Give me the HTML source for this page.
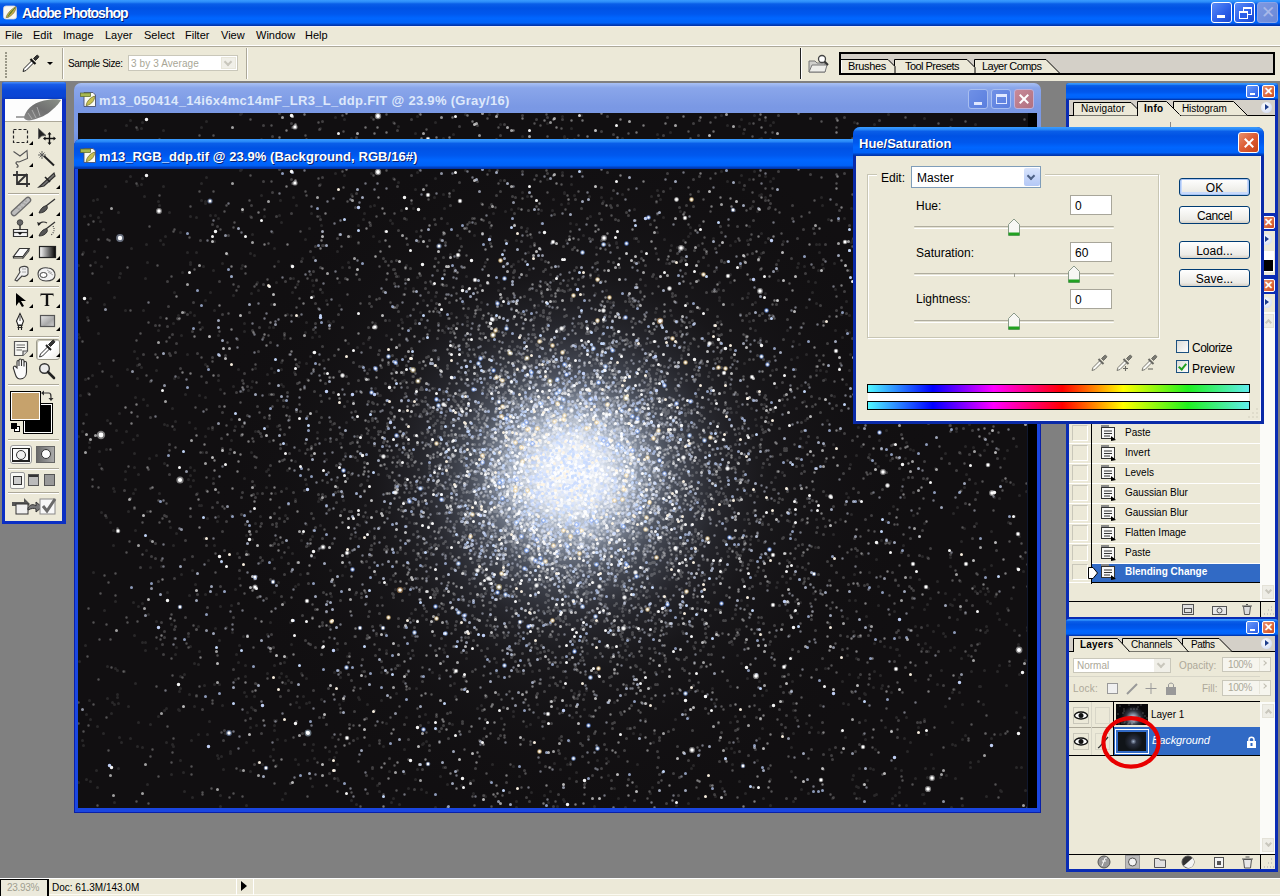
<!DOCTYPE html>
<html><head><meta charset="utf-8">
<style>
*{margin:0;padding:0;box-sizing:border-box}
html,body{width:1280px;height:896px;overflow:hidden;background:#808080;font-family:"Liberation Sans",sans-serif;font-size:11px;color:#000}
.a{position:absolute}
.t{position:absolute;white-space:nowrap;line-height:1}
.xpbar{background:linear-gradient(#3a9cff 0,#2a8af8 8%,#0a5ee8 15%,#0052e4 31%,#0058ee 54%,#0066ff 70%,#0062f8 88%,#0040c0 95%,#0030a0 100%)}
.face{background:#ece9d8}
</style></head><body>
<!-- app title bar -->
<div class="a xpbar" style="left:0;top:0;width:1280px;height:26px"></div><div class="a" style="left:0;top:26px;width:1280px;height:1px;background:#eef0f8"></div>
<svg class="a" style="left:3px;top:5px" width="15" height="15" viewBox="0 0 15 15"><rect x="0.5" y="1" width="13" height="13" rx="2.5" fill="#f8f8f2" stroke="#d0d4e0" stroke-width=".8"/><path d="M3 12.5 C4 9 7 5 13 1.5 C13 6 10 10 5 12.5Z" fill="#c0b048" stroke="#70602a" stroke-width=".6"/><path d="M5 11.5 C7 8 9 6 12 3" stroke="#5a8a30" stroke-width="1"/></svg><div class="t" style="left:22px;top:6px;font-size:14px;font-weight:bold;color:#fff;letter-spacing:-1px;text-shadow:1px 1px #0a1e70">Adobe Photoshop</div>
<div class="a" style="left:1211px;top:2px;width:21px;height:21px;border:1px solid #fff;border-radius:3px;background:linear-gradient(135deg,#5a8cf8,#2a5ee8 60%,#1848d0)"><div class="a" style="left:5px;top:12px;width:8px;height:3px;background:#fff"></div></div>
<div class="a" style="left:1234px;top:2px;width:21px;height:21px;border:1px solid #fff;border-radius:3px;background:linear-gradient(135deg,#5a8cf8,#2a5ee8 60%,#1848d0)"><div class="a" style="left:8px;top:4px;width:9px;height:8px;border:1px solid #fff;border-top-width:2px"></div><div class="a" style="left:4px;top:8px;width:9px;height:8px;border:1px solid #fff;border-top-width:2px;background:#2a5ee8"></div></div>
<div class="a" style="left:1257px;top:2px;width:21px;height:21px;border:1px solid #8aa4e8;border-radius:3px;background:linear-gradient(135deg,#7e98e0,#6a88d8)"><div class="t" style="left:3px;top:1px;font-size:17px;color:#a8b8e8">&#x2715;</div></div>

<!-- menu bar -->
<div class="a face" style="left:0;top:27px;width:1280px;height:19px"></div>
<div class="a" style="left:0;top:45px;width:1280px;height:1px;background:#fff"></div><div class="a" style="left:0;top:46px;width:1280px;height:1px;background:#aca899"></div>
<div class="t" style="left:5px;top:30px">File</div>
<div class="t" style="left:33px;top:30px">Edit</div>
<div class="t" style="left:63px;top:30px">Image</div>
<div class="t" style="left:105px;top:30px">Layer</div>
<div class="t" style="left:144px;top:30px">Select</div>
<div class="t" style="left:185px;top:30px">Filter</div>
<div class="t" style="left:221px;top:30px">View</div>
<div class="t" style="left:256px;top:30px">Window</div>
<div class="t" style="left:305px;top:30px">Help</div>

<!-- options bar -->
<div class="a face" style="left:0;top:47px;width:1280px;height:34px"></div>
<div class="a" style="left:5px;top:52px;width:2px;height:26px;background:repeating-linear-gradient(#9a9888 0 2px,transparent 2px 3px)"></div>
<svg class="a" style="left:21px;top:53px" width="34" height="20" viewBox="0 0 34 20"><path d="M2 18.5 L3 15.5 L11 7.5 L13 9.5 L5 17.5Z" fill="#fff" stroke="#222" stroke-width="1"/><path d="M9.5 6 L14.5 11" stroke="#111" stroke-width="2.2"/><path d="M12.5 5.5 L15.5 2.5 C16.5 1.5 18.5 3.5 17.5 4.5 L14.5 7.5Z" fill="#333" stroke="#111" stroke-width=".8"/><path d="M26 9 H32 L29 12Z" fill="#000"/></svg>
<div class="a" style="left:62px;top:48px;width:1px;height:31px;background:#aca899"></div>
<div class="a" style="left:63px;top:48px;width:1px;height:31px;background:#fff"></div>
<div class="t" style="left:68px;top:59px;font-size:10px;letter-spacing:-.35px">Sample Size:</div>
<div class="a" style="left:128px;top:55px;width:110px;height:16px;border:1px solid #c9c7ba;background:#fff"><div class="t" style="left:2px;top:3px;font-size:10px;letter-spacing:.1px;color:#a8a696">3 by 3 Average</div><div class="a" style="left:92px;top:1px;width:15px;height:12px;background:#f0efe8;border:1px solid #e8e6da"><div class="a" style="left:3px;top:1px;width:6px;height:6px;border-right:2px solid #c8c6bc;border-bottom:2px solid #c8c6bc;transform:rotate(45deg)"></div></div></div>
<div class="a" style="left:246px;top:48px;width:1px;height:31px;background:#aca899"></div>
<div class="a" style="left:247px;top:48px;width:1px;height:31px;background:#fff"></div>
<div class="a" style="left:800px;top:48px;width:1px;height:31px;background:#222"></div>
<div class="a" style="left:801px;top:48px;width:1px;height:31px;background:#fff"></div>
<svg class="a" style="left:807px;top:53px" width="24" height="22" viewBox="0 0 24 22"><path d="M2 8 H8 L10 10 H18 V19 H2 Z" fill="#d0d0cc" stroke="#777"/><path d="M2 19 L5 12 H20 L18 19Z" fill="#eeeeea" stroke="#777"/><circle cx="15" cy="6" r="3.5" fill="#fff" stroke="#444" stroke-width="1.3"/><path d="M17.5 8.5 L21 12" stroke="#333" stroke-width="2"/></svg>
<div class="a" style="left:839px;top:52px;width:436px;height:23px;background:#d4d0c8;border:2px solid #000;border-right-width:2px"></div>
<svg class="a" style="left:841px;top:54px" width="240" height="19" viewBox="0 0 240 19"><g stroke="#000" fill="#ece9d8"><path d="M133.5 20 V5.5 H205 L220 20.5Z"/><path d="M53.5 20 V5.5 H126 L134 13.5 V20Z"/><path d="M-1 20 V5.5 H47 L54 12.5 V20Z"/></g><path d="M0.5 6 V19" stroke="#fff"/></svg>
<div class="t" style="left:848px;top:61px;letter-spacing:-.35px">Brushes</div>
<div class="t" style="left:905px;top:61px;letter-spacing:-.55px">Tool Presets</div>
<div class="t" style="left:982px;top:61px;letter-spacing:-.55px">Layer Comps</div>

<!-- status bar -->
<div class="a face" style="left:0;top:878px;width:1280px;height:18px"></div>
<div class="a" style="left:0;top:878px;width:1280px;height:1px;background:#fff"></div>
<div class="a" style="left:0;top:894px;width:1280px;height:1px;background:#fbfaf2"></div>
<div class="a" style="left:0;top:879px;width:49px;height:17px;border:1px solid #000;border-width:1px 2px 0 1px;background:#eceadc"></div><div class="t" style="left:7px;top:883px;font-size:10px;letter-spacing:-.3px;color:#a09e90">23.93%</div>
<div class="t" style="left:52px;top:883px;font-size:10px">Doc: 61.3M/143.0M</div>
<div class="a" style="left:236px;top:879px;width:1px;height:16px;background:#fff"></div>
<div class="a" style="left:241px;top:881px;width:0;height:0;border-left:6px solid #000;border-top:5.5px solid transparent;border-bottom:5.5px solid transparent"></div>
<div class="a" style="left:253px;top:879px;width:1px;height:16px;background:#fff"></div>

<!-- doc window 1 (inactive) -->
<div class="a" style="left:74px;top:83px;width:967px;height:60px;border-radius:7px 7px 0 0;background:linear-gradient(#a9c1f4 0,#8aa6ea 8%,#7a98e4 40%,#7b9ae6 80%,#7090de 100%)"></div>
<div class="a" style="left:78px;top:113px;width:959px;height:30px;background:#060404;overflow:hidden"><svg width="959" height="30" style="position:absolute;left:0;top:0"><defs><filter id="gray"><feColorMatrix type="saturate" values="0"/></filter></defs><rect width="959" height="30" fill="#110f11"/><use href="#field2" filter="url(#gray)"/><rect x="950" y="0" width="9" height="30" fill="#000"/></svg></div>
<svg class="a" style="left:80px;top:90px" width="17" height="17" viewBox="0 0 17 17"><path d="M4 2.5 H13 L15.5 5 V16.5 H4Z" fill="#fbfbf4" stroke="#4a5070" stroke-width=".9"/><path d="M6 15.5 C7 11 10 7.5 14.5 6 C15 10 12 14 7 15.5Z" fill="#c8c050" stroke="#6a6a30" stroke-width=".7"/><rect x="0.5" y="3" width="10" height="3.6" fill="#a8b850" stroke="#5a6a28" stroke-width=".7"/></svg>
<div class="t" style="left:99px;top:94px;font-size:13px;font-weight:bold;letter-spacing:.3px;color:#dde8fb">m13_050414_14i6x4mc14mF_LR3_L_ddp.FIT @ 23.9% (Gray/16)</div>
<div class="a" style="left:968px;top:89px;width:20px;height:20px;border:1px solid #a8bef0;border-radius:3px;background:linear-gradient(135deg,#6f90e6,#5a7ede)"><div class="a" style="left:5px;top:12px;width:8px;height:3px;background:#e0e8ff"></div></div>
<div class="a" style="left:991px;top:89px;width:20px;height:20px;border:1px solid #a8bef0;border-radius:3px;background:linear-gradient(135deg,#6f90e6,#5a7ede)"><div class="a" style="left:4px;top:4px;width:11px;height:10px;border:1px solid #e0e8ff;border-top-width:3px"></div></div>
<div class="a" style="left:1014px;top:89px;width:20px;height:20px;border:1px solid #c0b0d8;border-radius:3px;background:linear-gradient(135deg,#c88a98,#b07080)"><div class="a" style="left:3px;top:8px;width:12px;height:2px;background:#fff;transform:rotate(45deg)"></div><div class="a" style="left:3px;top:8px;width:12px;height:2px;background:#fff;transform:rotate(-45deg)"></div></div>

<!-- doc window 2 (active) -->
<div class="a" style="left:74px;top:139px;width:967px;height:674px;border-radius:7px 7px 0 0;background:#1a46e0;border:1px solid #0a20a8;border-top:0"></div>
<div class="a xpbar" style="left:74px;top:139px;width:967px;height:30px;border-radius:7px 7px 0 0"></div>
<div class="a" style="left:78px;top:169px;width:959px;height:639px;background:#060404;overflow:hidden"><svg width="959" height="639" style="position:absolute;left:0;top:0"><defs><filter id="bl" x="0" y="0" width="1" height="1"><feGaussianBlur stdDeviation=".6"/></filter><radialGradient id="g2" cx="493" cy="305" r="400" gradientUnits="userSpaceOnUse"><stop offset="0" stop-color="#f0f4fb" stop-opacity="1"/><stop offset=".08" stop-color="#e2eaf6" stop-opacity=".95"/><stop offset=".15" stop-color="#b8c6dc" stop-opacity=".8"/><stop offset=".25" stop-color="#8490a6" stop-opacity=".5"/><stop offset=".375" stop-color="#565c6c" stop-opacity=".3"/><stop offset=".5" stop-color="#363840" stop-opacity=".18"/><stop offset=".7" stop-color="#202024" stop-opacity=".08"/><stop offset="1" stop-color="#000" stop-opacity="0"/></radialGradient></defs><rect width="959" height="639" fill="#110f11"/><rect width="959" height="639" fill="url(#g2)"/><g id="field2"><g filter="url(#bl)"><g transform="translate(.5 .5)">
<path d="M69 342h0M55 324h0M415 44h0M407 528h0M47 141h0M127 267h0M98 364h0M93 455h0M593 317h0M234 367h0M839 466h0M939 75h0M726 97h0M549 559h0M666 379h0M21 295h0M124 158h0M835 51h0M828 177h0M11 531h0M270 93h0M584 203h0M912 434h0M381 251h0M155 217h0M0 96h0M588 94h0M333 232h0M814 634h0M463 54h0M140 347h0M667 166h0M160 493h0M747 210h0M217 330h0M27 17h0M775 462h0M934 51h0M450 215h0M944 389h0M800 76h0M931 252h0M907 463h0M586 380h0M899 99h0M98 478h0M26 135h0M732 208h0M125 97h0M744 95h0M593 76h0M654 339h0M744 564h0M183 26h0M425 391h0M491 442h0M884 570h0M429 266h0M303 428h0M203 193h0M351 161h0M448 477h0M325 125h0M692 12h0M422 11h0M598 327h0M259 82h0M874 523h0M143 587h0M671 57h0M659 271h0M80 547h0M827 289h0M530 592h0M123 336h0M104 103h0M193 199h0M728 185h0M170 221h0M528 121h0M677 406h0M333 34h0M67 473h0M834 428h0M232 187h0M151 284h0M922 621h0M234 617h0M341 0h0M455 321h0M484 3h0M86 255h0M21 194h0M272 395h0M791 456h0M411 447h0M872 481h0M920 240h0M48 12h0M234 168h0M241 47h0M935 315h0M591 410h0M291 362h0M663 431h0M495 296h0M113 571h0M938 598h0M605 178h0M388 464h0M360 77h0M311 216h0M901 125h0M709 161h0M374 555h0M490 121h0M163 265h0M389 152h0M527 289h0M728 273h0M234 111h0M367 476h0M259 480h0M88 573h0M619 275h0M780 618h0M928 312h0M892 593h0M733 292h0M37 499h0M882 412h0M669 71h0M502 372h0M214 384h0M455 150h0M921 450h0M887 144h0M734 123h0M254 568h0M884 34h0M301 72h0M503 298h0M162 1h0M337 610h0M924 132h0M787 525h0M47 302h0M881 123h0M860 19h0M778 489h0M251 457h0M876 520h0M314 204h0M750 50h0M722 158h0M32 353h0M598 133h0M947 621h0M116 537h0M191 158h0M147 564h0M504 415h0M444 23h0M846 147h0M358 560h0M186 47h0M680 223h0M574 416h0M177 199h0M762 350h0M97 252h0M612 58h0M666 261h0M294 609h0M543 228h0M828 636h0M189 465h0M5 576h0M741 83h0M136 515h0M164 222h0M164 42h0M289 535h0M188 302h0M40 599h0M36 535h0M293 268h0M408 421h0M747 292h0M453 68h0M412 58h0M490 34h0M362 607h0M658 460h0M798 390h0M567 393h0M357 127h0M610 177h0M361 506h0M926 289h0M660 572h0M356 240h0M140 211h0M299 1h0M143 393h0M491 572h0M217 417h0M2 226h0M342 143h0M678 288h0M138 425h0M778 617h0M787 570h0M554 384h0M472 105h0M59 16h0M152 582h0M587 419h0M953 462h0M516 239h0M168 636h0M682 169h0M418 503h0M81 324h0M867 537h0M152 584h0M372 384h0M546 196h0M40 43h0M821 486h0M368 157h0M791 403h0M196 203h0M20 164h0M686 235h0M592 19h0M418 493h0M675 343h0M163 0h0M730 624h0M176 316h0M781 599h0M470 633h0M100 208h0M404 412h0M290 273h0M905 81h0M660 386h0M431 353h0M444 440h0M668 324h0M578 222h0M157 420h0M144 94h0M285 174h0M841 410h0M219 115h0M858 154h0M857 209h0M797 580h0M912 127h0M812 291h0M438 632h0M588 407h0M366 39h0M556 69h0M776 405h0M622 498h0M343 418h0M465 398h0M860 97h0M369 54h0M311 602h0M201 46h0M199 257h0M509 474h0M846 354h0M224 89h0M56 298h0M471 318h0M806 239h0M654 595h0M941 326h0M351 303h0M738 134h0M280 528h0M483 173h0M317 202h0M382 69h0M57 320h0M660 559h0M539 164h0M404 203h0M615 596h0M544 25h0M64 434h0M952 421h0M738 350h0M946 548h0M116 301h0M281 356h0M687 7h0M624 522h0M298 466h0M825 310h0M352 367h0M906 501h0M695 9h0M859 515h0M1 168h0M656 583h0M296 36h0M679 591h0M8 245h0M514 226h0M381 332h0M799 205h0M193 135h0M772 185h0M236 589h0M830 237h0M78 201h0M269 387h0M196 556h0M785 615h0M36 128h0M80 32h0M917 427h0M620 629h0M451 237h0M359 242h0M687 124h0M852 89h0M602 289h0M136 141h0M684 353h0M835 170h0M320 107h0M305 577h0M536 533h0M723 620h0M250 152h0M374 265h0M798 625h0M613 282h0M904 183h0M38 261h0M173 538h0M730 112h0M642 401h0M127 425h0M540 629h0M365 480h0M837 609h0M492 338h0M19 618h0M174 65h0M783 19h0M670 124h0M574 368h0M687 28h0M473 319h0M117 259h0M567 550h0M549 477h0M792 599h0M403 536h0M324 153h0M349 339h0M415 322h0M848 565h0M240 332h0M911 183h0M620 76h0M916 328h0M447 341h0M118 83h0M389 184h0M192 453h0M525 391h0M297 154h0M491 244h0M228 355h0M273 631h0M740 101h0M835 281h0M399 427h0M194 390h0M884 636h0M396 66h0M527 75h0M267 397h0M816 442h0M338 225h0M571 414h0M715 632h0M417 240h0M919 130h0M873 6h0M516 637h0M496 437h0M343 380h0M909 432h0M94 239h0M924 311h0M598 636h0M508 521h0M199 570h0M57 361h0M663 6h0M188 318h0M255 413h0M956 367h0M102 63h0M773 39h0M339 108h0M95 577h0M334 287h0M52 569h0M647 373h0M382 454h0M832 55h0M538 73h0M369 257h0M118 527h0M234 122h0M771 101h0M285 304h0M236 388h0M836 78h0M369 420h0M298 249h0M169 543h0M635 69h0M346 319h0M63 198h0M120 457h0M846 550h0M636 224h0M632 446h0M683 25h0M155 126h0M365 25h0M546 457h0M417 437h0M582 30h0M106 505h0M876 478h0M794 179h0M487 432h0M343 263h0M642 152h0M797 73h0M345 131h0M429 72h0M449 231h0M182 347h0M896 417h0M235 88h0M742 536h0M796 474h0M176 527h0M353 352h0M797 152h0M938 543h0M209 238h0M585 532h0M137 46h0M681 569h0M8 610h0M695 242h0M771 431h0M449 346h0M317 420h0M131 552h0M607 541h0M709 441h0M508 360h0M217 292h0M128 321h0M921 329h0M539 495h0M744 36h0M357 9h0M161 476h0M909 461h0M579 63h0M244 123h0M803 371h0M177 354h0M658 243h0M775 606h0M328 96h0M837 511h0M376 304h0M585 48h0M207 571h0M41 108h0M448 368h0M339 3h0M320 13h0M945 28h0M643 174h0M479 167h0M877 576h0M191 272h0M228 509h0M69 615h0M347 545h0M837 457h0M955 96h0M852 429h0M137 459h0M883 372h0M884 535h0M168 573h0M727 400h0M19 30h0M856 180h0M95 154h0M123 31h0M14 206h0M308 554h0M800 100h0M343 231h0M652 553h0M941 367h0M593 519h0M526 451h0M346 338h0M242 356h0M776 624h0M599 78h0M196 496h0M423 549h0M874 575h0M203 504h0M876 430h0M906 400h0M241 167h0M941 505h0M789 180h0M465 569h0M654 381h0M555 564h0M954 190h0M106 622h0M845 625h0M36 322h0M412 67h0M115 311h0M141 471h0M107 225h0M881 223h0M261 113h0M66 27h0M391 355h0M382 203h0M933 247h0M585 240h0M751 580h0M454 413h0M328 349h0M587 432h0M603 347h0M822 222h0M547 638h0M726 232h0M146 422h0M873 205h0M828 273h0M673 239h0M635 333h0M635 175h0M700 111h0M5 83h0M633 397h0M768 161h0M0 165h0M231 533h0M610 548h0M356 28h0M352 455h0M337 246h0M556 40h0M824 51h0M9 148h0M519 591h0M316 247h0M86 541h0M134 260h0M600 204h0M941 118h0M498 55h0M636 190h0M849 435h0M238 242h0M517 194h0M192 587h0M49 200h0M392 360h0M262 508h0M681 512h0M435 597h0M842 36h0M68 381h0M139 586h0M40 534h0M223 371h0M375 21h0M614 142h0M412 433h0M476 594h0M464 552h0M518 56h0M217 590h0M574 618h0M905 419h0M319 287h0M286 44h0M571 294h0M126 369h0M359 423h0M162 601h0M807 558h0M112 317h0M112 298h0M513 323h0M189 257h0M481 569h0M547 440h0M719 98h0M29 251h0M279 569h0M554 149h0M751 454h0M206 493h0M567 116h0M893 502h0M756 94h0M679 42h0M844 24h0M60 553h0M472 493h0M248 443h0M652 105h0M613 599h0M230 375h0M801 216h0M802 506h0M469 10h0M438 214h0M280 56h0M39 525h0M260 611h0M857 251h0M821 618h0M8 545h0M826 328h0M72 398h0M606 240h0M648 579h0M348 623h0M800 436h0M33 207h0M913 569h0M563 368h0M269 487h0M472 622h0M475 30h0M59 196h0M653 579h0M931 496h0M189 205h0M103 166h0M369 615h0M195 580h0M721 175h0M879 338h0M39 528h0M339 600h0M233 44h0M722 433h0M774 71h0M663 494h0M901 474h0M376 514h0M178 556h0M554 257h0M674 391h0M261 136h0M344 446h0M804 207h0M603 88h0M56 284h0M326 211h0M208 507h0M804 516h0M29 497h0M483 270h0M604 462h0M383 327h0M615 367h0M182 393h0M158 485h0M284 502h0M709 391h0M615 477h0M534 401h0M302 226h0M709 441h0M328 548h0M848 310h0M815 337h0M899 123h0M128 8h0M561 242h0M796 502h0M41 568h0M906 281h0M949 458h0M844 387h0M767 568h0M542 476h0M708 413h0M870 127h0M743 28h0M554 264h0M179 515h0M853 585h0M481 396h0M766 49h0M523 185h0M7 476h0M795 518h0M117 415h0M498 433h0M6 47h0M664 382h0M172 602h0M677 161h0M334 207h0M953 480h0M239 263h0M1 492h0M328 50h0M33 544h0M323 41h0M439 135h0M849 456h0M722 158h0M26 441h0M566 419h0M666 194h0M64 9h0M136 72h0M929 439h0M737 113h0M426 465h0M29 529h0M266 6h0M562 422h0M243 56h0M59 189h0M892 598h0M519 112h0M706 236h0M214 123h0M452 555h0M636 534h0M28 280h0M441 454h0M112 306h0M221 281h0M65 230h0M898 354h0M213 475h0M105 603h0M203 53h0M71 289h0M196 423h0M114 628h0M493 15h0M710 343h0M671 10h0M291 200h0M63 15h0M345 309h0M30 113h0M228 534h0M778 387h0M525 247h0M539 175h0M873 638h0M308 481h0M757 161h0M928 455h0M67 481h0M132 46h0M559 285h0M508 434h0M500 356h0M567 161h0M395 611h0M788 447h0M654 135h0M882 284h0M919 502h0M412 612h0M355 452h0M206 169h0M130 259h0M330 484h0M749 251h0M603 186h0M195 158h0M622 104h0M43 573h0M395 358h0M765 534h0M238 110h0M863 501h0M22 52h0M190 300h0M698 218h0M180 593h0M369 458h0M764 512h0M771 505h0M89 423h0M132 123h0M103 405h0M247 270h0M380 334h0M742 201h0M311 151h0M603 156h0M834 438h0M598 279h0M770 328h0M817 599h0M694 201h0M60 437h0M326 332h0M508 447h0M784 385h0M931 74h0M727 251h0M102 519h0M237 163h0M327 119h0M787 551h0M862 608h0M813 523h0M350 239h0M362 70h0M850 482h0M164 96h0M483 208h0M813 561h0M525 291h0M205 217h0M96 209h0M763 145h0M64 473h0M199 231h0M919 444h0M876 22h0M414 458h0M756 227h0M714 512h0M846 634h0M313 633h0M175 581h0M728 554h0M886 132h0M489 595h0M406 384h0M264 268h0M449 59h0M227 163h0M936 461h0M443 379h0M801 271h0M832 573h0M398 204h0M207 346h0M692 636h0M833 227h0M297 405h0M136 376h0M737 378h0M265 331h0M488 319h0M337 245h0M96 469h0M446 533h0M39 501h0M913 396h0M625 477h0M382 208h0M210 511h0M529 415h0M309 306h0M348 572h0M457 212h0M584 502h0M355 247h0M875 344h0M318 524h0M661 13h0M57 514h0M218 36h0M528 589h0M887 277h0M717 548h0M572 624h0M53 79h0M679 402h0M644 619h0M938 277h0M676 111h0M633 326h0M46 502h0M476 439h0M320 306h0M312 410h0M768 215h0M44 273h0M397 187h0M676 2h0M78 286h0M34 533h0M197 324h0M610 240h0M781 21h0M454 502h0M511 546h0M654 475h0M153 436h0M388 107h0M450 315h0M558 617h0M525 200h0M196 79h0M461 593h0M918 424h0M180 121h0M680 453h0M403 133h0M227 70h0M96 123h0M929 200h0M12 129h0M388 445h0M796 626h0M715 172h0M154 463h0M344 575h0M135 101h0M564 511h0M482 367h0M395 347h0M55 270h0M231 59h0M723 216h0M428 438h0M414 595h0M492 593h0M273 25h0M499 478h0M387 146h0M248 290h0M96 260h0M275 232h0M634 210h0M399 539h0M81 36h0M252 401h0M652 161h0M886 359h0M135 309h0M657 445h0M768 72h0M333 444h0M172 84h0M687 73h0M643 2h0M812 478h0M121 226h0M123 14h0M573 27h0M114 401h0M835 346h0M281 530h0M436 55h0M665 174h0M771 146h0M467 235h0M832 280h0M301 622h0M488 71h0M705 72h0M198 370h0M814 153h0M740 563h0M86 294h0M627 269h0M230 404h0M527 194h0M684 298h0M636 295h0M168 382h0M64 578h0M4 262h0M881 222h0M683 64h0M109 185h0M577 357h0M637 285h0M223 504h0M647 317h0M130 391h0M488 200h0M548 141h0M141 515h0M868 606h0M593 146h0M792 290h0M578 84h0M288 469h0M930 353h0M56 182h0M910 422h0M576 564h0M795 600h0M259 609h0M127 195h0M442 222h0M678 256h0M338 519h0M264 406h0M361 369h0M243 530h0M576 400h0M812 99h0M416 177h0M692 537h0M945 402h0M900 109h0M662 98h0M834 32h0M80 161h0M469 159h0M693 72h0M7 210h0M336 200h0M624 340h0M717 432h0M509 484h0M202 31h0M829 51h0M844 625h0M450 83h0M683 465h0M21 282h0M572 215h0M110 467h0M353 114h0M480 265h0M102 591h0M363 331h0M251 590h0M373 389h0M578 109h0M261 535h0M85 17h0M612 520h0M579 45h0M929 281h0M299 616h0M292 37h0M410 365h0M277 367h0M437 207h0M612 325h0M495 217h0M303 531h0M570 382h0M129 349h0M776 9h0M891 255h0M176 410h0M375 271h0M385 363h0M256 503h0M163 99h0M203 215h0M148 458h0M290 170h0M11 278h0M12 550h0M0 613h0M242 15h0M680 371h0M562 565h0M254 255h0M486 24h0M713 602h0M262 274h0M431 298h0M882 440h0M677 133h0M640 120h0M697 308h0M803 519h0M427 42h0M847 474h0M82 148h0M48 262h0M604 265h0M846 5h0M755 275h0M818 548h0M472 238h0M392 612h0M505 66h0M631 318h0M291 387h0M571 427h0M455 573h0M578 33h0M225 527h0M291 576h0M277 425h0M234 581h0M785 64h0M849 608h0M897 11h0M472 598h0M806 253h0M889 41h0M149 85h0M672 370h0M768 324h0M786 524h0M901 517h0M937 82h0M677 250h0M19 557h0M293 4h0M773 345h0M89 256h0M198 596h0M871 256h0M111 253h0M563 278h0M840 42h0M280 74h0M85 75h0M425 273h0M614 326h0M534 462h0M376 99h0M166 162h0M263 342h0M840 558h0M669 436h0M610 634h0M657 290h0M373 144h0M897 422h0M486 632h0M35 319h0M634 519h0M285 50h0M511 27h0M640 440h0M881 523h0M215 28h0M267 284h0M434 457h0M376 358h0M933 429h0M612 64h0M221 538h0M689 192h0M335 486h0M781 629h0M28 348h0M738 201h0M209 301h0M641 131h0M573 465h0M297 219h0M334 466h0M165 467h0M720 94h0M241 329h0M847 599h0M719 444h0M764 168h0M699 413h0M491 609h0M350 407h0M487 272h0M886 318h0M496 524h0M403 398h0M849 388h0M887 566h0M671 152h0M799 223h0M407 627h0M681 26h0M112 95h0M167 507h0M597 550h0M208 488h0M893 215h0M346 49h0M772 295h0M179 113h0M330 371h0M506 540h0M121 336h0M902 422h0M878 262h0M506 173h0M198 551h0M258 311h0M485 630h0M167 496h0M255 152h0M948 137h0M315 200h0M444 300h0M532 133h0M867 467h0M112 477h0M498 603h0M142 437h0M257 4h0M403 34h0M602 42h0M498 330h0M422 206h0M475 111h0M35 361h0M802 154h0M669 509h0M828 548h0M440 92h0M95 376h0M116 146h0M549 207h0M836 12h0M897 111h0M808 286h0M196 551h0M142 626h0M874 436h0M203 388h0M166 523h0M817 626h0M653 243h0M129 565h0M669 294h0M198 113h0M653 347h0M681 276h0M527 208h0M279 178h0M848 417h0M42 104h0M506 525h0M435 542h0M950 490h0M747 499h0M270 174h0M335 119h0M892 158h0M603 419h0M172 558h0M166 154h0M857 299h0M796 11h0M761 261h0M631 203h0M157 257h0M369 352h0M387 511h0M883 489h0M755 365h0M308 260h0M763 562h0M356 219h0M325 205h0M715 564h0M728 354h0M292 54h0M507 353h0M393 356h0M882 65h0M664 594h0M928 516h0M802 148h0M507 613h0M860 456h0M815 95h0M684 526h0M953 414h0M118 48h0M308 166h0M535 283h0M208 275h0M488 455h0M881 425h0M228 153h0M384 183h0M550 403h0M435 547h0M93 605h0M610 323h0M577 210h0M907 564h0M688 521h0M943 598h0M357 638h0M917 161h0M907 168h0M15 31h0M529 338h0M569 216h0M430 150h0M808 261h0M23 343h0M140 589h0M177 262h0M411 1h0M683 84h0M685 629h0M811 204h0M252 154h0M220 147h0M560 72h0M451 100h0M92 358h0M395 624h0M131 552h0M891 183h0M575 573h0M823 321h0M516 503h0M218 533h0M68 75h0M449 257h0M121 482h0M184 595h0M374 334h0M645 402h0M256 588h0M18 217h0M459 535h0M847 171h0M916 252h0M78 479h0M331 425h0M791 127h0M39 216h0M220 595h0M87 67h0M466 552h0M665 20h0M120 565h0M595 268h0M331 410h0M438 638h0M209 145h0M867 424h0M613 540h0M153 346h0M657 547h0M252 208h0M484 197h0M635 415h0M538 74h0M594 241h0M164 221h0M365 598h0M550 430h0M176 86h0M613 407h0M818 480h0M512 108h0M140 49h0M850 419h0M210 378h0M25 60h0M230 376h0M326 604h0M947 491h0M728 138h0M212 453h0M253 427h0M901 285h0M24 300h0M295 67h0M67 109h0M333 319h0M372 85h0M536 619h0M472 508h0M127 131h0M560 331h0M568 534h0M661 460h0M358 410h0M880 235h0M857 142h0M466 626h0M201 508h0M472 143h0M669 128h0M577 143h0M272 67h0M877 609h0M884 629h0M372 287h0M713 578h0M160 200h0M363 115h0M463 41h0M100 150h0M119 324h0M715 534h0M314 54h0M323 150h0M533 29h0M789 611h0M661 612h0M168 366h0M879 59h0M173 124h0M486 23h0M276 467h0M382 304h0M873 44h0M55 433h0M365 384h0M50 537h0M250 341h0M829 582h0M109 83h0M229 210h0M288 434h0M25 564h0M591 168h0M362 146h0M441 502h0M494 548h0M619 312h0M672 269h0M337 20h0M907 251h0M920 55h0M524 228h0M153 250h0M41 244h0M17 93h0M923 622h0M174 370h0M174 212h0M72 555h0M897 314h0M700 91h0M245 191h0M540 587h0M517 102h0M610 67h0M142 637h0M958 607h0M768 132h0M800 297h0M366 163h0M69 236h0M232 280h0M810 142h0M548 170h0M489 287h0M69 93h0M194 63h0M518 78h0M204 630h0M354 503h0M533 465h0M479 637h0M553 132h0M492 331h0M908 457h0M641 113h0M278 635h0M59 209h0M911 229h0M140 166h0M724 278h0M385 332h0M914 121h0M37 432h0M889 191h0M304 340h0M279 291h0M689 416h0M82 71h0M326 580h0M235 116h0M654 369h0M777 431h0M582 419h0M112 47h0M59 577h0M952 633h0M905 535h0M590 395h0M407 93h0M551 559h0M200 413h0M312 51h0M501 522h0M222 405h0M78 452h0M948 322h0M950 421h0M12 612h0M456 138h0M72 371h0M449 27h0M479 374h0M228 315h0M112 93h0M559 595h0M207 624h0M580 338h0M35 376h0M530 606h0M517 295h0M890 486h0M338 62h0M460 548h0M375 268h0M463 451h0M635 315h0M922 184h0M919 132h0M496 26h0M490 111h0M867 284h0M573 72h0M621 56h0M872 388h0M59 266h0M448 557h0M713 488h0M593 239h0M508 426h0M803 102h0M814 629h0M70 445h0M203 200h0M124 283h0M748 326h0M474 41h0M638 100h0M118 460h0M23 43h0M897 231h0M15 403h0M685 210h0M457 478h0M489 165h0M248 131h0M605 71h0M474 428h0M872 397h0M785 565h0M771 163h0M517 124h0M383 318h0M335 39h0M435 95h0M572 262h0M494 277h0M637 627h0M865 464h0M420 113h0M878 51h0M111 426h0M819 480h0M50 342h0M846 440h0M949 461h0M814 68h0M60 305h0M583 253h0M517 17h0M513 204h0M479 539h0M487 589h0M573 314h0M586 70h0M452 77h0M719 188h0M383 616h0M933 132h0M711 352h0M207 514h0M652 76h0M300 226h0M397 249h0M345 574h0M216 203h0M265 531h0M525 32h0M406 626h0M754 629h0M36 633h0M83 397h0M810 1h0M852 478h0M769 449h0M120 495h0M699 101h0M889 15h0M454 231h0M157 510h0M843 82h0M940 475h0M951 615h0M206 433h0M492 54h0M94 575h0M879 450h0M88 539h0M175 540h0M139 352h0M572 518h0M614 581h0M512 47h0M640 554h0M488 508h0M855 599h0M200 92h0M0 267h0M126 516h0M287 336h0M388 58h0M357 638h0M172 47h0M921 496h0M287 352h0M377 527h0M101 522h0M268 253h0M56 466h0M337 471h0M744 95h0M888 305h0M874 553h0M4 571h0M189 504h0M666 350h0M440 39h0M940 242h0M558 311h0M10 224h0M321 635h0M112 143h0M895 278h0M748 202h0M315 629h0M651 208h0M548 490h0M769 486h0M173 283h0M812 372h0M23 97h0M667 624h0M47 310h0M642 612h0M515 452h0M679 327h0M57 228h0M542 185h0M8 71h0M723 351h0M681 146h0M641 128h0M264 98h0M692 610h0M630 96h0M97 485h0M16 82h0M531 334h0M503 2h0M922 565h0M628 324h0M111 525h0M307 464h0M378 394h0M329 147h0M145 600h0M610 522h0M196 561h0M166 309h0M541 439h0M719 397h0M220 415h0M791 285h0M477 237h0M663 400h0M259 595h0M281 369h0M908 627h0M215 109h0M649 12h0M463 90h0M957 396h0M144 536h0M803 230h0M173 218h0M745 99h0M325 512h0M153 271h0M321 496h0M365 224h0M579 21h0M722 269h0M208 319h0M349 312h0M732 415h0M100 146h0M20 48h0M735 424h0M347 268h0M536 410h0M733 558h0M478 139h0M817 410h0M614 118h0M342 367h0M519 207h0M718 239h0M808 352h0M505 268h0M337 151h0M168 527h0M460 136h0M102 507h0M433 40h0M303 503h0M279 271h0M100 540h0M321 175h0M924 220h0M385 134h0M757 120h0M110 310h0M619 433h0M221 193h0M377 292h0M441 607h0M289 311h0M691 475h0M240 381h0M898 460h0M346 49h0M741 75h0M308 342h0M784 161h0M521 372h0M778 286h0M366 483h0M821 623h0M773 73h0M530 74h0M819 21h0M127 32h0M271 484h0M883 321h0M127 34h0M738 75h0M698 418h0M659 486h0M91 43h0M101 541h0M954 469h0M826 569h0M599 524h0M907 425h0M161 409h0M898 178h0M482 600h0M855 462h0M523 28h0M806 477h0M438 71h0M485 261h0M521 213h0M418 465h0M652 517h0M825 376h0M683 257h0M405 569h0M308 504h0M584 484h0M179 324h0M12 46h0M324 212h0M881 508h0M352 375h0M408 269h0M872 435h0M639 165h0M251 582h0M954 112h0M770 535h0M531 229h0M142 220h0M856 52h0M191 225h0M568 260h0M389 457h0M684 559h0M18 601h0M780 258h0M11 273h0M52 7h0M844 479h0M273 226h0M483 35h0M546 148h0M536 232h0M774 610h0M771 201h0M953 420h0M228 194h0M704 303h0M472 268h0M383 306h0M652 219h0M642 279h0M823 601h0M484 357h0M544 280h0M715 541h0M269 232h0M866 64h0M598 164h0M460 44h0M783 277h0M657 72h0M820 167h0M331 353h0M957 213h0M350 553h0M652 113h0M258 583h0M913 362h0M116 494h0M315 9h0M649 382h0M353 131h0M606 270h0M453 623h0M387 1h0M459 484h0M674 37h0M713 190h0M780 508h0M511 224h0M800 417h0M388 489h0M484 436h0M159 384h0M520 106h0M420 121h0M65 141h0M605 89h0M411 38h0M900 592h0M720 436h0M330 619h0M289 348h0M902 183h0M859 132h0M343 620h0M660 237h0M421 426h0M902 517h0M235 575h0M229 591h0M859 412h0M127 228h0" stroke="#ffffff" stroke-opacity=".1" stroke-width="3" stroke-linecap="round"/>
<path d="M555 457h0M322 380h0M431 294h0M398 295h0M458 282h0M434 211h0M517 278h0M724 296h0M450 307h0M376 425h0M336 266h0M511 364h0M343 247h0M403 425h0M630 433h0M523 275h0M804 148h0M433 439h0M418 282h0M466 293h0M387 266h0M594 250h0M526 75h0M385 229h0M339 384h0M445 363h0M485 502h0M454 208h0M607 244h0M497 180h0M520 279h0M486 302h0M621 244h0M424 390h0M532 371h0M566 380h0M419 283h0M519 452h0M617 372h0M482 299h0M533 488h0M401 275h0M467 214h0M512 298h0M515 340h0M640 342h0M405 164h0M738 500h0M498 398h0M623 406h0M480 311h0M465 309h0M434 272h0M385 402h0M657 440h0M370 292h0M640 325h0M734 331h0M366 421h0M345 169h0M456 228h0M502 359h0M488 373h0M432 281h0M464 231h0M412 324h0M598 339h0M542 283h0M496 296h0M604 273h0M524 317h0M449 300h0M444 365h0M477 245h0M363 49h0M356 97h0M497 175h0M522 484h0M507 321h0M462 264h0M494 364h0M468 327h0M863 289h0M515 379h0M903 222h0M675 151h0M487 441h0M226 321h0M506 468h0M577 454h0M438 304h0M473 285h0M485 303h0M514 289h0M491 255h0M510 299h0M601 38h0M474 278h0M526 575h0M329 398h0M514 285h0M549 317h0M466 337h0M545 296h0M494 262h0M612 274h0M470 247h0M532 316h0M619 294h0M535 297h0M318 107h0M508 255h0M388 205h0M566 307h0M505 265h0M701 540h0M252 260h0M510 318h0M532 237h0M388 483h0M587 246h0M821 299h0M598 410h0M510 298h0M489 268h0M571 352h0M611 314h0M492 330h0M415 353h0M598 417h0M551 286h0M474 280h0M501 307h0M591 320h0M343 150h0M456 318h0M505 363h0M509 368h0M405 292h0M427 341h0M459 524h0M621 251h0M608 284h0M195 225h0M475 196h0M454 341h0M509 356h0M467 339h0M576 404h0M496 260h0M213 10h0M572 372h0M562 176h0M483 320h0M532 328h0M574 337h0M595 604h0M531 353h0M538 244h0M473 298h0M507 285h0M405 262h0M501 283h0M442 311h0M488 250h0M411 153h0M545 275h0M550 233h0M421 208h0M540 263h0M487 338h0M615 10h0M506 301h0M454 313h0M456 74h0M478 331h0M474 324h0M473 303h0M344 232h0M520 374h0M243 330h0M450 363h0M119 425h0M466 264h0M449 299h0M678 548h0M452 397h0M532 298h0M578 280h0M545 357h0M646 331h0M497 274h0M397 304h0M516 321h0M143 269h0M412 74h0M453 279h0M425 360h0M317 367h0M561 244h0M305 122h0M461 338h0M567 310h0M538 401h0M497 345h0M515 263h0M499 289h0M466 309h0M487 250h0M347 113h0M653 281h0M448 260h0M475 306h0M456 361h0M444 324h0M432 334h0M563 234h0M389 350h0M571 264h0M198 354h0M641 407h0M682 414h0M424 389h0M278 324h0M453 310h0M338 315h0M96 460h0M540 304h0M438 309h0M470 221h0M499 529h0M458 252h0M659 552h0M570 220h0M511 306h0M887 334h0M466 355h0M445 256h0M514 606h0M517 347h0M469 155h0M362 295h0M415 341h0M466 327h0M446 425h0M517 160h0M489 274h0M585 257h0M319 17h0M500 316h0M754 239h0M404 188h0M536 436h0M475 306h0M652 277h0M440 320h0M405 284h0M463 361h0M462 514h0M585 309h0M268 207h0M483 189h0M174 161h0M533 299h0M607 424h0M678 367h0M510 323h0M522 269h0M547 132h0M335 140h0M467 204h0M462 378h0M375 156h0M463 324h0M464 234h0M527 383h0M432 347h0M521 278h0M319 383h0M486 232h0M505 318h0M582 301h0M630 207h0M291 168h0M550 610h0M512 330h0M262 431h0M339 368h0M469 335h0M779 381h0M351 581h0M436 102h0M303 492h0M448 353h0M570 366h0M512 252h0M626 405h0M670 350h0M533 268h0M432 284h0M399 247h0M451 297h0M490 287h0M627 334h0M507 292h0M477 254h0M485 319h0M551 309h0M687 151h0M478 263h0M816 492h0M401 302h0M504 230h0M428 248h0M459 232h0M397 383h0M548 297h0M830 137h0M288 549h0M498 292h0M598 271h0M530 404h0M450 335h0M509 283h0M547 525h0M366 266h0M328 284h0M551 421h0M436 180h0M684 260h0M544 304h0M173 48h0M545 386h0M531 174h0M458 223h0M463 342h0M611 153h0M479 288h0M530 319h0M686 373h0M433 329h0M521 400h0M878 301h0M442 249h0M494 261h0M336 354h0M581 450h0M232 475h0M408 527h0M586 147h0M619 381h0M667 312h0M503 284h0M625 269h0M444 2h0M783 150h0M462 312h0M461 466h0M256 254h0M311 308h0M465 442h0M389 257h0M391 53h0M495 344h0M471 314h0M271 342h0M351 299h0M481 249h0M531 388h0M463 410h0M406 210h0M603 313h0M501 337h0M491 329h0M522 307h0M534 239h0M624 301h0M482 228h0M460 377h0M790 466h0M425 336h0M475 301h0M809 172h0M862 110h0M370 405h0M487 272h0M508 365h0M490 318h0M459 315h0M540 286h0M448 106h0M499 333h0M96 409h0M447 321h0M708 546h0M521 194h0M526 359h0M118 460h0M474 296h0M623 324h0M742 421h0M454 298h0M490 301h0M557 296h0M554 319h0M644 270h0M316 114h0M497 330h0M458 310h0M463 235h0M457 307h0M502 330h0M615 254h0M488 358h0M519 360h0M529 290h0M428 420h0M485 295h0M490 262h0M313 244h0M518 295h0M461 389h0M834 429h0M444 188h0M452 282h0M576 383h0M183 564h0M823 265h0M545 149h0M501 177h0M606 178h0M530 312h0M417 312h0M233 277h0M646 271h0M475 318h0M585 281h0M535 175h0M409 364h0M554 365h0M572 443h0M98 174h0M560 435h0M129 438h0M450 329h0M479 283h0M492 341h0M309 254h0M589 283h0M671 354h0M481 162h0M301 281h0M261 202h0M554 321h0M424 279h0M309 287h0M419 284h0M446 169h0M637 239h0M381 13h0M372 307h0M811 344h0M416 468h0M423 346h0M480 332h0M241 16h0M375 250h0M717 629h0M549 377h0M459 241h0M475 303h0M557 154h0M528 268h0M501 322h0M505 357h0M621 396h0M454 326h0M503 330h0M482 353h0M723 304h0M483 274h0M664 129h0M589 4h0M436 101h0M418 292h0M500 418h0M403 481h0M522 381h0M538 210h0M280 211h0M457 325h0M527 262h0M409 248h0M451 325h0M549 199h0M780 467h0M555 372h0M233 286h0M439 325h0M625 390h0M480 329h0M617 362h0M618 197h0M362 315h0M579 582h0M555 287h0M371 554h0M483 337h0M637 261h0M584 386h0M499 316h0M478 310h0M871 448h0M294 233h0M539 371h0M511 330h0M589 293h0M519 278h0M604 276h0M717 200h0M444 312h0M569 300h0M469 327h0M586 307h0M682 100h0M522 315h0M645 121h0M601 300h0M725 60h0M491 290h0M414 466h0M532 346h0M235 349h0M397 290h0M399 391h0M359 142h0M454 253h0M296 269h0M524 426h0M631 283h0M827 133h0M397 371h0M385 235h0M475 303h0M509 386h0M489 321h0M227 310h0M425 228h0M677 580h0M440 317h0M533 279h0M638 322h0M505 339h0M501 274h0M397 328h0M470 253h0M471 352h0M603 358h0M452 384h0M255 223h0M497 298h0M501 301h0M690 253h0M489 191h0M287 209h0M534 335h0M316 248h0M557 328h0M492 266h0M559 367h0M518 503h0M698 135h0M653 188h0M488 310h0M465 308h0M500 339h0M423 216h0M602 339h0M198 47h0M407 239h0M494 253h0M433 258h0M359 316h0M371 133h0M584 300h0M434 235h0M419 466h0M487 281h0M485 262h0M489 319h0M376 102h0M418 269h0M529 331h0M456 377h0M652 180h0M435 377h0M519 203h0M276 380h0M434 382h0M445 376h0M780 416h0M343 218h0M444 232h0M477 300h0M582 245h0M467 433h0M491 341h0M542 282h0M374 317h0M603 268h0M593 281h0M538 202h0M480 441h0M707 558h0M145 571h0M524 180h0M289 624h0M434 172h0M566 247h0M448 366h0M478 254h0M306 263h0M579 268h0M545 359h0M576 462h0M447 295h0M431 133h0M507 262h0M586 438h0M901 222h0M294 457h0M466 273h0M489 412h0M348 450h0M72 212h0M535 240h0M452 295h0M423 201h0M442 392h0M623 362h0M626 453h0M319 275h0M466 320h0M472 151h0M398 361h0M434 257h0M559 248h0M502 272h0M328 196h0M426 275h0M491 326h0M424 427h0M262 264h0M865 516h0M550 46h0M602 401h0M463 312h0M622 339h0M636 102h0M495 321h0M535 254h0M588 360h0M139 57h0M535 93h0M456 301h0M498 98h0M196 399h0M411 309h0M519 201h0M468 382h0M473 377h0M469 263h0M664 396h0M469 412h0M444 484h0M528 321h0M423 258h0M480 625h0M761 199h0M547 289h0M539 371h0M155 448h0M564 211h0M740 405h0M336 464h0M499 264h0M553 348h0M202 279h0M501 337h0M506 240h0M373 265h0M495 363h0M408 374h0M426 11h0M491 295h0M499 214h0M183 354h0M505 306h0M357 139h0M552 559h0M602 92h0M576 374h0M524 228h0M562 299h0M608 36h0M490 220h0M421 183h0M516 306h0M379 66h0M491 307h0M383 343h0M566 221h0M578 204h0M465 360h0M525 157h0M705 170h0M506 360h0M630 327h0M260 322h0M536 553h0M521 213h0M494 283h0M369 223h0M186 248h0M461 337h0M535 274h0M134 55h0M485 311h0M290 158h0M320 457h0M586 197h0M817 411h0M481 332h0M442 467h0M538 343h0M534 158h0M561 461h0M545 446h0M475 323h0M524 34h0M555 129h0M645 451h0M351 287h0M563 202h0M541 371h0M438 270h0M366 263h0M543 294h0M720 289h0M511 342h0M726 337h0M578 264h0M471 289h0M466 290h0M604 288h0M496 384h0M695 320h0M551 331h0M346 439h0M445 313h0M487 291h0M467 406h0M562 110h0M774 523h0M535 306h0M337 440h0M91 275h0M502 294h0M433 488h0M224 446h0M473 286h0M342 220h0M575 337h0M586 365h0M484 385h0M493 267h0M557 393h0M438 214h0M498 297h0M540 235h0M401 384h0M435 149h0M457 259h0M470 320h0M571 465h0M466 253h0M458 313h0M422 22h0M585 22h0M434 375h0M390 468h0M832 94h0M380 225h0M322 293h0M702 285h0M869 223h0M412 265h0M442 178h0M128 376h0M369 282h0M459 339h0M545 436h0M473 311h0M509 156h0M503 371h0M339 451h0M590 355h0M523 384h0M451 314h0M491 285h0M454 341h0M662 145h0M538 290h0M167 355h0M470 378h0M504 488h0M516 334h0M472 348h0M368 352h0M540 346h0M328 505h0M891 310h0M671 281h0M764 480h0M481 328h0M503 313h0M525 420h0M533 138h0M560 335h0M462 301h0M782 467h0M473 253h0M534 554h0M462 311h0M548 318h0M476 531h0M445 265h0M177 298h0M251 604h0M201 0h0M544 293h0M457 392h0M383 77h0M242 226h0M365 280h0M584 305h0M498 371h0M515 339h0M488 146h0M659 293h0M519 332h0M224 564h0M345 324h0M559 316h0M427 282h0M114 162h0M569 379h0M446 356h0M481 288h0M462 310h0M502 274h0M566 267h0M725 414h0M521 328h0M476 389h0M466 383h0M319 136h0M508 295h0M514 261h0M565 341h0M734 237h0M541 332h0M468 301h0M480 241h0M493 275h0M262 503h0M535 374h0M338 390h0M576 479h0M519 355h0M685 294h0M447 345h0M491 351h0M492 334h0M480 339h0M572 218h0M326 315h0M500 298h0M545 224h0M487 277h0M487 292h0M533 365h0M469 296h0M602 443h0M519 275h0M647 327h0M477 379h0M506 339h0M156 261h0M436 200h0M521 369h0M637 285h0M392 463h0M399 210h0M482 268h0M460 381h0M462 374h0M547 276h0M387 445h0M532 285h0M482 324h0M530 379h0M427 181h0M479 288h0M583 232h0M495 289h0M711 466h0M393 342h0M617 329h0M411 343h0M552 276h0M592 393h0M775 319h0M452 339h0M342 106h0M331 449h0M502 289h0M537 265h0M897 203h0M302 286h0M787 350h0M471 245h0M438 266h0M475 295h0M461 303h0M306 368h0M559 347h0M548 305h0M349 312h0M432 302h0M623 497h0M141 112h0M597 332h0M501 331h0M417 336h0M486 285h0M856 64h0M357 481h0M454 284h0M413 302h0M533 204h0M467 306h0M301 571h0M494 334h0M606 355h0M544 463h0M507 235h0M906 269h0M84 475h0M486 266h0M573 350h0M46 321h0M686 228h0M403 376h0M487 222h0M708 629h0M729 249h0M433 400h0M505 530h0M506 292h0M499 288h0M493 315h0M522 348h0M555 272h0M510 423h0M383 483h0M503 158h0M487 329h0M395 404h0M531 338h0M489 222h0M480 350h0M385 283h0M498 424h0M470 263h0M490 211h0M602 405h0M141 237h0M537 302h0M486 347h0M485 452h0M459 253h0M469 206h0M520 253h0M472 411h0M751 411h0M494 292h0M474 303h0M481 297h0M448 62h0M300 305h0M517 267h0M513 306h0M427 401h0M237 275h0M500 335h0M437 334h0M518 282h0M485 352h0M726 409h0M503 256h0M491 336h0M601 313h0M916 218h0M460 279h0M507 332h0M525 249h0M399 269h0M474 347h0M517 318h0M521 314h0M433 270h0M696 496h0M568 428h0M526 255h0M500 372h0M342 67h0M301 413h0M470 314h0M488 401h0M603 320h0M416 264h0M144 145h0M541 222h0M473 328h0M494 470h0M581 316h0M538 259h0M596 163h0M612 157h0M546 300h0M508 310h0M494 352h0M701 436h0M375 162h0M735 320h0M832 408h0M603 91h0M450 322h0M304 190h0M277 288h0M497 115h0M308 276h0M344 199h0M555 302h0M523 320h0M537 304h0M311 307h0M475 319h0M487 315h0M521 267h0M159 170h0M482 240h0M623 374h0M568 367h0M547 328h0M622 375h0M534 478h0M478 396h0M325 274h0M391 432h0M568 298h0M464 328h0M369 327h0M384 244h0M520 328h0M480 119h0M536 181h0M479 343h0M358 419h0M683 248h0M572 369h0M410 328h0M357 254h0M555 137h0M891 285h0M669 344h0M457 427h0M452 318h0M427 393h0M513 451h0M320 449h0M450 306h0M529 445h0M549 171h0M363 259h0M455 346h0M498 314h0M389 148h0M486 294h0M426 322h0M435 336h0M387 402h0M388 370h0M486 122h0M661 314h0M211 284h0M542 339h0M479 192h0M543 371h0M445 278h0M591 344h0M691 380h0M484 297h0M635 252h0M430 306h0M534 338h0M482 289h0M473 305h0M458 259h0M483 357h0M396 309h0M335 381h0M531 328h0M439 345h0M295 234h0M347 228h0M685 239h0M317 104h0M334 333h0M887 444h0M482 259h0M579 263h0M544 442h0M526 365h0M600 231h0M558 316h0M482 333h0M739 268h0M531 289h0M522 338h0M479 328h0M320 61h0M323 337h0M442 283h0M457 282h0M439 278h0M370 569h0M242 50h0M860 482h0M472 316h0M503 273h0M474 254h0M238 111h0M557 336h0M378 268h0M687 31h0M607 455h0M700 333h0M401 389h0M424 310h0M442 265h0M241 253h0M297 486h0M372 36h0M164 323h0M256 186h0M531 258h0M425 285h0M245 76h0M502 273h0M592 354h0M586 297h0M519 257h0M475 312h0M549 313h0M491 490h0M606 319h0M531 288h0M531 333h0M556 279h0M539 331h0M610 260h0M583 305h0M497 248h0M321 280h0M500 275h0M524 347h0M620 92h0M468 382h0M483 330h0M517 329h0M551 470h0M448 328h0M345 242h0M629 391h0M507 298h0M471 342h0M430 323h0M651 573h0M582 358h0M403 427h0M607 104h0M181 427h0M412 466h0M527 265h0M548 305h0M451 358h0M588 305h0M209 349h0M539 285h0M393 389h0M341 422h0M284 197h0M196 374h0M502 287h0M490 295h0M704 230h0M427 344h0M422 289h0M360 267h0M444 332h0M503 220h0M430 220h0M527 272h0M514 323h0M485 325h0M567 220h0M406 306h0M372 163h0M473 289h0M479 209h0M585 320h0M562 337h0M526 333h0M344 220h0M641 166h0M499 300h0M412 261h0M419 347h0M465 141h0M476 321h0M193 465h0M466 303h0M581 605h0M436 272h0M360 445h0M487 283h0M501 255h0M204 291h0M596 369h0M550 320h0M428 416h0M781 529h0M334 213h0M764 447h0M489 403h0M396 196h0M392 332h0M467 347h0M435 103h0M594 260h0M459 341h0M259 474h0M317 319h0M298 342h0M831 417h0M716 405h0M642 300h0M351 71h0M469 394h0M512 369h0M558 497h0M314 379h0M433 315h0M624 194h0M497 297h0M594 351h0M465 334h0M487 215h0M721 164h0M543 417h0M418 235h0M458 296h0M486 287h0M252 272h0M491 364h0M463 352h0M504 410h0M496 265h0M397 54h0M519 358h0M573 406h0M680 173h0M407 257h0M535 133h0M144 279h0M465 312h0M499 312h0M507 285h0M534 315h0M430 306h0M332 329h0M637 314h0M428 325h0M481 307h0M440 182h0M661 369h0M501 353h0M441 471h0M446 326h0M448 329h0M630 164h0M479 160h0M563 283h0M499 422h0M700 2h0M432 406h0M615 258h0M548 280h0M471 250h0M431 300h0M607 252h0M538 305h0M373 159h0M291 127h0M213 513h0M626 171h0M396 365h0M107 448h0M376 311h0M602 177h0M458 335h0M463 476h0M475 637h0M429 272h0M676 322h0M420 327h0M521 320h0M492 314h0M640 308h0M496 334h0M570 184h0M814 289h0M560 336h0M637 79h0M476 263h0M469 371h0M523 71h0M440 325h0M384 554h0M553 263h0M605 181h0M341 193h0M526 325h0M547 481h0M94 165h0M523 319h0M518 295h0M508 317h0M448 334h0M382 226h0M505 302h0M466 355h0M640 159h0M458 326h0M349 263h0M327 110h0M559 315h0M481 283h0M396 405h0M668 146h0M369 544h0M249 313h0M424 318h0M365 435h0M527 344h0M475 238h0M408 319h0M607 246h0M429 294h0M491 334h0M409 266h0M658 232h0M510 273h0M422 566h0M529 281h0M500 138h0M454 227h0M538 359h0M561 242h0M482 114h0M433 398h0M522 278h0M599 152h0M318 138h0M267 474h0M485 331h0M565 239h0M508 256h0M424 199h0M183 267h0M745 322h0M510 295h0M514 367h0M516 295h0M708 319h0M453 388h0M688 172h0M463 333h0M235 102h0M513 308h0M577 210h0M291 398h0M347 232h0M894 436h0M519 337h0M481 369h0M464 234h0M524 202h0M503 368h0M639 147h0M598 386h0M439 331h0M523 280h0M479 273h0M744 489h0M499 399h0M447 230h0M514 405h0M532 363h0M406 246h0M408 322h0M525 249h0M543 326h0M466 254h0M501 265h0M632 242h0M551 368h0M440 306h0M442 296h0M658 383h0M427 235h0M688 248h0M504 365h0M588 314h0M642 441h0M394 309h0M384 554h0M438 263h0M492 269h0M483 301h0M834 308h0M587 489h0M372 516h0M780 323h0M542 315h0M450 390h0M471 271h0M487 360h0M517 257h0M636 269h0M519 159h0M281 197h0M368 344h0M445 159h0M508 336h0M425 538h0M405 287h0M516 403h0M564 295h0M514 281h0M732 5h0M580 26h0M734 442h0M455 382h0M325 278h0M554 341h0M499 378h0M440 294h0M580 285h0M463 122h0M525 186h0M404 415h0M466 263h0M408 399h0M403 399h0M590 242h0M570 215h0M425 277h0M458 121h0M468 347h0M568 324h0M463 327h0M419 281h0M504 285h0M539 214h0M338 220h0M508 331h0M464 271h0M480 301h0M470 306h0M599 331h0M355 181h0M244 453h0M234 448h0M542 347h0M520 237h0M431 273h0M340 336h0M359 325h0M536 196h0M469 304h0M537 195h0M585 314h0M372 543h0M463 169h0M553 219h0M442 379h0M522 196h0M206 164h0M437 342h0M507 224h0M475 301h0M457 474h0M503 273h0M580 344h0M369 454h0M482 512h0M504 359h0M447 216h0M450 251h0M706 279h0M610 382h0M545 314h0M533 326h0M414 331h0M542 348h0M709 322h0M512 277h0M459 317h0M174 312h0M580 588h0M457 234h0M718 297h0M522 260h0M546 337h0M261 294h0M527 346h0M397 400h0M399 12h0M508 296h0M264 265h0M545 385h0M520 284h0M453 198h0M427 164h0M442 325h0M229 404h0M414 383h0M533 507h0M440 255h0M509 403h0M242 120h0M464 216h0M188 429h0M703 555h0M176 595h0M235 521h0M502 273h0M456 313h0M387 468h0M716 319h0M447 328h0M516 259h0M412 299h0M894 369h0M466 287h0M473 268h0M457 284h0M704 507h0M88 347h0M509 265h0M412 433h0M178 362h0M519 312h0M508 294h0M635 477h0M542 168h0M474 373h0M603 407h0M467 276h0M308 324h0M508 315h0M543 280h0M495 232h0M647 451h0M594 124h0M509 324h0M348 245h0M541 214h0M514 296h0M505 288h0M580 306h0M714 49h0M569 361h0M495 354h0M342 313h0M473 254h0M415 216h0M481 250h0M465 391h0M455 287h0M472 395h0M466 261h0M509 363h0M269 309h0M479 277h0M385 242h0M479 249h0M550 312h0M464 381h0M436 272h0M245 548h0M591 94h0M531 265h0M522 344h0M387 281h0M463 235h0M447 309h0M441 287h0M534 271h0M477 297h0M782 505h0M478 282h0M500 305h0M407 304h0M480 289h0M670 586h0M401 261h0M699 302h0M563 89h0M481 121h0M507 273h0M498 375h0M273 511h0M518 241h0M534 229h0M333 284h0M499 239h0M534 399h0M454 297h0M527 435h0M508 164h0M555 487h0M474 251h0M574 242h0M452 291h0M513 196h0M437 265h0M610 243h0M416 436h0M587 242h0M564 197h0M392 370h0M664 151h0M449 257h0M780 16h0M572 173h0M503 438h0M672 326h0M450 300h0M687 262h0M474 483h0M369 305h0M535 160h0M541 174h0M525 389h0M583 339h0M435 271h0M781 575h0M729 329h0M475 292h0M604 499h0M636 225h0M294 249h0M479 438h0M476 286h0M414 535h0M742 243h0M402 140h0M526 371h0M623 297h0M537 343h0M477 377h0M472 290h0M467 113h0M489 348h0M302 262h0M182 388h0M491 325h0M482 349h0M497 306h0M377 456h0M925 199h0M932 354h0M489 335h0M515 442h0M537 209h0M536 340h0M485 307h0M405 380h0M584 329h0M279 267h0M491 310h0M584 288h0M498 323h0M528 226h0M480 343h0M194 376h0M422 278h0M487 280h0M571 206h0M502 347h0M554 391h0M489 210h0M524 327h0M577 304h0M155 500h0M521 317h0M545 252h0M793 346h0M201 256h0M580 265h0M363 207h0M495 434h0M215 323h0M398 234h0M495 290h0M426 275h0M541 223h0M237 134h0M666 16h0M485 349h0M617 360h0M755 337h0M509 274h0M842 553h0M542 169h0M551 300h0M490 298h0M505 418h0M477 369h0M472 257h0M517 301h0M499 315h0M628 84h0M447 261h0M247 327h0M445 308h0M517 312h0M478 265h0M571 251h0M303 296h0M643 92h0M466 346h0M411 433h0M499 376h0M652 536h0M530 305h0M561 355h0M548 193h0M510 320h0M694 344h0M427 405h0M465 169h0M598 166h0M458 275h0M820 551h0M563 486h0M450 491h0M416 342h0M651 473h0M487 447h0M733 580h0M550 299h0M543 357h0M499 451h0M163 328h0M568 422h0M501 298h0M487 295h0M490 323h0M477 384h0M465 143h0M252 252h0M438 500h0M681 6h0M537 221h0M462 483h0M486 297h0M496 101h0M538 368h0M486 289h0M416 299h0M419 255h0M432 265h0M549 325h0M500 407h0M695 239h0M307 151h0M580 296h0M396 240h0M434 270h0M571 320h0M315 406h0M500 277h0M169 217h0M548 203h0M526 452h0M476 273h0M590 241h0M456 327h0M536 278h0M557 257h0M523 321h0M469 208h0M597 126h0M455 351h0M451 321h0M397 325h0M681 540h0M486 318h0M593 350h0M271 98h0M388 59h0M602 162h0M580 330h0M493 521h0M460 347h0M714 480h0M552 343h0M512 105h0M509 49h0M474 403h0M531 326h0M421 343h0M536 447h0M212 614h0M474 255h0M500 317h0M325 242h0M546 291h0M476 239h0M516 356h0M480 447h0M587 243h0M171 143h0M500 358h0M593 331h0M385 306h0M484 6h0M244 369h0M460 396h0M529 312h0M597 260h0M547 432h0M484 286h0M536 353h0M515 238h0M497 316h0M264 158h0M491 455h0M574 448h0M526 334h0M523 332h0M455 265h0M383 232h0M517 279h0M459 180h0M532 299h0M696 331h0M258 296h0M541 350h0M522 298h0M694 146h0M525 342h0M532 36h0M381 238h0M497 305h0M387 246h0M596 262h0M285 347h0M651 379h0M546 180h0M609 164h0M579 598h0M492 226h0M539 247h0M455 349h0M588 431h0M375 366h0M255 326h0M375 430h0M250 519h0M601 337h0M458 526h0M522 292h0M433 425h0M418 26h0M425 303h0M888 431h0M614 561h0M321 262h0M415 412h0M519 394h0M473 232h0M513 314h0M591 261h0M491 327h0M641 395h0M518 262h0M499 306h0M379 276h0M329 294h0M363 559h0M387 224h0M472 274h0M790 288h0M458 310h0M505 383h0M462 280h0M489 328h0M528 247h0M474 353h0M603 304h0M462 331h0M500 330h0M407 424h0M444 274h0M740 378h0M862 143h0M475 327h0M194 355h0M731 333h0M542 334h0M463 341h0M501 273h0M514 346h0M621 205h0M599 577h0M643 189h0M352 287h0M422 278h0M417 300h0M463 249h0M455 333h0M428 315h0M484 121h0M511 298h0M550 316h0M442 268h0M340 235h0M473 405h0M450 351h0M405 382h0M311 338h0M449 237h0M496 495h0M807 218h0M567 452h0M383 292h0M204 373h0M548 258h0M487 322h0M755 628h0M471 117h0M745 349h0M128 213h0M532 492h0M464 325h0M611 413h0M852 379h0M501 315h0M595 374h0M496 363h0M453 301h0M339 275h0M501 315h0M641 344h0M683 448h0M517 161h0M507 327h0M444 382h0M488 359h0M458 31h0M534 328h0M575 229h0M434 246h0M648 263h0M499 382h0M350 236h0M484 294h0M458 330h0M502 328h0M521 355h0M624 450h0M534 361h0M164 211h0M660 344h0M461 582h0M610 591h0M663 284h0M363 253h0M583 155h0M450 338h0M523 183h0M489 273h0M345 192h0M730 267h0M466 284h0M593 256h0M643 63h0M458 288h0M577 292h0M452 198h0M871 294h0M510 305h0M523 252h0M602 213h0M455 308h0M638 199h0M503 39h0M529 272h0M531 254h0M489 183h0M463 350h0M458 264h0M480 284h0M553 152h0M419 323h0M501 433h0M685 401h0M515 323h0M409 479h0M558 359h0M380 176h0M482 370h0M528 320h0M381 290h0M354 242h0M565 275h0M407 346h0M919 289h0M522 317h0M474 331h0M395 180h0M402 426h0M623 368h0M497 320h0M518 253h0M396 147h0M481 312h0M512 296h0M440 340h0M471 242h0M546 350h0M210 335h0M461 275h0M353 385h0M726 302h0M493 214h0M528 477h0M493 339h0M568 292h0M409 366h0M517 248h0M521 538h0M387 366h0M470 328h0M495 237h0M469 361h0M369 319h0M468 297h0M466 189h0M561 267h0M413 293h0M571 494h0M516 564h0M477 367h0M480 307h0M458 307h0M885 259h0M789 415h0M566 340h0M522 323h0M661 288h0M453 343h0M525 322h0M467 304h0M551 282h0M576 221h0M469 317h0M497 277h0M467 302h0M383 238h0M496 219h0M485 297h0M499 293h0M649 334h0M465 321h0M462 489h0M433 380h0M497 281h0M589 441h0M486 292h0M379 88h0M462 361h0M390 201h0M495 308h0M308 415h0M181 158h0M177 328h0M528 314h0M745 585h0M465 228h0M552 299h0M356 466h0M675 278h0M601 257h0M531 333h0M544 488h0M553 323h0M618 205h0M380 398h0M557 388h0M499 277h0M485 278h0M526 256h0M420 162h0M476 216h0M498 288h0M517 320h0M361 562h0M671 419h0M547 290h0M481 267h0M585 229h0M296 258h0M530 321h0M444 338h0M656 298h0M571 394h0M504 270h0M422 272h0M447 314h0M659 385h0M445 303h0M556 290h0M572 226h0M428 613h0M818 463h0M486 265h0M687 226h0M490 337h0M431 312h0M710 505h0M543 258h0M471 144h0M209 223h0M423 328h0M691 149h0M464 313h0M428 257h0M449 312h0M533 297h0M469 266h0M361 277h0M588 168h0M448 171h0M366 101h0M522 209h0M626 80h0M480 255h0M457 320h0M550 303h0M518 356h0M351 576h0M511 402h0M454 326h0M472 172h0M485 361h0M534 315h0M328 316h0M541 219h0M537 287h0M404 249h0M606 490h0M577 328h0M535 253h0M357 55h0M542 465h0M466 522h0M461 281h0M512 162h0M433 224h0M554 465h0M469 442h0M533 322h0M483 236h0M418 341h0M124 540h0M92 186h0M640 300h0M335 339h0M489 300h0M387 397h0M348 188h0M652 239h0M547 339h0M727 104h0M474 339h0M410 220h0M160 117h0M809 373h0M600 357h0M373 399h0M535 461h0M478 379h0M450 356h0M424 307h0M517 292h0M591 363h0M550 232h0M393 322h0M397 357h0M436 331h0M428 95h0M529 291h0M397 599h0M602 316h0M333 418h0M457 312h0M417 351h0M581 309h0M491 283h0M488 324h0M662 96h0M478 336h0M502 574h0M848 482h0M471 467h0M244 76h0M506 320h0M415 190h0M661 582h0M628 468h0M619 439h0M438 363h0M317 412h0M469 341h0M218 195h0M210 521h0M457 265h0M86 462h0M724 350h0M583 348h0M442 257h0M580 315h0M339 375h0M647 278h0M613 355h0M438 379h0M475 320h0M509 244h0M615 516h0M474 237h0M409 367h0M386 294h0M505 372h0M493 197h0M659 57h0M426 256h0M468 425h0M296 276h0M462 407h0M494 292h0M405 240h0M685 454h0M575 302h0M494 321h0M453 182h0M471 263h0M485 297h0M414 420h0M469 351h0M791 267h0M232 370h0M466 285h0M851 142h0M511 372h0M318 190h0M457 297h0M530 213h0M608 379h0M512 405h0M481 301h0M460 414h0M467 324h0M471 281h0M381 388h0M376 372h0M502 371h0M408 456h0M568 368h0M563 278h0M397 417h0M461 324h0M522 331h0M422 312h0M548 264h0M422 129h0M640 254h0M473 377h0M440 328h0M454 338h0M470 254h0M283 315h0M638 378h0M436 317h0M451 323h0M301 614h0M337 154h0M389 322h0M777 379h0M61 195h0M567 358h0M538 247h0M687 504h0M871 135h0M556 289h0M601 217h0M545 322h0M591 262h0M478 258h0M379 395h0M495 308h0M370 298h0M464 325h0M573 196h0M450 326h0M468 356h0M706 281h0M271 555h0M406 319h0M437 355h0M472 234h0M557 270h0M767 287h0M368 116h0M475 384h0M482 377h0M556 293h0M465 318h0M492 255h0M175 325h0M476 232h0M625 238h0M484 300h0M536 305h0M492 283h0M515 293h0M455 306h0M507 281h0M270 505h0M509 290h0M179 237h0M893 476h0M827 498h0M298 464h0M429 288h0M918 381h0M517 247h0M532 281h0M516 331h0M481 584h0M458 191h0M524 267h0M452 575h0M369 199h0M507 283h0M522 307h0M500 290h0M720 482h0M483 444h0M308 377h0M62 398h0M519 275h0M397 383h0M544 333h0M376 321h0M272 274h0M610 180h0M531 167h0M503 267h0M516 292h0M531 369h0M315 428h0M396 256h0M461 232h0M536 412h0M474 343h0M496 272h0M534 287h0M509 366h0M388 177h0M672 39h0M510 321h0M738 197h0M439 405h0M491 321h0M554 266h0M414 306h0M508 343h0M509 295h0M378 452h0M534 457h0M791 509h0M424 364h0M153 107h0M508 413h0M389 353h0M192 296h0M553 220h0M439 191h0M327 285h0M398 322h0M719 69h0M456 148h0M329 75h0M605 267h0M487 284h0M496 349h0M541 402h0M460 382h0M478 315h0M400 268h0M446 317h0M437 441h0M544 420h0M763 241h0M433 304h0M520 232h0M314 186h0M128 283h0M422 204h0M492 248h0M350 123h0M872 385h0M553 282h0M472 357h0M492 318h0M434 229h0M522 281h0M283 424h0M567 376h0M846 292h0M451 120h0M427 223h0M274 273h0M281 277h0M441 202h0M460 459h0M521 434h0M557 377h0M464 326h0M343 341h0M498 330h0M502 356h0M433 323h0M516 346h0M684 144h0M441 264h0M573 529h0M368 336h0M666 372h0M582 211h0M704 564h0M461 260h0M510 164h0M490 318h0M547 285h0M376 355h0M628 196h0M56 339h0M449 310h0M715 357h0M486 294h0M409 265h0M473 233h0M771 56h0M597 391h0M481 396h0M457 273h0M704 532h0M548 264h0M853 130h0M623 192h0M495 327h0M147 186h0M510 310h0M508 289h0M474 249h0M617 193h0M745 152h0M483 319h0M487 253h0M451 311h0M541 304h0M203 427h0M459 276h0M559 284h0M334 338h0M315 250h0M505 284h0M621 206h0M385 431h0M639 153h0M358 134h0M407 308h0M217 205h0M370 361h0M505 226h0M403 388h0M495 336h0M496 318h0M857 110h0M475 341h0M513 222h0M493 348h0M455 216h0M404 355h0M475 288h0M455 314h0M267 109h0M541 332h0M531 281h0M392 336h0M326 265h0M410 338h0M591 319h0M928 159h0M630 258h0M99 149h0M456 294h0M488 330h0M770 415h0M538 262h0M521 202h0M616 385h0M508 276h0M396 293h0M379 338h0M482 295h0M672 159h0M233 344h0M523 289h0M724 375h0M638 463h0M517 254h0M587 326h0M416 333h0M522 271h0M602 374h0M460 311h0M566 231h0M566 527h0M487 266h0M550 391h0M413 361h0M643 165h0M589 401h0M543 235h0M408 405h0M568 304h0M614 151h0M544 313h0M465 367h0M512 272h0M396 437h0M458 316h0M410 372h0M692 472h0M615 37h0M583 298h0M515 278h0M548 287h0M419 212h0M515 304h0M91 184h0M517 249h0M649 351h0M609 235h0M512 316h0M107 371h0M379 235h0M407 550h0M469 321h0M443 193h0M489 321h0M447 312h0M536 305h0M500 261h0M786 416h0M363 71h0M528 284h0M595 560h0M396 267h0M469 281h0M427 210h0M404 345h0M557 322h0M532 143h0M324 431h0M674 135h0M641 308h0M633 485h0M553 354h0M440 386h0M519 350h0M400 329h0M470 431h0M464 348h0M765 408h0M467 315h0M544 452h0M488 351h0M486 305h0M487 366h0M467 597h0M780 490h0M423 363h0M573 327h0M544 412h0M511 276h0M527 260h0M492 234h0M467 191h0M514 310h0M423 212h0M433 307h0M721 410h0M897 330h0M585 240h0M517 454h0M528 315h0M526 175h0M560 242h0M569 223h0M358 123h0M462 275h0M472 315h0M747 75h0M432 207h0M195 411h0M414 269h0M490 318h0M547 322h0M647 213h0M538 434h0M758 35h0M413 35h0M435 108h0M423 322h0M567 248h0M383 345h0M567 387h0M430 372h0M514 283h0M485 414h0M704 75h0M465 147h0M441 431h0M357 425h0M470 355h0M531 508h0M423 273h0M363 469h0M507 376h0M282 316h0M494 353h0M412 299h0M471 195h0M433 285h0M412 440h0M552 366h0M537 281h0M463 321h0M243 248h0M431 453h0M579 442h0M646 223h0M398 258h0M683 270h0M538 331h0M508 280h0M565 389h0M359 169h0M318 393h0M486 295h0M258 270h0M576 306h0M551 453h0M524 439h0M492 352h0M637 440h0M664 410h0M577 328h0M520 357h0M542 353h0M532 323h0M469 362h0M414 225h0M792 304h0M625 343h0M473 217h0M569 188h0M409 214h0M385 269h0M490 275h0M578 239h0M574 329h0M423 136h0M448 522h0M453 353h0M575 105h0M477 437h0M398 284h0M563 309h0M382 443h0M450 196h0M432 262h0M475 317h0M243 485h0M431 351h0M448 296h0M595 268h0M334 296h0M802 472h0M503 242h0M392 424h0M648 349h0M504 280h0M657 265h0M571 300h0M525 318h0M483 257h0M472 332h0M444 305h0M237 77h0M506 296h0M498 307h0M584 230h0M819 568h0M853 205h0M367 372h0M450 381h0M524 255h0M573 284h0M560 429h0M446 391h0M538 272h0M545 424h0M826 163h0M550 377h0M466 298h0M353 265h0M777 582h0M467 286h0M599 234h0M333 316h0M202 527h0M592 141h0M447 377h0M544 351h0M430 321h0M517 488h0M548 458h0M508 346h0M419 311h0M261 65h0M532 249h0M643 279h0M509 443h0M591 327h0M541 258h0M583 359h0M506 290h0M608 488h0M486 334h0M518 353h0M464 360h0M396 275h0M567 245h0M514 183h0M553 244h0M552 429h0M467 311h0M524 322h0M320 142h0M277 38h0M416 283h0M243 232h0M418 132h0M457 401h0M490 404h0M378 391h0M466 235h0M586 255h0M398 323h0M568 313h0M359 101h0M548 287h0M492 120h0M77 156h0M459 479h0M490 348h0M471 441h0M524 287h0M481 297h0M466 304h0M370 360h0M476 330h0M463 324h0M499 310h0M433 97h0M741 229h0M491 369h0M516 310h0M643 563h0M488 536h0M469 371h0M464 312h0M496 420h0M450 325h0M369 378h0M409 309h0M517 320h0M724 398h0M467 312h0M264 324h0M386 385h0M521 266h0M227 471h0M515 305h0M602 384h0M521 274h0M512 234h0M485 289h0M556 298h0M441 297h0M523 427h0M514 153h0M166 204h0M590 373h0M531 318h0M509 324h0M497 267h0M515 370h0M480 370h0M480 316h0M458 338h0M574 279h0M545 249h0M205 231h0M213 44h0M483 249h0M598 369h0M567 352h0M293 376h0M457 252h0M473 385h0M495 306h0M643 91h0M603 361h0M500 563h0M607 80h0M446 288h0M425 393h0M508 295h0M577 503h0M561 265h0M487 273h0M578 302h0M609 261h0M393 268h0M421 315h0M485 298h0M482 274h0M479 231h0M434 323h0M497 298h0M665 306h0M458 308h0M468 375h0M476 325h0M487 396h0M896 357h0M525 343h0M761 41h0M557 427h0M437 492h0M672 70h0M456 272h0M290 252h0M313 221h0M450 269h0M595 306h0M515 217h0M546 216h0M319 496h0M805 148h0M430 303h0M702 517h0M741 191h0M431 278h0M469 148h0M523 112h0M568 314h0M229 280h0M388 360h0M495 292h0M480 581h0M486 418h0M647 400h0M356 376h0M499 349h0M495 303h0M646 334h0M375 175h0M245 423h0M472 288h0M517 224h0M445 323h0M401 391h0M97 457h0M394 502h0M508 355h0M402 116h0M490 330h0M446 296h0M437 280h0M555 321h0M257 323h0M738 363h0M685 190h0M477 514h0M598 381h0M411 353h0M618 227h0M605 371h0M515 306h0M462 283h0M442 375h0M547 474h0M315 100h0M457 294h0M329 218h0M369 196h0M477 295h0M693 313h0M496 262h0M460 333h0M352 249h0M383 225h0M458 327h0M544 232h0M265 290h0M469 215h0M571 200h0M509 322h0M303 198h0M733 450h0M520 285h0M522 430h0M344 512h0M456 269h0M468 336h0M555 385h0M563 478h0M355 256h0M493 311h0M278 24h0M446 288h0M528 276h0M735 98h0M406 559h0M600 455h0M745 365h0M541 98h0M372 315h0M180 182h0M839 553h0M485 299h0M146 381h0M544 218h0M373 237h0M496 301h0M425 225h0M525 270h0M434 364h0M531 410h0M293 380h0M508 174h0M543 300h0M443 281h0M241 548h0M481 230h0M526 174h0M528 580h0M419 137h0M425 247h0M590 260h0M496 251h0M482 275h0M528 438h0M459 176h0M440 358h0M465 273h0M528 252h0M471 148h0M359 344h0M406 188h0M520 275h0M590 272h0M286 293h0M455 285h0M493 291h0M300 262h0M515 413h0M463 372h0M541 284h0M614 293h0M513 289h0M433 331h0M457 300h0M315 288h0M400 346h0M428 248h0M467 293h0M475 337h0M529 402h0M385 276h0M675 51h0M692 34h0M500 154h0M850 254h0M440 264h0M217 332h0M478 307h0M313 92h0M546 269h0M704 407h0M580 613h0M526 401h0M464 350h0M503 376h0M435 350h0M491 285h0M470 481h0M437 415h0M541 325h0M439 502h0M582 418h0M609 134h0M462 301h0M89 157h0M472 296h0M550 327h0M566 194h0M711 393h0M500 396h0M492 383h0M587 492h0M730 215h0M508 280h0M353 272h0M507 288h0M462 257h0M574 107h0M499 333h0M281 110h0M527 415h0M490 280h0M480 324h0M696 320h0M543 252h0M517 341h0M457 371h0M573 352h0M142 417h0M212 109h0M397 310h0M431 246h0M590 243h0M519 376h0M542 364h0M305 273h0M440 474h0M493 129h0M542 268h0M525 221h0M448 298h0M627 283h0M408 567h0M506 261h0M516 347h0M52 329h0M420 525h0M560 292h0M446 296h0M466 272h0M872 256h0M335 207h0M483 348h0M704 330h0M458 193h0M587 428h0M518 158h0M529 245h0M418 304h0M491 484h0M481 289h0M479 367h0M377 232h0M469 362h0M418 270h0M619 366h0M466 322h0M495 330h0M443 338h0M430 317h0M467 100h0M499 303h0M496 529h0M473 224h0M478 326h0M535 331h0M616 200h0M494 285h0M455 449h0M500 372h0M509 348h0M428 366h0M464 366h0M557 178h0M559 333h0M562 256h0M528 316h0M446 311h0M390 331h0M544 470h0M455 160h0M592 81h0M477 333h0M572 314h0M431 177h0M273 305h0M469 326h0M816 133h0M511 289h0M414 281h0M491 354h0M493 302h0M484 276h0M530 347h0M506 298h0M410 362h0M518 380h0M630 485h0M494 314h0M543 545h0M666 547h0M455 397h0M491 292h0M679 350h0M505 289h0M614 298h0M428 283h0M658 199h0M498 255h0M371 27h0M476 275h0M520 429h0M387 203h0M476 198h0M476 345h0M390 186h0M493 384h0M614 373h0M527 307h0M482 493h0M580 370h0M377 460h0M581 568h0M511 350h0M495 308h0M504 372h0M502 298h0M354 420h0M547 292h0M496 272h0M388 299h0M490 350h0M655 298h0M504 175h0M310 195h0M658 377h0M417 243h0M438 273h0M582 372h0M569 258h0M447 276h0M205 237h0M288 392h0M507 263h0M434 301h0M514 366h0M551 317h0M542 300h0M643 198h0M114 387h0M471 344h0M235 127h0M529 282h0M198 357h0M551 129h0M691 295h0M584 458h0M429 322h0M468 189h0M525 339h0M455 223h0M493 214h0M592 332h0M434 238h0M562 314h0M499 248h0M472 283h0M365 374h0M559 346h0M674 417h0M894 261h0M428 408h0M671 190h0M720 376h0M576 329h0M530 323h0M467 366h0M504 352h0M758 403h0M483 300h0M339 362h0M559 292h0M449 376h0M490 251h0M486 425h0M184 324h0M527 261h0M481 293h0M531 331h0M574 393h0M560 350h0M468 309h0M336 458h0M302 456h0M522 234h0M480 292h0M489 291h0M455 289h0M418 342h0M537 216h0M467 331h0M483 379h0M597 298h0M484 488h0M577 436h0M520 214h0M394 446h0M476 313h0M540 289h0M649 511h0M321 176h0M344 264h0M690 39h0M460 259h0M296 242h0M327 384h0M487 346h0M649 332h0M471 216h0M570 307h0M441 331h0M534 301h0M438 232h0M487 449h0M616 81h0M535 21h0M503 268h0M659 225h0M534 405h0M546 377h0M325 203h0M362 247h0M433 252h0M419 260h0M537 288h0M359 251h0M485 311h0M469 426h0M382 349h0M539 310h0M448 332h0M518 305h0M329 284h0M485 310h0M477 304h0M456 277h0M396 249h0M486 300h0M745 211h0M497 314h0M639 384h0M331 323h0M566 386h0M525 369h0M538 335h0M528 242h0M152 280h0M284 490h0M366 329h0M492 251h0M519 217h0M406 378h0M532 516h0M459 361h0M473 401h0M543 282h0M614 449h0M97 183h0M584 349h0M191 249h0M427 197h0M567 279h0M527 305h0M575 172h0M766 122h0M327 224h0M495 378h0M529 279h0M431 387h0M510 310h0M546 236h0M676 526h0M163 345h0M557 207h0M670 395h0M530 371h0M435 336h0M495 527h0M563 255h0M478 449h0M455 276h0M435 273h0M524 273h0M463 287h0M518 311h0M508 321h0M705 523h0M478 361h0M709 351h0M484 306h0M672 391h0M556 280h0M554 463h0M383 266h0M662 386h0M513 275h0M472 258h0M317 194h0M465 245h0M507 328h0M398 318h0M465 244h0M435 302h0M535 300h0M436 356h0M533 361h0M308 324h0M420 266h0M404 346h0M501 301h0M469 287h0M421 232h0M495 320h0M351 379h0M483 318h0M383 286h0M484 266h0M523 599h0M418 475h0M514 302h0M323 341h0M634 122h0M433 317h0M732 207h0M515 342h0M524 362h0M523 280h0M594 127h0M614 298h0M486 222h0M194 23h0M558 293h0M427 321h0M460 390h0M444 296h0M399 140h0M470 359h0M583 339h0M536 290h0M524 297h0M554 246h0M759 296h0M564 265h0M340 386h0M485 222h0M776 369h0M365 253h0M497 331h0M519 318h0M604 265h0M388 357h0M275 193h0M563 82h0M509 299h0M493 309h0M505 310h0M569 421h0M532 304h0M594 349h0M477 528h0M414 367h0M527 313h0M760 51h0M501 299h0M318 313h0M481 293h0M385 170h0M307 214h0M508 232h0M409 301h0M529 242h0M512 298h0M213 2h0M516 263h0M455 324h0M597 210h0M598 248h0M512 282h0M538 313h0M464 318h0M557 496h0M557 275h0M514 340h0M426 393h0M410 308h0M477 344h0M878 259h0M370 272h0M463 251h0M327 309h0M570 236h0M420 304h0M510 337h0M502 296h0M535 234h0M479 293h0M814 403h0M735 59h0M577 308h0M420 569h0M405 352h0M846 552h0M311 589h0M504 295h0M565 283h0M701 259h0M436 375h0M465 401h0M462 291h0M434 398h0M440 350h0M533 352h0M489 411h0M544 417h0M536 503h0M524 231h0M452 335h0M418 150h0M299 252h0M480 295h0M360 154h0M489 289h0M518 258h0M542 461h0M407 317h0M507 246h0M522 251h0M89 112h0M509 314h0M445 295h0M461 304h0M466 368h0M503 154h0M843 458h0M507 295h0M559 241h0M486 434h0M577 244h0M611 511h0M232 105h0M461 408h0M511 296h0M503 300h0M632 263h0M745 90h0M539 146h0M473 329h0M352 275h0M398 310h0M682 278h0M139 333h0M559 242h0M579 315h0M416 489h0M521 258h0M85 485h0M583 379h0M228 377h0M698 95h0M453 313h0M543 253h0M467 223h0M509 290h0M645 324h0M478 219h0M258 333h0M904 167h0M620 330h0M529 313h0M490 296h0M612 174h0M487 240h0M551 342h0M503 374h0M509 363h0M266 340h0M367 299h0M564 327h0M504 281h0M559 365h0M749 174h0M402 338h0M518 329h0M835 421h0M733 227h0M636 300h0M749 392h0M271 383h0M524 302h0M552 261h0M562 320h0M465 241h0M383 288h0M349 382h0M499 210h0M762 466h0M541 245h0M493 252h0M505 219h0M493 201h0M601 309h0M448 329h0M539 330h0M492 355h0M498 263h0M360 376h0M463 366h0M489 300h0M539 78h0M473 337h0M459 251h0M515 311h0M559 334h0M498 327h0M434 27h0M557 234h0M461 302h0M623 246h0M620 337h0M477 276h0M758 236h0M535 232h0M457 338h0M516 394h0M887 127h0M554 338h0M476 45h0M448 285h0M627 464h0M459 395h0M406 241h0M391 323h0M473 296h0M226 219h0M506 280h0M378 321h0M388 267h0M588 324h0M531 348h0M552 240h0M571 343h0M497 314h0M601 608h0M542 543h0M625 346h0M122 71h0M535 428h0M691 413h0M557 277h0M510 315h0M649 239h0M475 357h0M612 439h0M533 619h0M423 364h0M470 426h0M496 308h0M545 344h0M492 355h0M513 410h0M684 355h0M173 36h0M164 257h0M479 316h0M564 235h0M536 363h0M375 477h0M551 443h0M443 357h0M220 197h0M160 434h0M509 183h0M426 310h0M445 327h0M342 245h0M431 338h0M588 444h0M318 297h0M484 286h0M489 370h0M530 92h0M430 296h0M460 462h0M479 244h0M448 628h0M499 360h0M434 332h0M475 379h0M399 280h0M533 322h0M483 298h0M650 387h0M504 325h0M483 318h0M496 472h0M769 467h0M509 233h0M544 317h0M467 270h0M423 206h0M793 324h0M444 319h0M524 272h0M666 361h0M389 376h0M464 127h0M323 296h0M653 472h0M471 297h0M453 387h0M396 449h0M391 562h0M485 396h0M558 364h0M504 587h0M443 72h0M842 136h0M512 370h0M795 63h0M526 377h0M444 329h0M555 278h0M449 402h0M431 327h0M414 303h0M522 288h0M196 344h0M592 196h0M484 213h0M479 516h0M276 542h0M373 331h0M562 331h0M533 270h0M445 291h0M802 71h0M437 270h0M635 280h0M549 311h0M451 232h0M717 370h0M521 273h0M709 150h0M556 337h0M86 346h0M530 295h0M549 335h0M537 360h0M568 282h0M504 344h0M561 232h0M765 304h0M325 341h0M468 344h0M365 407h0M495 254h0M443 217h0M613 243h0M462 409h0M526 297h0M555 132h0M492 308h0M573 227h0M422 245h0M460 259h0M701 329h0M643 389h0M556 231h0M388 210h0M536 336h0M543 467h0M390 176h0M471 322h0M494 365h0M329 393h0M442 293h0M480 283h0M541 248h0M434 330h0M507 237h0M443 144h0M364 439h0M527 322h0M506 615h0M468 330h0M543 290h0M433 273h0M526 278h0M502 354h0M415 315h0M582 431h0M437 28h0M491 232h0M503 286h0M581 201h0M523 330h0M605 78h0M458 251h0M551 132h0M326 419h0M534 241h0M529 307h0M448 194h0M538 334h0M248 555h0M332 159h0M554 243h0M578 322h0M576 445h0M405 293h0M429 129h0M803 280h0M359 198h0M391 410h0M491 329h0M478 296h0M548 43h0M574 164h0M453 279h0M606 330h0M330 297h0M547 237h0M825 69h0M588 454h0M384 320h0M610 231h0M399 206h0M485 309h0M339 409h0M493 222h0M491 342h0M290 232h0M516 354h0M620 220h0M612 142h0M430 235h0M363 257h0M436 193h0M237 358h0M555 335h0M506 234h0M517 94h0M195 478h0M592 390h0M370 226h0M852 506h0M500 418h0M546 291h0M192 173h0M466 361h0M488 288h0M514 441h0M489 296h0M777 169h0M508 232h0M386 296h0M477 314h0M590 456h0M455 238h0M567 96h0M529 222h0M494 226h0M483 567h0M499 311h0M501 289h0M73 387h0M625 260h0M636 305h0M614 306h0M566 189h0M529 132h0M427 346h0M286 321h0M539 390h0M674 266h0M706 226h0M428 291h0M626 342h0M360 296h0M781 553h0M681 146h0M301 181h0M583 249h0M514 362h0M469 303h0M548 221h0M451 292h0M675 32h0M451 632h0M561 135h0M524 330h0M514 294h0M501 186h0M482 299h0M400 387h0M534 370h0M524 347h0M446 313h0M277 467h0M600 265h0M335 345h0M438 260h0M494 265h0M459 258h0M330 570h0M363 240h0M446 601h0M600 626h0M483 279h0M424 246h0M346 240h0M471 263h0M443 371h0M472 326h0M470 273h0M390 139h0M540 202h0M367 344h0M533 243h0M716 389h0M323 232h0M356 428h0M766 4h0M563 352h0M537 303h0M534 353h0M569 239h0M491 307h0M259 318h0M577 184h0M469 374h0M326 555h0M314 424h0M496 285h0M466 482h0M266 237h0M840 475h0M375 252h0M509 257h0M539 352h0M413 425h0M436 286h0M545 231h0M643 332h0M118 325h0M468 340h0M495 293h0M148 352h0M513 301h0M433 316h0M575 349h0M461 116h0M489 341h0M529 336h0M581 303h0M219 214h0M848 493h0M436 360h0M500 304h0M714 36h0M508 262h0M485 220h0M472 377h0M90 137h0M526 249h0M498 330h0M524 251h0M469 224h0M559 339h0M659 330h0M744 553h0M331 519h0M428 458h0M493 368h0M606 501h0M652 161h0M467 282h0M501 343h0M499 225h0M394 49h0M523 328h0M690 599h0M495 334h0M580 263h0M549 280h0M431 623h0M442 247h0M548 170h0M372 292h0M401 571h0M379 366h0M440 456h0M413 232h0M519 93h0M697 467h0M260 145h0M591 292h0M237 478h0M373 159h0M550 285h0M534 245h0M469 223h0M496 410h0M485 272h0M345 383h0M434 343h0M513 325h0M477 341h0M567 274h0M494 317h0M719 551h0M708 281h0M490 224h0M394 409h0M309 380h0M445 195h0M418 241h0M441 336h0M504 156h0M801 263h0M647 360h0M496 323h0M404 340h0M539 327h0M490 316h0M521 305h0M517 331h0M357 319h0M482 251h0M466 327h0M582 207h0M447 317h0M868 94h0M412 191h0M387 333h0M531 331h0M550 293h0M551 336h0M531 459h0M411 286h0M434 342h0M411 289h0M438 322h0M277 242h0M712 409h0M484 206h0M496 423h0M293 137h0M498 397h0M646 93h0M479 258h0M635 330h0M521 331h0M86 468h0M401 399h0M473 299h0M373 253h0M468 343h0M527 363h0M501 434h0M491 270h0M515 368h0M582 208h0M466 285h0M577 459h0M514 287h0M657 561h0M572 270h0M534 335h0M504 265h0M497 333h0M816 187h0M506 320h0M480 306h0M562 364h0M573 278h0M453 439h0M370 149h0M493 244h0M486 147h0M576 189h0M486 307h0M480 276h0M562 332h0M509 291h0M647 372h0M347 158h0M367 598h0M207 112h0M474 354h0M589 370h0M501 290h0M573 164h0M593 305h0M519 208h0M524 279h0M626 331h0M569 379h0M439 177h0M404 359h0M461 265h0M713 89h0M462 402h0M555 185h0M495 300h0M517 285h0M454 329h0M468 158h0M385 520h0M549 352h0M405 626h0M421 227h0M660 465h0M583 269h0M659 560h0M502 221h0M497 497h0M627 453h0M489 326h0M206 352h0M553 358h0M529 320h0M645 371h0M543 266h0M512 268h0M445 350h0M492 226h0M883 137h0M601 266h0M522 241h0M508 257h0M443 272h0M450 244h0M397 232h0M504 336h0M254 374h0M304 498h0M366 249h0M511 230h0M518 424h0M508 231h0M647 590h0M524 340h0M416 367h0M618 303h0M488 257h0M916 190h0M521 307h0M284 393h0M577 483h0M471 312h0M518 469h0M475 346h0M542 298h0M588 464h0M350 187h0M540 334h0M526 276h0M746 276h0M387 349h0M497 273h0M449 265h0M616 479h0M412 333h0M524 246h0M708 279h0M774 169h0M573 405h0M498 381h0M192 410h0M429 203h0M477 249h0M252 424h0M455 285h0M431 318h0M554 419h0M384 117h0M540 272h0M495 272h0M364 161h0M560 93h0M135 314h0M244 325h0M437 466h0M106 390h0M472 444h0M515 271h0M447 317h0M904 161h0M535 171h0M471 299h0M472 290h0M687 282h0M486 270h0M515 190h0M400 315h0M487 426h0M447 229h0M403 337h0M381 266h0M382 377h0M360 304h0M771 299h0M596 259h0M591 305h0M589 236h0M308 484h0M524 256h0M737 461h0M446 274h0M410 275h0M587 285h0M512 402h0M526 342h0M517 317h0M523 238h0M531 269h0M694 484h0M599 340h0M357 89h0M509 329h0M411 357h0M842 149h0M753 226h0M540 51h0M317 499h0M596 151h0M412 407h0M880 223h0M475 323h0M530 299h0M515 314h0M588 203h0M347 119h0M161 388h0M471 416h0M499 289h0M508 417h0M500 280h0M530 295h0M330 287h0M517 322h0M83 453h0M512 260h0M321 291h0M150 66h0M650 284h0M776 161h0M716 354h0M300 185h0M517 292h0M489 313h0M520 206h0M457 272h0M431 183h0M444 364h0M109 145h0M535 292h0M450 332h0M634 173h0M860 226h0M503 322h0M501 268h0M820 416h0M443 317h0M460 251h0M843 79h0M540 339h0M531 229h0M206 405h0M574 405h0M416 280h0M522 276h0M180 262h0M423 426h0M554 331h0M490 267h0M689 290h0M244 8h0M322 316h0M427 420h0M486 276h0M451 326h0M655 225h0M536 201h0M569 353h0M572 394h0M535 283h0M401 333h0M478 256h0M629 140h0M505 239h0M372 240h0M583 233h0M522 269h0M541 213h0M499 268h0M683 306h0M433 280h0M616 170h0M477 394h0M753 396h0M482 345h0M420 507h0M502 318h0M531 282h0M501 350h0M484 248h0M572 296h0M577 539h0M427 357h0M527 307h0M412 456h0M455 312h0M521 316h0M556 351h0M274 287h0M496 157h0M540 317h0M556 558h0M428 308h0M461 368h0M445 358h0M461 356h0M401 253h0M358 547h0M478 331h0M482 263h0M623 275h0M384 552h0M531 285h0M447 224h0M583 314h0M185 115h0M344 318h0M487 257h0M428 237h0M496 480h0M256 609h0M500 526h0M463 386h0M468 329h0M548 283h0M177 514h0M488 387h0M461 329h0M484 200h0M461 267h0M516 297h0M515 450h0M556 631h0M465 273h0M438 295h0M548 569h0M510 567h0M539 364h0M505 261h0M552 320h0M357 375h0M354 308h0M486 316h0M693 255h0M348 442h0M502 282h0M530 296h0M429 335h0M450 316h0M552 384h0M681 88h0M509 355h0M375 252h0M691 38h0M226 575h0M481 380h0M493 353h0M618 350h0M80 412h0M420 227h0M396 303h0M500 244h0M527 146h0M467 332h0M259 69h0M865 169h0M301 129h0M522 344h0M463 191h0M537 324h0M289 204h0M497 339h0M417 294h0M411 344h0M564 353h0M483 375h0M587 239h0M465 102h0M731 563h0M498 543h0M570 465h0M595 334h0M594 352h0M578 191h0M451 341h0M647 235h0M512 386h0M342 556h0M477 275h0M588 295h0M479 219h0M484 267h0M320 267h0M296 541h0M476 341h0M487 279h0M881 283h0M584 293h0M456 165h0M244 456h0M763 138h0M333 6h0M553 135h0M379 441h0M439 262h0M163 266h0M620 22h0M478 470h0M481 283h0M605 464h0M579 251h0M657 275h0M446 296h0M411 53h0M480 255h0M521 44h0M502 280h0M532 334h0M200 375h0M515 315h0M502 287h0M482 301h0M463 290h0M580 323h0M430 274h0M495 314h0M507 396h0M516 329h0M361 361h0M462 146h0M712 343h0M527 302h0M622 281h0M412 275h0M299 436h0M499 213h0M529 245h0M624 252h0M341 547h0M689 330h0M419 247h0M447 247h0M214 14h0M519 348h0M493 373h0M452 388h0M532 261h0M487 188h0M537 314h0M595 331h0M495 327h0M754 590h0M483 221h0M397 259h0M421 247h0M273 365h0M407 202h0M355 115h0M506 309h0M446 337h0M899 323h0M519 364h0M525 322h0M577 454h0M806 227h0M747 357h0M289 264h0M521 240h0M496 282h0M222 242h0M514 339h0M571 334h0M412 216h0M557 306h0M453 348h0M450 367h0M469 4h0M351 296h0M457 397h0M504 108h0M580 337h0M289 469h0M403 170h0M552 275h0M458 175h0M449 317h0M418 232h0M515 320h0M458 341h0M275 571h0M530 278h0M140 206h0M486 377h0M401 361h0M469 356h0M639 189h0M478 328h0M146 561h0M559 136h0M290 447h0M472 532h0M270 214h0M464 397h0M767 335h0M598 221h0M502 273h0M327 187h0M289 466h0M586 296h0M590 562h0M587 339h0M581 346h0M158 223h0M519 234h0M471 312h0M556 132h0M401 338h0M475 399h0M768 144h0M690 69h0M519 211h0M479 497h0M520 362h0M519 312h0M598 340h0M423 404h0M900 217h0M713 521h0M463 323h0M523 18h0M504 315h0M409 225h0M505 317h0M776 466h0M631 372h0M525 289h0M288 606h0M512 379h0M431 271h0M495 321h0M276 250h0M534 559h0M589 244h0M668 167h0M524 174h0M453 359h0M590 279h0M394 258h0M468 369h0M446 302h0M664 393h0M454 329h0M494 327h0M521 338h0M688 385h0M458 6h0M496 383h0M524 272h0M416 308h0M511 508h0M144 362h0M420 335h0M436 268h0M270 303h0M410 171h0M517 292h0M471 174h0M333 179h0M674 84h0M413 348h0M524 355h0M488 283h0M774 271h0M571 479h0M536 329h0M483 268h0M704 455h0M510 182h0M452 253h0M322 295h0M434 486h0M433 310h0M599 84h0M454 304h0M505 297h0M544 237h0M830 308h0M525 284h0M500 110h0M533 257h0M453 172h0M477 132h0M493 388h0M530 265h0M184 391h0M567 381h0M404 149h0M429 262h0M569 338h0M443 285h0M499 321h0M612 265h0M830 252h0M404 541h0M561 241h0M658 466h0M418 269h0M469 402h0M850 389h0M628 123h0M454 165h0M666 373h0M112 347h0M389 312h0M442 398h0M456 385h0M525 259h0M509 237h0M438 155h0M434 372h0M177 541h0M443 310h0M609 275h0M495 337h0M484 182h0M523 256h0M431 253h0M623 315h0M586 241h0M429 466h0M537 50h0M428 294h0M454 374h0M622 481h0M488 274h0M414 289h0M423 298h0M538 352h0M532 320h0M422 327h0M531 277h0M489 279h0M550 408h0M813 276h0M469 297h0M347 396h0M91 305h0M473 126h0M450 412h0M520 288h0M515 354h0M782 173h0M526 376h0M650 299h0M441 407h0M490 318h0M444 296h0M626 295h0M244 177h0M804 320h0M722 277h0M115 133h0M514 245h0M464 335h0M520 314h0M481 300h0M497 364h0M485 77h0M330 274h0M440 183h0M706 306h0M319 196h0M559 318h0M482 299h0M495 410h0M477 255h0M808 303h0M365 222h0M491 440h0M465 279h0M546 328h0M524 181h0M436 44h0M427 233h0M814 164h0M489 284h0M316 100h0M492 536h0M509 179h0M379 154h0M483 367h0M625 88h0M424 362h0M498 304h0M480 298h0M539 520h0M438 264h0M704 213h0M698 200h0M140 185h0M491 286h0M523 288h0M447 388h0M471 272h0M529 3h0M648 426h0M489 263h0M515 329h0M526 318h0M475 284h0M454 353h0M428 283h0M509 317h0M332 99h0M487 398h0M323 249h0M723 253h0M389 156h0M247 214h0M499 308h0M576 364h0M321 165h0M429 354h0M500 354h0M471 306h0M628 371h0M444 364h0M578 139h0M506 458h0M549 278h0M509 337h0M465 216h0M307 92h0M334 481h0M429 392h0M627 539h0M588 634h0M445 312h0M540 343h0M444 292h0M495 357h0M801 7h0M540 270h0M552 173h0M484 361h0M488 312h0M294 251h0M375 230h0M558 69h0M102 199h0M491 375h0M415 349h0M436 336h0M476 271h0M753 586h0M482 451h0M477 307h0M431 311h0M523 50h0M682 550h0M527 304h0M519 187h0M365 116h0M533 38h0M456 259h0M278 423h0M544 274h0M513 249h0M429 249h0M502 298h0M418 254h0M506 324h0M513 266h0M835 323h0M549 345h0M480 323h0M530 248h0M405 259h0M568 208h0M365 556h0M522 327h0M475 285h0M492 267h0M308 299h0M518 259h0M455 285h0M433 325h0M647 214h0M489 267h0M301 444h0M841 386h0M429 372h0M611 416h0M654 449h0M374 329h0M503 357h0M517 249h0M509 424h0M408 228h0M27 346h0M403 288h0M543 399h0M514 218h0M443 288h0M526 246h0M503 311h0M595 311h0M517 230h0M410 241h0M77 374h0M493 297h0M485 352h0M504 318h0M481 227h0M320 476h0M844 361h0M537 465h0M525 248h0M369 303h0M536 176h0M476 303h0M482 451h0M581 571h0M65 185h0M935 269h0M656 41h0M493 131h0M440 303h0M515 250h0M276 250h0M489 406h0M478 289h0M516 315h0M413 298h0M505 258h0M521 228h0M525 304h0M512 267h0M471 300h0M614 268h0M359 421h0M335 365h0M539 416h0M467 321h0M456 350h0M433 350h0M551 358h0M412 343h0M134 188h0M660 311h0M610 255h0M492 314h0M536 236h0M708 130h0M422 303h0M454 306h0M504 228h0M431 306h0M562 500h0M431 288h0M486 160h0M497 327h0M470 499h0M497 252h0M481 304h0M527 351h0M531 318h0M540 335h0M306 271h0M482 386h0M515 280h0M487 351h0M527 307h0M460 375h0M509 273h0M608 127h0M452 275h0M446 221h0M182 264h0M535 253h0M739 358h0M468 300h0M511 69h0M509 205h0M522 256h0M402 335h0M499 315h0M451 341h0M236 222h0M455 341h0M820 461h0M494 324h0M575 259h0M565 384h0M576 393h0M539 283h0M429 350h0M608 301h0M443 58h0M467 92h0M368 242h0M534 263h0M185 12h0M562 438h0M447 250h0M388 342h0M476 316h0M570 204h0M468 310h0M621 7h0M617 473h0M508 301h0M505 275h0M482 390h0M578 318h0M532 216h0M421 375h0M539 233h0M473 554h0M473 399h0M823 61h0M446 127h0M669 313h0M433 320h0M488 192h0M119 184h0M344 600h0M326 49h0M172 549h0M685 83h0M505 368h0M469 382h0M203 322h0M393 381h0M504 323h0M446 331h0M645 179h0M424 310h0M589 294h0M563 356h0M230 414h0M608 211h0M532 288h0M704 369h0M463 293h0M465 412h0M683 187h0M647 625h0M648 352h0M471 516h0M679 186h0M536 296h0M551 335h0M483 256h0M301 358h0M555 426h0M494 249h0M551 331h0M528 324h0M499 337h0M606 368h0M570 302h0M319 323h0M899 424h0M830 386h0M638 263h0M660 259h0M529 390h0M538 352h0M499 321h0M543 283h0M566 297h0M433 380h0M361 359h0M492 194h0M582 380h0M723 262h0M537 319h0M498 612h0M507 321h0M537 299h0M526 228h0M508 428h0M500 387h0M538 177h0M451 277h0M422 257h0M488 322h0M400 157h0M442 286h0M531 147h0M608 392h0M491 293h0M535 330h0M560 310h0M538 287h0M134 258h0M620 369h0M603 279h0M340 300h0M533 611h0M658 311h0M564 328h0M343 247h0M440 413h0M237 440h0M544 280h0M512 279h0M439 293h0M460 312h0M453 311h0M514 475h0M497 275h0M632 616h0M476 271h0M480 374h0M507 356h0M742 136h0M496 264h0M594 270h0M242 98h0M476 312h0M441 313h0M344 332h0M553 484h0M467 184h0M527 250h0M485 518h0M536 456h0M416 302h0M690 355h0M497 285h0M589 256h0M507 343h0M485 161h0M211 250h0M548 306h0M450 41h0M724 386h0M413 348h0M491 297h0M77 389h0M330 501h0M441 317h0M515 283h0M456 419h0M431 276h0M537 281h0M480 307h0M340 72h0M327 313h0M511 332h0M508 422h0M692 26h0M350 252h0M556 388h0M487 274h0M600 490h0M483 262h0M537 231h0M559 257h0M488 240h0M549 304h0M376 231h0M524 298h0M663 248h0M575 172h0M586 207h0M641 323h0M446 384h0M696 456h0M445 327h0M491 276h0M424 249h0M513 295h0M383 430h0M480 323h0M414 365h0M496 78h0M533 331h0M446 350h0M500 229h0M693 360h0M510 316h0M503 312h0M437 361h0M336 620h0M705 368h0M579 267h0M505 346h0M464 318h0M306 380h0M489 116h0M273 342h0M478 258h0M557 307h0M549 174h0M636 423h0M466 288h0M832 369h0M526 255h0M457 267h0M419 309h0M505 470h0M452 130h0M434 335h0M661 264h0M352 244h0M201 349h0M502 279h0M312 243h0M525 512h0M144 243h0M446 259h0M483 370h0M758 141h0M545 280h0M516 298h0M464 310h0M494 288h0M359 287h0M461 292h0M554 315h0M480 291h0M356 422h0M328 333h0M494 80h0M475 282h0M504 319h0M487 241h0M373 266h0M382 312h0M627 459h0M468 332h0M522 305h0M418 367h0M425 316h0M161 401h0M531 266h0M581 210h0M291 134h0M429 363h0M510 280h0M641 192h0M445 504h0M353 384h0M656 191h0M535 166h0M480 465h0M469 296h0M449 215h0M466 299h0M486 251h0M356 263h0M318 91h0M532 353h0M478 340h0M378 239h0M533 357h0M533 358h0M553 536h0M502 313h0M502 358h0M548 516h0M683 235h0M542 342h0M235 160h0M474 254h0M505 311h0M553 342h0M511 342h0M457 300h0M219 393h0M484 248h0M506 261h0M484 543h0M305 89h0M643 403h0M526 220h0M501 296h0M510 219h0M481 292h0M462 274h0M575 393h0M426 310h0M486 260h0M458 287h0M355 425h0M495 275h0M665 412h0M511 331h0M605 355h0M489 323h0M557 349h0M502 286h0M536 363h0M463 316h0M429 288h0M553 317h0M478 306h0M468 391h0M515 205h0M508 323h0M572 366h0M616 240h0M448 216h0M404 184h0M604 426h0M619 444h0M638 271h0M586 304h0M579 515h0M581 402h0M478 323h0M279 355h0M286 502h0M483 281h0M218 242h0M511 248h0M431 255h0M445 275h0M541 277h0M557 268h0M481 449h0M489 378h0M497 277h0M560 256h0M572 270h0M394 284h0M417 448h0M821 468h0M413 395h0M545 253h0M469 401h0M511 298h0M514 228h0M845 309h0M552 310h0M458 257h0M490 278h0M642 57h0M558 425h0M416 357h0M483 353h0M477 267h0M535 452h0M505 331h0M642 174h0M579 200h0M475 304h0M641 592h0M425 348h0M539 36h0M531 407h0M296 367h0M534 353h0M499 404h0M520 300h0M825 215h0M546 581h0M383 371h0M537 279h0M482 268h0M572 55h0M511 305h0M691 192h0M404 354h0M501 208h0M484 345h0M395 471h0M476 321h0M514 70h0M577 214h0M517 308h0M481 360h0M367 73h0M294 599h0M348 389h0M483 325h0M532 306h0M499 310h0M633 395h0M516 267h0M577 515h0M405 248h0M536 264h0M555 219h0M445 570h0M223 92h0M897 481h0M501 179h0M552 346h0M426 249h0M480 317h0M407 308h0M502 282h0M602 327h0M461 307h0M440 329h0M551 375h0M820 289h0M467 291h0M504 576h0M485 274h0M625 269h0M468 347h0M640 344h0M428 300h0M479 400h0M311 343h0M469 215h0M401 187h0M475 302h0M621 291h0M460 326h0M561 325h0M550 224h0M475 362h0M110 464h0M757 578h0M492 326h0M604 376h0M690 388h0M568 174h0M823 383h0M477 180h0M636 625h0M508 316h0M516 294h0M232 82h0M72 248h0M482 264h0M481 377h0M325 333h0M482 339h0M460 393h0M510 281h0M380 344h0M251 340h0M459 257h0M433 139h0M422 210h0M532 290h0M368 286h0M671 144h0M399 137h0M515 264h0M315 425h0M670 75h0M134 338h0M619 521h0M680 91h0M356 50h0M404 221h0M461 501h0M537 307h0M633 234h0M348 274h0M496 360h0M485 315h0M478 257h0M473 276h0M507 279h0M301 480h0M679 222h0M426 468h0M118 526h0M366 64h0M597 219h0M489 286h0M460 306h0M752 439h0M503 459h0M446 308h0M443 306h0M496 310h0M478 256h0M442 282h0M401 339h0M595 286h0M399 336h0M440 357h0M514 300h0M367 442h0M365 88h0M529 302h0M335 451h0M502 491h0M320 156h0M549 290h0M169 246h0M520 252h0M294 598h0M237 154h0M558 298h0M578 300h0M521 365h0M443 268h0M538 409h0M383 336h0M434 293h0M794 125h0M435 294h0M432 212h0M685 263h0M509 302h0M371 340h0M473 467h0M292 56h0M477 299h0M524 165h0M385 323h0M635 162h0M730 409h0M469 308h0M292 178h0M404 234h0M506 317h0M493 218h0M736 64h0M206 265h0M470 315h0M438 234h0M506 301h0M292 380h0M394 393h0M434 335h0M472 323h0M240 325h0M202 494h0M471 324h0M577 345h0M465 329h0M669 479h0M550 241h0M536 307h0M500 428h0M283 428h0M480 279h0M333 290h0M291 442h0M436 248h0M490 300h0M538 267h0M378 352h0M360 188h0M354 270h0M614 232h0M471 289h0M509 344h0M406 282h0M475 493h0M475 244h0M421 382h0M517 382h0M496 305h0M909 275h0M445 253h0M497 30h0M578 424h0M557 371h0M558 450h0M210 394h0M419 378h0M491 298h0M517 336h0M476 324h0M479 297h0M766 264h0M495 295h0M593 229h0M500 226h0M433 331h0M568 291h0M490 329h0M452 340h0M533 371h0M353 332h0M499 501h0" stroke="#ffffff" stroke-opacity=".2" stroke-width="3" stroke-linecap="round"/>
<path d="M310 96h0M547 358h0M287 507h0M37 426h0M668 41h0M296 369h0M112 37h0M526 564h0M79 96h0M823 607h0M709 291h0M348 16h0M328 169h0M506 625h0M778 629h0M773 522h0M871 219h0M756 212h0M20 510h0M946 124h0M799 38h0M860 423h0M495 528h0M837 496h0M745 600h0M848 104h0M899 405h0M240 9h0M896 67h0M414 316h0M376 323h0M942 218h0M156 53h0M561 338h0M630 457h0M779 10h0M81 26h0M632 42h0M699 131h0M459 436h0M141 162h0M58 171h0M71 57h0M251 229h0M350 318h0M887 482h0M269 32h0M916 565h0M690 31h0M432 480h0M245 472h0M641 76h0M72 319h0M306 235h0M193 12h0M550 230h0M507 505h0M407 487h0M448 286h0M902 461h0M122 160h0M20 318h0M402 164h0M324 268h0M189 509h0M571 265h0M176 287h0M158 121h0M186 40h0M264 2h0M792 68h0M446 496h0M789 493h0M717 541h0M543 238h0M48 383h0M170 385h0M637 4h0M10 209h0M549 592h0M722 506h0M875 200h0M610 55h0M659 569h0M821 396h0M39 359h0M574 351h0M420 14h0M469 150h0M489 26h0M78 468h0M821 636h0M276 518h0M736 31h0M513 547h0M786 162h0M943 374h0M564 130h0M396 331h0M621 265h0M487 40h0M874 51h0M450 536h0M822 279h0M31 71h0M155 624h0M29 88h0M915 341h0M843 482h0M95 62h0M924 321h0M826 58h0M470 314h0M158 599h0M890 569h0M164 627h0M557 333h0M221 213h0M723 528h0M693 622h0M32 254h0M665 319h0M444 90h0M672 375h0M811 426h0M414 166h0M683 99h0M462 12h0M497 422h0M240 139h0M456 10h0M354 219h0M492 595h0M877 401h0M638 530h0M396 636h0M751 147h0M659 628h0M461 514h0M330 372h0M583 369h0M178 288h0M641 571h0M804 126h0M827 4h0M448 359h0M921 48h0M610 18h0M860 21h0M599 216h0M405 354h0M935 418h0M562 405h0M788 303h0M360 93h0M37 404h0M166 424h0M353 525h0M452 572h0M409 5h0M545 288h0M884 233h0M666 92h0M649 92h0M348 412h0M400 246h0M769 383h0M361 437h0M262 543h0M81 353h0M344 498h0M408 604h0M246 360h0M865 578h0M45 502h0M565 281h0M93 593h0M789 305h0M149 173h0M489 283h0M220 112h0M794 568h0M295 6h0M321 537h0M673 367h0M115 456h0M829 205h0M673 65h0M379 601h0M417 627h0M875 520h0M239 269h0M133 619h0M898 404h0M615 169h0M84 349h0M584 364h0M11 225h0M371 281h0M804 60h0M604 403h0M952 95h0M287 343h0M538 366h0M305 625h0M605 334h0M546 403h0M807 374h0M116 100h0M501 525h0M738 206h0M920 280h0M301 574h0M939 43h0M227 22h0M327 99h0M88 172h0M122 283h0M520 172h0M386 580h0M265 18h0M811 225h0M612 114h0M0 533h0M274 27h0M666 251h0M645 540h0M167 104h0M297 87h0M669 85h0M563 153h0M574 294h0M269 125h0M881 411h0M178 407h0M888 107h0M543 401h0M557 51h0M410 341h0M148 256h0M78 517h0M403 235h0M212 535h0M179 428h0M816 434h0M804 605h0M204 191h0M408 567h0M732 434h0M117 238h0M20 70h0M839 344h0M174 522h0M810 251h0M94 506h0M483 571h0M930 441h0M782 367h0M4 172h0M466 389h0M167 551h0M83 391h0M24 202h0M300 265h0M201 338h0M30 413h0M506 224h0M632 9h0M221 129h0M847 230h0M827 116h0M874 96h0M93 107h0M224 506h0M950 202h0M410 114h0M927 564h0M10 439h0M521 350h0M942 558h0M190 74h0M665 207h0M791 505h0M162 233h0M908 546h0M427 71h0M405 506h0M391 414h0M381 86h0M14 317h0M206 290h0M191 214h0M527 477h0M613 31h0M884 358h0M477 430h0M282 134h0M96 60h0M911 264h0M247 578h0M148 36h0M89 296h0M278 222h0M260 570h0M711 114h0M91 352h0M492 62h0M142 60h0M121 153h0M904 312h0M291 53h0M160 509h0M195 591h0M316 44h0M350 262h0M931 372h0M50 297h0M717 379h0M606 43h0M769 479h0M375 500h0M654 601h0M389 55h0M779 267h0M339 539h0M672 282h0M774 77h0M215 568h0M235 361h0M890 571h0M918 231h0M376 477h0M80 607h0M865 207h0M857 128h0M802 407h0M301 97h0M450 357h0M604 165h0M618 618h0M481 544h0M262 539h0M804 96h0M712 524h0M842 83h0M64 385h0M774 25h0M106 143h0M929 562h0M860 10h0M757 474h0M192 482h0M339 267h0M28 455h0M372 226h0M781 331h0M68 206h0M849 309h0M844 62h0M546 459h0M162 416h0M477 243h0M491 67h0M816 355h0M352 193h0M436 260h0M621 585h0M763 583h0M687 19h0M815 275h0M424 626h0M893 487h0M621 139h0M113 605h0M248 616h0M290 261h0M894 218h0M819 513h0M867 100h0M273 243h0M368 233h0M834 615h0M229 109h0M886 294h0M172 6h0M478 386h0M694 287h0M273 623h0M358 545h0M259 622h0M679 363h0M405 51h0M213 96h0M287 423h0M824 611h0M778 442h0M737 235h0M436 425h0M334 186h0M155 58h0M668 168h0M49 98h0M562 122h0M694 19h0M211 185h0M150 144h0M307 501h0M298 47h0M676 341h0M630 544h0M668 457h0M30 581h0M229 247h0M217 118h0M949 94h0M308 110h0M9 487h0M872 262h0M294 153h0M899 475h0M625 30h0M750 499h0M443 256h0M914 198h0M88 334h0M932 313h0M10 556h0M137 403h0M326 458h0M468 1h0M283 266h0M676 536h0M488 455h0M658 400h0M510 593h0M89 557h0M155 115h0M146 224h0M56 338h0M32 280h0M809 231h0M181 243h0M257 577h0M523 608h0M948 314h0M128 240h0M62 164h0M505 491h0M620 177h0M304 436h0M919 29h0M778 188h0M206 383h0M77 185h0M583 611h0M726 412h0M931 492h0M94 583h0M352 354h0M493 423h0M952 398h0M725 154h0M371 214h0M213 428h0M190 166h0M723 47h0M477 632h0M711 523h0M447 448h0M936 28h0M51 372h0M298 130h0M949 395h0M359 304h0M246 204h0M699 550h0M627 432h0M104 508h0M406 97h0M375 118h0M121 22h0M222 62h0M548 329h0M297 556h0M211 247h0M730 394h0M314 209h0M797 239h0M189 110h0M665 165h0M128 308h0M129 197h0M523 394h0M796 362h0M626 68h0M174 200h0M872 14h0M48 448h0M196 614h0M520 240h0M91 281h0M598 489h0M419 1h0M745 186h0M754 433h0M860 203h0M562 123h0M426 568h0M97 278h0M703 64h0M442 237h0M400 395h0M794 578h0M601 403h0M616 419h0M642 183h0M293 348h0M897 16h0M191 306h0M799 374h0M15 52h0M388 323h0M777 232h0M936 347h0M803 551h0M674 230h0M623 191h0M667 473h0M951 297h0M230 474h0M900 532h0M299 235h0M808 539h0M813 210h0M550 20h0M733 377h0M679 366h0M108 474h0M946 17h0M483 15h0M450 490h0M449 66h0M850 510h0M412 564h0M556 93h0M680 448h0M251 468h0M589 90h0M0 554h0M93 489h0M648 286h0M580 117h0M356 97h0M710 587h0M435 231h0M426 119h0M762 194h0M378 148h0M5 562h0M924 219h0M123 207h0M275 556h0M565 391h0M15 453h0M19 636h0M194 237h0M110 478h0M606 153h0M369 638h0M64 353h0M32 470h0M178 115h0M773 380h0M426 555h0M675 190h0M946 6h0M751 351h0M469 23h0M248 425h0M610 283h0M213 146h0M638 122h0M182 357h0M518 189h0M328 520h0M697 40h0M26 406h0M861 277h0M560 541h0M388 86h0M833 419h0M202 260h0M607 91h0M250 190h0M49 453h0M371 149h0M569 629h0M701 43h0M239 593h0M780 116h0M696 187h0M425 560h0M350 30h0M249 135h0M758 503h0M944 27h0M456 353h0M137 384h0M123 188h0M660 69h0M316 596h0M244 62h0M96 451h0M139 486h0M797 294h0M664 257h0M262 565h0M924 25h0M644 409h0M10 151h0M146 339h0M348 563h0M432 359h0M74 580h0M401 587h0M373 464h0M692 596h0M221 235h0M877 247h0M758 14h0M841 164h0M941 466h0M813 127h0M432 595h0M954 597h0M429 342h0M70 153h0M817 53h0M357 380h0M227 284h0M443 618h0M312 133h0M35 191h0M775 69h0M135 22h0M502 547h0M841 339h0M658 388h0M922 298h0M757 353h0M703 346h0M70 634h0M785 309h0M452 419h0M592 430h0M15 535h0M867 48h0M824 523h0M366 64h0M576 51h0M405 345h0M421 147h0M409 451h0M949 638h0M337 204h0M397 500h0M840 235h0M874 80h0M5 254h0M696 149h0M817 159h0M874 411h0M9 133h0M915 257h0M954 102h0M93 445h0M338 400h0M468 136h0M4 85h0M229 627h0M171 31h0M12 96h0M831 246h0M296 374h0M365 65h0M650 56h0M920 263h0M113 597h0M444 29h0M619 578h0M348 242h0M458 37h0M70 300h0M280 73h0M909 419h0M151 628h0M282 519h0M354 354h0M643 537h0M58 14h0M669 217h0M232 609h0M830 460h0M234 435h0M522 135h0M472 120h0M790 515h0M312 548h0M819 340h0M140 323h0M526 224h0M642 263h0M176 117h0M917 615h0M124 623h0M263 77h0M553 176h0M177 195h0M674 23h0M528 246h0M891 34h0M518 85h0M822 26h0M672 110h0M14 310h0M414 535h0M661 71h0M517 562h0M175 478h0M321 328h0M430 193h0M196 97h0M296 475h0M177 449h0M185 168h0M134 192h0M549 469h0M206 166h0M811 445h0M489 366h0M10 55h0M396 49h0M536 409h0M722 454h0M81 156h0M218 552h0M719 219h0M404 201h0M753 496h0M271 574h0M675 10h0M947 383h0M541 487h0M121 517h0M561 270h0M949 417h0M165 214h0M375 424h0M144 337h0M845 329h0M282 637h0M738 186h0M500 70h0M665 302h0M420 231h0M472 455h0M239 47h0M694 135h0M146 42h0M527 80h0M930 240h0M475 132h0M28 548h0M676 464h0M244 311h0M743 8h0M914 272h0M29 70h0M23 299h0M902 286h0M33 498h0M501 387h0M178 213h0M224 364h0M464 453h0M730 589h0M417 38h0M218 138h0M887 8h0M810 517h0M471 319h0M533 46h0M342 388h0M352 112h0M447 604h0M716 275h0M571 622h0M326 228h0M59 247h0M59 452h0M124 625h0M52 141h0M825 365h0M304 191h0M14 104h0M365 492h0M629 309h0M898 224h0M444 452h0M731 43h0M21 470h0M308 1h0M758 127h0M567 300h0M91 168h0M438 185h0M758 5h0M544 439h0M956 461h0M819 560h0M228 26h0M574 124h0M811 374h0M328 263h0M58 632h0M709 230h0M954 503h0M304 553h0M94 257h0M893 555h0M560 326h0M476 254h0M288 259h0M272 369h0M856 558h0M378 124h0M662 328h0M657 300h0M394 627h0M431 522h0M819 355h0M72 587h0M326 323h0M724 233h0M134 534h0M920 628h0M80 331h0M603 189h0M175 272h0M22 424h0M620 513h0M907 564h0M624 74h0M332 247h0M541 486h0M688 230h0M918 425h0M810 183h0M514 271h0M505 125h0M497 249h0M594 253h0M761 377h0M467 250h0M883 629h0M445 552h0M578 32h0M143 563h0M737 430h0M82 470h0M174 269h0M615 428h0M95 569h0M386 266h0M227 274h0M779 128h0M445 361h0M644 464h0M486 289h0M423 530h0M426 566h0M612 25h0M330 590h0M528 594h0M790 361h0M134 531h0M621 194h0M592 189h0M426 304h0M280 592h0M413 637h0M417 148h0M562 543h0M579 271h0M452 119h0M316 10h0M318 621h0M219 527h0M111 68h0M701 231h0M212 169h0M671 444h0M541 289h0M752 625h0M620 111h0M413 146h0M401 283h0M500 22h0M690 243h0" stroke="#ffffff" stroke-opacity=".28" stroke-width="2.5" stroke-linecap="round"/>
<path d="M383 331h0M370 125h0M611 317h0M460 326h0M284 386h0M454 312h0M463 296h0M451 474h0M687 372h0M461 335h0M557 131h0M428 262h0M614 257h0M614 388h0M481 307h0M454 249h0M357 181h0M514 345h0M478 307h0M352 476h0M464 238h0M503 376h0M481 268h0M868 79h0M613 356h0M144 297h0M731 130h0M233 387h0M426 296h0M502 339h0M444 234h0M453 273h0M394 279h0M516 343h0M552 331h0M445 233h0M470 395h0M798 408h0M569 349h0M253 130h0M504 357h0M505 414h0M471 248h0M557 339h0M169 403h0M326 625h0M507 294h0M479 288h0M365 317h0M582 239h0M293 219h0M483 267h0M511 402h0M510 266h0M485 376h0M516 301h0M491 352h0M569 382h0M571 254h0M481 334h0M467 314h0M494 270h0M571 351h0M471 327h0M550 280h0M566 463h0M327 316h0M85 331h0M547 420h0M584 254h0M604 165h0M407 315h0M518 294h0M494 368h0M390 436h0M414 265h0M529 368h0M546 433h0M693 329h0M266 527h0M549 265h0M340 332h0M719 253h0M496 399h0M523 281h0M578 157h0M241 274h0M349 151h0M553 256h0M522 300h0M579 273h0M534 215h0M444 384h0M531 197h0M503 225h0M510 250h0M645 488h0M432 417h0M543 253h0M528 553h0M212 185h0M536 416h0M536 310h0M451 290h0M509 160h0M451 217h0M570 230h0M284 415h0M453 225h0M352 238h0M436 126h0M508 255h0M490 384h0M458 262h0M393 159h0M592 249h0M659 320h0M458 256h0M384 98h0M274 304h0M465 311h0M466 232h0M409 249h0M502 326h0M524 487h0M517 226h0M749 416h0M379 194h0M535 171h0M392 349h0M549 262h0M557 281h0M791 536h0M422 195h0M485 337h0M448 266h0M508 287h0M526 334h0M471 389h0M481 272h0M515 302h0M541 162h0M552 295h0M572 377h0M458 300h0M444 260h0M347 324h0M599 282h0M548 321h0M526 251h0M507 303h0M708 433h0M495 306h0M382 565h0M241 140h0M503 347h0M539 312h0M476 197h0M612 290h0M408 279h0M440 251h0M871 529h0M424 376h0M473 224h0M507 239h0M714 255h0M896 341h0M477 327h0M472 320h0M471 345h0M341 430h0M503 143h0M457 424h0M412 301h0M532 298h0M396 210h0M650 50h0M486 322h0M509 280h0M477 215h0M283 496h0M445 533h0M437 352h0M401 240h0M544 171h0M204 544h0M532 278h0M610 257h0M421 314h0M407 268h0M329 171h0M381 221h0M176 165h0M549 320h0M460 255h0M477 331h0M712 365h0M513 261h0M433 140h0M510 343h0M304 395h0M430 304h0M499 346h0M417 221h0M761 310h0M662 146h0M572 460h0M836 429h0M299 224h0M486 359h0M503 327h0M164 441h0M445 308h0M417 367h0M559 339h0M466 316h0M502 374h0M519 153h0M402 324h0M515 342h0M462 323h0M477 292h0M241 206h0M489 273h0M547 110h0M213 152h0M400 327h0M624 576h0M836 225h0M511 270h0M498 278h0M550 242h0M227 354h0M507 384h0M503 303h0M541 263h0M733 437h0M434 529h0M665 380h0M507 285h0M599 350h0M398 261h0M527 323h0M591 454h0M249 32h0M454 119h0M678 352h0M535 342h0M439 330h0M485 236h0M444 337h0M523 191h0M436 280h0M510 570h0M446 361h0M516 318h0M556 297h0M424 228h0M500 494h0M546 311h0M209 227h0M510 238h0M453 150h0M451 259h0M450 240h0M482 423h0M611 455h0M460 441h0M480 286h0M324 283h0M447 304h0M735 418h0M345 347h0M348 402h0M469 293h0M415 314h0M513 277h0M640 297h0M470 313h0M584 288h0M426 333h0M469 366h0M256 54h0M587 306h0M426 322h0M540 267h0M438 271h0M511 443h0M260 505h0M611 306h0M429 232h0M176 409h0M475 262h0M487 325h0M553 262h0M372 290h0M624 387h0M453 314h0M492 396h0M457 337h0M197 439h0M472 113h0M564 354h0M458 313h0M559 446h0M412 315h0M621 581h0M338 230h0M449 319h0M514 328h0M528 283h0M647 67h0M233 556h0M394 8h0M381 313h0M351 500h0M492 303h0M536 266h0M394 154h0M469 630h0M528 328h0M599 196h0M405 274h0M517 223h0M537 388h0M601 82h0M439 303h0M545 347h0M598 305h0M420 260h0M566 352h0M538 243h0M444 264h0M355 385h0M502 434h0M474 600h0M517 297h0M514 98h0M542 324h0M551 314h0M764 389h0M682 1h0M486 307h0M470 334h0M573 322h0M717 330h0M652 215h0M467 209h0M545 257h0M556 334h0M502 368h0M638 409h0M532 297h0M551 41h0M498 295h0M458 238h0M288 353h0M468 302h0M617 522h0M496 347h0M363 331h0M85 397h0M431 277h0M461 398h0M567 320h0M423 337h0M664 235h0M469 346h0M603 607h0M490 427h0M558 19h0M476 311h0M476 272h0M506 295h0M454 273h0M180 134h0M423 304h0M855 331h0M384 367h0M444 5h0M375 287h0M412 309h0M508 519h0M471 264h0M471 245h0M679 460h0M490 281h0M477 330h0M562 338h0M575 343h0M456 335h0M517 361h0M473 46h0M439 306h0M529 337h0M495 288h0M508 335h0M566 385h0M490 308h0M534 235h0M551 306h0M452 227h0M367 389h0M397 627h0M516 126h0M491 203h0M641 352h0M349 252h0M484 326h0M476 330h0M604 107h0M246 292h0M126 395h0M689 421h0M460 313h0M734 442h0M430 463h0M434 287h0M183 532h0M453 309h0M394 53h0M610 324h0M451 494h0M542 235h0M636 366h0M419 314h0M537 244h0M484 289h0M849 239h0M484 303h0M154 460h0M555 337h0M286 201h0M387 405h0M554 310h0M692 287h0M464 557h0M638 295h0M513 323h0M539 362h0M480 293h0M517 291h0M630 230h0M672 182h0M362 296h0M582 391h0M517 261h0M603 239h0M449 292h0M424 217h0M505 453h0M571 249h0M226 1h0M514 285h0M489 364h0M547 330h0M200 150h0M478 400h0M545 362h0M361 238h0M476 295h0M455 543h0M620 400h0M418 194h0M457 341h0M486 286h0M512 72h0M504 402h0M540 255h0M497 320h0M548 337h0M541 279h0M481 271h0M392 165h0M776 174h0M494 386h0M401 156h0M565 343h0M505 256h0M509 338h0M296 198h0M830 230h0M249 432h0M582 318h0M491 248h0M522 302h0M458 309h0M515 297h0M603 258h0M837 533h0M466 444h0M450 350h0M414 356h0M672 175h0M529 311h0M174 154h0M443 324h0M248 337h0M571 438h0M427 260h0M473 284h0M810 440h0M601 270h0M301 373h0M533 306h0M594 408h0M716 228h0M435 353h0M493 302h0M493 397h0M372 352h0M443 299h0M480 321h0M515 315h0M473 190h0M161 567h0M552 320h0M468 288h0M277 363h0M252 460h0M512 361h0M521 273h0M510 367h0M640 240h0M435 326h0M366 319h0M573 223h0M511 316h0M594 270h0M693 488h0M426 311h0M663 311h0M676 171h0M500 304h0M612 336h0M561 192h0M465 309h0M359 307h0M562 231h0M499 408h0M477 384h0M216 608h0M519 371h0M767 226h0M501 343h0M474 225h0M441 301h0M462 510h0M471 292h0M492 333h0M493 361h0M535 316h0M368 452h0M649 243h0M418 213h0M543 234h0M530 270h0M468 357h0M508 376h0M458 340h0M584 231h0M526 235h0M363 414h0M213 402h0M451 197h0M554 231h0M501 315h0M519 323h0M330 192h0M515 344h0M525 379h0M538 222h0M478 280h0M676 118h0M422 330h0M486 157h0M472 342h0M85 375h0M519 152h0M486 211h0M231 102h0M518 190h0M510 292h0M551 273h0M683 385h0M648 244h0M522 390h0M467 334h0M439 396h0M763 441h0M616 347h0M344 273h0M454 323h0M370 159h0M137 348h0M531 286h0M252 269h0M543 220h0M371 239h0M454 279h0M448 141h0M479 218h0M391 180h0M394 293h0M495 149h0M525 240h0M469 355h0M498 275h0M385 306h0M396 385h0M447 324h0M808 370h0M402 177h0M397 282h0M382 129h0M611 47h0M471 318h0M507 272h0M375 256h0M344 397h0M445 276h0M576 384h0M537 302h0M433 278h0M704 245h0M377 390h0M299 552h0M429 292h0M670 311h0M564 398h0M683 14h0M304 241h0M556 468h0M755 117h0M498 298h0M527 298h0M589 280h0M574 364h0M574 349h0M511 361h0M424 173h0M930 260h0M428 156h0M501 379h0M499 343h0M602 347h0M513 384h0M491 351h0M550 383h0M423 385h0M199 176h0M574 388h0M581 318h0M436 128h0M567 267h0M873 383h0M523 426h0M405 427h0M487 502h0M428 525h0M506 334h0M515 116h0M358 395h0M256 565h0M499 277h0M527 335h0M445 264h0M287 603h0M447 303h0M538 228h0M700 352h0M332 453h0M400 178h0M722 316h0M427 427h0M582 283h0M626 455h0M445 232h0M451 258h0M569 253h0M452 326h0M459 346h0M657 303h0M345 347h0M387 166h0M385 337h0M491 227h0M532 217h0M487 217h0M246 284h0M505 258h0M531 393h0M551 265h0M371 279h0M384 266h0M709 320h0M440 464h0M402 575h0M376 359h0M340 333h0M603 150h0M467 282h0M261 258h0M311 277h0M480 299h0M541 301h0M512 402h0M610 403h0M473 74h0M513 369h0M493 300h0M186 149h0M788 618h0M598 235h0M370 296h0M73 211h0M711 340h0M506 293h0M524 206h0M476 304h0M180 394h0M554 98h0M489 213h0M471 255h0M490 257h0M558 336h0M568 143h0M516 255h0M521 269h0M542 299h0M551 353h0M414 249h0M506 196h0M601 250h0M525 330h0M514 367h0M215 420h0M461 322h0M731 329h0M585 333h0M504 308h0M711 424h0M539 256h0M751 234h0M422 282h0M504 437h0M530 331h0M494 298h0M424 163h0M509 23h0M532 247h0M504 304h0M600 255h0M513 326h0M427 340h0M442 311h0M503 328h0M636 120h0M523 285h0M386 319h0M386 344h0M716 588h0M309 349h0M555 290h0M620 416h0M385 449h0M801 150h0M654 369h0M619 237h0M457 376h0M547 297h0M536 313h0M538 320h0M508 359h0M552 306h0M544 275h0M526 250h0M452 249h0M540 329h0M488 380h0M459 286h0M409 326h0M184 170h0M634 305h0M599 331h0M564 460h0M328 319h0M516 525h0M496 407h0M713 141h0M486 341h0M518 223h0M492 280h0M464 251h0M539 336h0M581 253h0M299 14h0M459 290h0M235 202h0M141 307h0M378 109h0M656 225h0M477 346h0M404 65h0M436 266h0M494 350h0M367 76h0M358 337h0M280 306h0M367 386h0M257 102h0M595 55h0M458 346h0M733 95h0M634 394h0M676 593h0M274 381h0M418 310h0M519 253h0M544 296h0M462 323h0M451 373h0M508 55h0M216 301h0M507 412h0M822 328h0M656 343h0M424 313h0M402 335h0M635 18h0M527 268h0M308 19h0M441 458h0M482 278h0M367 297h0M531 343h0M664 259h0M477 365h0M406 356h0M437 474h0M828 444h0M637 537h0M495 314h0M478 161h0M493 274h0M378 312h0M435 299h0M621 280h0M351 221h0M415 282h0M661 275h0M474 288h0M182 427h0M496 318h0M373 126h0M125 242h0M578 325h0M506 495h0M508 309h0M560 348h0M462 178h0M591 374h0M426 408h0M545 259h0M596 250h0M539 329h0M528 315h0M545 325h0M554 364h0M493 291h0M544 397h0M478 304h0M437 378h0M412 369h0M564 406h0M491 546h0M495 347h0M470 248h0M554 260h0M426 322h0M585 315h0M414 219h0M603 342h0M256 530h0M512 187h0M682 174h0M539 24h0M418 375h0M398 374h0M464 373h0M732 415h0M308 383h0M770 239h0M545 415h0M484 280h0M492 332h0M598 363h0M500 302h0M915 327h0M457 313h0M404 100h0M498 419h0M364 300h0M551 217h0M685 470h0M466 243h0M444 66h0M561 407h0M525 329h0M483 241h0M620 396h0M555 507h0M595 252h0M523 420h0M350 215h0M481 244h0M503 450h0M448 275h0M464 363h0M552 202h0M154 455h0M547 398h0M520 240h0M474 221h0M632 224h0M562 323h0M537 335h0M523 370h0M419 457h0M472 347h0M528 269h0M513 244h0M521 341h0M454 450h0M450 281h0M429 287h0M596 236h0M401 344h0M358 24h0M361 509h0M479 301h0M477 488h0M518 295h0M468 316h0M790 420h0M70 133h0M467 298h0M494 161h0M477 364h0M546 399h0M426 214h0M476 272h0M677 489h0M511 306h0M518 526h0M480 97h0M552 247h0M440 238h0M579 307h0M281 585h0M441 284h0M486 233h0M587 211h0M580 341h0M737 473h0M448 235h0M826 189h0M690 281h0M459 203h0M486 334h0M417 304h0M652 198h0M531 217h0M476 216h0M163 63h0M547 30h0M506 358h0M777 397h0M535 638h0M528 278h0M509 292h0M524 326h0M470 256h0M717 138h0M591 333h0M841 367h0M520 251h0M462 602h0M412 373h0M518 363h0M543 289h0M290 307h0M374 4h0M339 318h0M378 606h0M386 191h0M369 349h0M676 231h0M459 267h0M577 277h0M497 495h0M535 136h0M460 320h0M362 243h0M361 344h0M500 339h0M599 378h0M485 343h0M496 310h0M530 261h0M581 255h0M496 301h0M639 295h0M593 311h0M556 131h0M505 345h0M481 335h0M476 402h0M456 297h0M562 469h0M531 245h0M460 245h0M497 375h0M275 627h0M535 340h0M490 410h0M384 155h0M536 365h0M426 303h0M528 280h0M483 341h0M553 191h0M654 195h0M248 344h0M597 321h0M493 239h0M532 361h0M432 298h0M535 363h0M561 152h0M568 326h0M435 232h0M520 506h0M550 303h0M454 406h0M517 269h0M847 170h0M714 426h0M262 51h0M408 46h0M472 330h0M233 37h0M700 324h0M331 371h0M548 344h0M383 97h0M541 278h0M479 107h0M511 299h0M531 254h0M658 436h0M264 220h0M462 282h0M457 277h0M384 446h0M287 620h0M511 312h0M204 108h0M229 374h0M445 296h0M601 420h0M416 424h0M496 263h0M710 467h0M619 63h0M449 282h0M554 389h0M727 213h0M501 299h0M469 359h0M426 421h0M405 382h0M472 230h0M576 341h0M570 276h0M259 308h0M492 401h0M470 305h0M363 239h0M295 461h0M616 493h0M462 294h0M595 626h0M250 303h0M525 283h0M374 242h0M501 304h0M296 359h0M466 362h0M389 2h0M535 357h0M686 322h0M547 343h0M602 101h0M509 274h0M539 274h0M338 418h0M197 552h0M466 417h0M613 365h0M493 301h0M480 330h0M461 63h0M429 312h0M470 351h0M592 341h0M516 323h0M526 626h0M356 196h0M272 30h0M491 347h0M736 470h0M595 231h0M508 277h0M267 287h0M438 383h0M361 572h0M603 209h0M509 265h0M522 410h0M491 292h0M447 298h0M448 207h0M442 353h0M451 272h0M494 216h0M478 376h0M510 380h0M447 267h0M427 408h0M783 22h0M608 148h0M343 507h0M394 371h0M481 203h0M422 277h0M468 264h0M491 103h0M155 513h0M450 618h0M411 200h0M435 17h0M453 207h0M508 233h0M480 265h0M564 355h0M524 323h0M506 193h0M551 486h0M186 556h0M790 384h0M517 315h0M574 231h0M542 258h0M389 347h0M521 399h0M322 371h0M598 296h0M558 253h0M390 216h0M801 328h0M532 329h0M469 326h0M396 409h0M462 329h0M450 475h0M555 308h0M570 342h0M460 588h0M506 263h0M643 319h0M510 255h0M456 344h0M411 352h0M406 209h0M254 283h0M533 252h0M539 366h0M460 311h0M489 269h0M434 253h0M598 327h0M489 321h0M527 319h0M419 389h0M599 198h0M464 320h0M506 335h0M392 295h0M365 230h0M466 216h0M533 283h0M601 226h0M555 345h0M500 198h0M473 326h0M504 361h0M158 169h0M411 492h0M568 263h0M626 263h0M488 304h0M541 238h0M609 472h0M668 171h0M532 83h0M466 313h0M493 441h0M495 299h0M528 307h0M528 288h0M529 318h0M337 467h0M457 215h0M787 256h0M484 321h0M253 310h0M320 117h0M406 394h0M483 313h0M521 297h0M635 182h0M190 478h0M520 288h0M590 198h0M412 204h0M440 350h0M401 549h0M491 337h0M553 304h0M585 427h0M350 275h0M537 314h0M383 283h0M544 340h0M437 390h0M612 456h0M361 143h0M532 314h0M466 241h0M488 407h0M587 453h0M503 274h0M569 401h0M566 213h0M509 359h0M442 354h0M486 319h0M346 307h0M479 303h0M420 262h0M422 254h0M599 315h0M507 284h0M524 293h0M330 502h0M184 226h0M678 241h0M472 329h0M526 335h0M402 369h0M589 264h0M516 403h0M552 306h0M512 263h0M423 272h0M534 289h0M477 351h0M534 287h0M441 247h0M500 241h0M477 385h0M752 30h0M455 336h0M612 280h0M372 507h0M581 484h0M460 270h0M507 329h0M499 285h0M591 191h0M491 413h0M337 409h0M463 335h0M237 158h0M572 332h0M339 467h0M467 312h0M412 395h0M583 367h0M256 469h0M552 311h0M527 263h0M97 207h0M507 347h0M493 347h0M448 263h0M427 573h0M552 236h0M331 400h0M462 314h0M523 185h0M476 343h0M472 316h0M613 244h0M498 248h0M627 295h0M455 313h0M523 136h0M246 532h0M606 173h0M531 336h0M276 380h0M527 260h0M448 313h0M345 436h0M526 291h0M484 209h0M474 138h0M437 293h0M528 179h0M722 462h0M531 309h0M517 351h0M616 421h0M491 325h0M452 318h0M532 304h0M435 299h0M554 223h0M423 201h0M477 294h0M500 375h0M521 274h0M129 71h0M671 448h0M555 347h0M514 374h0M516 281h0M530 299h0M445 281h0M552 253h0M516 583h0M565 221h0M462 276h0M462 320h0M505 438h0M579 366h0M562 240h0M462 80h0M509 376h0M454 395h0M682 171h0M715 52h0M368 300h0M419 137h0M802 208h0M559 259h0M155 562h0M462 310h0M581 329h0M471 137h0M135 51h0M442 268h0M551 177h0M405 317h0M283 183h0M511 297h0M464 399h0M421 318h0M492 280h0M508 305h0M595 288h0M514 305h0M395 320h0M553 251h0M747 92h0M777 522h0M323 218h0M516 215h0M494 236h0M589 324h0M281 33h0M415 355h0M631 304h0M474 342h0M513 333h0M489 397h0M505 107h0M666 285h0M210 251h0M633 530h0M474 321h0M459 359h0M527 249h0M523 322h0M679 364h0M536 326h0M455 312h0M447 297h0M481 274h0M498 263h0M580 427h0M530 328h0M388 315h0M465 291h0M786 564h0M427 371h0M476 338h0M615 328h0M507 502h0M502 485h0M495 306h0M526 292h0M363 368h0M521 220h0M507 350h0M497 315h0M712 216h0M478 312h0M494 176h0M554 300h0M402 518h0M597 277h0M465 260h0M445 154h0M493 268h0M543 357h0M533 299h0M360 324h0M272 619h0M857 486h0M731 472h0M235 539h0M454 312h0M731 376h0M501 310h0M597 133h0M470 318h0M456 317h0M559 176h0M546 244h0M667 274h0M724 500h0M245 114h0M451 316h0M505 388h0M431 181h0M470 309h0M375 108h0M491 260h0M437 406h0M588 457h0M709 72h0M431 427h0M688 281h0M417 280h0M440 269h0M511 333h0M426 81h0M237 605h0M540 351h0M900 260h0M166 253h0M480 320h0M501 60h0M246 199h0M447 318h0M587 343h0M395 322h0M414 187h0M171 247h0M342 1h0M367 313h0M364 385h0M437 275h0M531 352h0M522 434h0M528 449h0M348 409h0M446 268h0M518 576h0M450 165h0M616 212h0M503 260h0M367 387h0M276 267h0M562 301h0M462 376h0M461 284h0M405 332h0M525 196h0M376 391h0M352 345h0M525 257h0M402 286h0M503 339h0M343 25h0M434 312h0M659 192h0M763 196h0M227 105h0M559 233h0M579 306h0M844 301h0M529 299h0M484 243h0M576 366h0M494 312h0M444 296h0M417 364h0M795 323h0M216 278h0M494 295h0M473 284h0M473 319h0M501 380h0M535 485h0M386 368h0M411 343h0M504 300h0M436 273h0M509 241h0M523 307h0M558 289h0M514 301h0M493 7h0M520 325h0M508 158h0M520 298h0M514 356h0M437 317h0M557 375h0M490 321h0M496 500h0M531 391h0M454 333h0M806 96h0M565 293h0M169 466h0M714 177h0M476 336h0M507 297h0M464 132h0M519 100h0M425 389h0M524 211h0M413 392h0M396 315h0M671 380h0M676 333h0M495 265h0M537 228h0M512 353h0M431 298h0M597 242h0M528 359h0M438 237h0M496 326h0M271 393h0M772 227h0M433 132h0M511 311h0M463 305h0M517 343h0M476 282h0M152 442h0M634 280h0M465 198h0M371 310h0M558 303h0M505 309h0M456 269h0M601 308h0M584 603h0M406 497h0M690 260h0M712 158h0M564 534h0M596 193h0M616 334h0M332 489h0M498 349h0M527 299h0M349 235h0M532 310h0M534 222h0M324 133h0M512 332h0M487 285h0M436 259h0M466 357h0M165 220h0M826 543h0M507 351h0M510 283h0M536 199h0M348 411h0M545 209h0M566 145h0M775 467h0M560 363h0M567 437h0M485 270h0M505 313h0M474 289h0M713 222h0M508 262h0M538 284h0M648 330h0M538 273h0M466 286h0M576 638h0M437 281h0M507 349h0M399 302h0M530 330h0M566 379h0M550 362h0M431 480h0M531 76h0M502 248h0M617 485h0M463 241h0M483 302h0M534 264h0M543 496h0M485 279h0M569 326h0M462 112h0M624 344h0M369 416h0M428 373h0M488 382h0M527 151h0M542 307h0M506 265h0M507 258h0M632 354h0M559 292h0M517 265h0M472 395h0M558 253h0M555 439h0M505 308h0M685 392h0M446 406h0M484 342h0M488 321h0M256 369h0M337 224h0M524 284h0M482 371h0M442 283h0M421 386h0M398 242h0M380 243h0M602 521h0M606 293h0M479 291h0M720 557h0M550 322h0M463 415h0M680 518h0M410 201h0M515 230h0M559 101h0M486 222h0M455 328h0M471 299h0M577 373h0M422 318h0M646 622h0M451 294h0M454 330h0M367 246h0M505 363h0M453 250h0M412 334h0M487 268h0M467 331h0M409 348h0M428 441h0M546 414h0M526 437h0M317 117h0M349 244h0M435 257h0M455 99h0M460 298h0M608 414h0M487 341h0M493 316h0M528 249h0M478 272h0M135 369h0M506 234h0M552 281h0M404 444h0M108 210h0M457 224h0M526 282h0M555 409h0M327 514h0M511 362h0M314 238h0M445 463h0M435 262h0M513 423h0M494 154h0M720 0h0M579 44h0M514 318h0M483 321h0M383 278h0M466 7h0M194 573h0M461 325h0M602 253h0M147 459h0M513 228h0M518 304h0M527 199h0M555 194h0M447 92h0M549 311h0M251 248h0M233 204h0M452 330h0M598 278h0M436 274h0M492 274h0M529 410h0M502 298h0M593 247h0M446 210h0M896 125h0M630 301h0M506 367h0M172 342h0M487 335h0M785 186h0M427 373h0M84 389h0M424 407h0M534 279h0M519 600h0M484 282h0M332 146h0M483 285h0M442 344h0M438 132h0M506 294h0M296 393h0M497 423h0M266 225h0M540 483h0M414 417h0M577 244h0M507 327h0M449 301h0M474 314h0M440 342h0M532 329h0M439 265h0M585 465h0M412 504h0M482 105h0M372 172h0M537 269h0M490 245h0M723 158h0M617 331h0M443 185h0M389 216h0M508 293h0M539 385h0M551 458h0M556 316h0M490 320h0M312 251h0M467 372h0M453 280h0M241 185h0M497 316h0M554 519h0M492 330h0M399 298h0M550 126h0M529 439h0M436 291h0M501 322h0M505 405h0M162 222h0M463 346h0M580 177h0M373 343h0M378 330h0M468 375h0M696 374h0M440 262h0M497 342h0M517 599h0M449 328h0M522 442h0M404 403h0M509 282h0M574 339h0M475 333h0M501 288h0M717 345h0M279 91h0M97 469h0M569 169h0M262 455h0M451 310h0M710 433h0M520 255h0M508 175h0M573 451h0M530 317h0M561 216h0M437 238h0M877 328h0M543 267h0M722 363h0M607 386h0M484 286h0M463 246h0M480 280h0M739 155h0M541 292h0M460 346h0M548 342h0M342 126h0M474 269h0M429 285h0M921 422h0M508 335h0M399 212h0M487 278h0M534 342h0M529 533h0M456 393h0M606 340h0M595 426h0M449 319h0M626 377h0M492 411h0M616 255h0M616 278h0M404 395h0M744 255h0M450 169h0M631 292h0M437 331h0M507 275h0M487 293h0M593 457h0M462 356h0M287 435h0M255 29h0M570 451h0M546 322h0M483 318h0M509 246h0M604 230h0M459 276h0M578 505h0M649 308h0M468 303h0M586 526h0M554 129h0M483 271h0M695 147h0M513 139h0M504 345h0M514 294h0M601 273h0M522 313h0M481 384h0M573 295h0M447 84h0M551 360h0M585 288h0M446 356h0M409 304h0M496 369h0M490 328h0M522 319h0M449 278h0M513 246h0M238 313h0M548 359h0M595 250h0M273 446h0M662 439h0M341 247h0M813 591h0M558 228h0M376 87h0M517 274h0M414 222h0M517 339h0M483 266h0M508 471h0M478 304h0M486 286h0M523 345h0M517 305h0M475 343h0M557 175h0M591 228h0M541 319h0M514 285h0M589 361h0M415 290h0M541 271h0M321 306h0M442 241h0M415 249h0M479 295h0M529 281h0M681 202h0M448 348h0M375 227h0M472 268h0M505 286h0M480 235h0M439 395h0M523 260h0M353 378h0M468 351h0M287 14h0M459 256h0M666 480h0M598 153h0M349 260h0M358 229h0M478 358h0M571 329h0M417 460h0M360 156h0M504 456h0M504 308h0M433 481h0M502 269h0M514 441h0M589 393h0M504 7h0M282 222h0M453 314h0M368 343h0M534 279h0M470 271h0M492 442h0M578 190h0M498 432h0M276 359h0M448 266h0M618 258h0M624 337h0M485 111h0M366 288h0M491 320h0M457 249h0M731 218h0M513 300h0M658 87h0M430 132h0M449 367h0M383 468h0M441 303h0M545 276h0M289 235h0M573 340h0M643 181h0M150 34h0M449 321h0M792 461h0M586 446h0M687 4h0M401 344h0M164 540h0M255 339h0M579 278h0M434 394h0M831 358h0M479 175h0M493 308h0M411 414h0M482 230h0M452 334h0M449 330h0M554 223h0M484 242h0M362 205h0M226 218h0M472 355h0M505 355h0M735 617h0M451 263h0M476 350h0M476 315h0M597 313h0M532 231h0M492 264h0M490 342h0M437 366h0M471 334h0M601 242h0M524 296h0M401 280h0M528 269h0M468 366h0M697 191h0M567 335h0M341 172h0M452 202h0M462 295h0M562 551h0M197 366h0M451 264h0M479 248h0M852 92h0M751 255h0M95 475h0M465 339h0M605 3h0M274 248h0M484 363h0M460 369h0M532 177h0M537 221h0M638 98h0M486 261h0M461 301h0M197 152h0M918 279h0M832 461h0M460 330h0M384 427h0M442 323h0M523 0h0M529 308h0M556 352h0M417 415h0M413 418h0M509 329h0M492 294h0M623 440h0M413 295h0M407 183h0M549 293h0M407 322h0M554 241h0M356 301h0M541 393h0M695 53h0M647 359h0M412 285h0M688 318h0M824 317h0M479 326h0M534 240h0M548 243h0M476 280h0M328 227h0M593 238h0M263 140h0M491 336h0M226 217h0M497 312h0M491 289h0M335 419h0M622 193h0M548 202h0M509 583h0M485 305h0M604 423h0M521 301h0M439 289h0M474 378h0M423 410h0M428 359h0M629 525h0M400 266h0M193 62h0M462 304h0M313 500h0M472 325h0M221 228h0M447 251h0M560 132h0M509 222h0M430 326h0M590 328h0M481 358h0M159 178h0M588 271h0M430 265h0M434 326h0M160 579h0M587 10h0M372 362h0M468 319h0M502 260h0M567 207h0M465 224h0M469 455h0M566 336h0M545 301h0M480 298h0M360 190h0M531 390h0M486 465h0M553 436h0M447 260h0M563 304h0M521 267h0M448 229h0M544 458h0M655 573h0M477 283h0M769 344h0M376 400h0M431 310h0M623 238h0M526 412h0M490 292h0M588 264h0M414 290h0M491 436h0M564 180h0M833 341h0M539 244h0M520 336h0M343 326h0M519 201h0M452 254h0M495 285h0M413 339h0M461 382h0M508 310h0M488 266h0M887 443h0M487 269h0M498 288h0M606 316h0M507 516h0M545 180h0M517 335h0M463 349h0M340 367h0M503 237h0M508 310h0M485 255h0M326 468h0M477 260h0M525 290h0M588 253h0M540 320h0M430 233h0M646 277h0M510 319h0M587 255h0M524 338h0M484 44h0M87 521h0M296 20h0M678 571h0M584 476h0M422 342h0M536 293h0M527 236h0M526 351h0M489 267h0M472 294h0M549 233h0M317 316h0M188 144h0M541 353h0M533 454h0M460 40h0M328 170h0M416 361h0M411 350h0M101 359h0M514 296h0M578 395h0M458 143h0M482 290h0M435 287h0M733 341h0M513 279h0M537 354h0M573 633h0M465 288h0M422 390h0M698 461h0M450 229h0M394 214h0M405 218h0M535 349h0M623 366h0M427 237h0M608 165h0M387 451h0M505 211h0M530 395h0M348 373h0M472 180h0M745 537h0M441 184h0M471 276h0M458 311h0M571 466h0M505 326h0M512 297h0M441 108h0M327 114h0M391 230h0M435 498h0M303 119h0M537 384h0M496 325h0M489 74h0M607 374h0M529 444h0M412 369h0M305 325h0M637 194h0M516 243h0M649 296h0M742 424h0M483 302h0M409 135h0M542 328h0M515 332h0M569 315h0M459 273h0M683 316h0M381 176h0M368 125h0M387 214h0M552 519h0M433 242h0M456 384h0M437 278h0M361 231h0M631 298h0M185 431h0M811 492h0M623 306h0M547 265h0M476 391h0M190 467h0M513 284h0M570 399h0M544 264h0M493 217h0M430 287h0M521 331h0M452 261h0M484 406h0M539 233h0M506 356h0M632 350h0M638 83h0M488 323h0M432 249h0M481 311h0M434 386h0M518 241h0M524 122h0M514 475h0M525 443h0M482 361h0M297 249h0M527 283h0M465 288h0M411 296h0M201 24h0M77 247h0M549 267h0M519 358h0M452 312h0M402 415h0M691 146h0M446 355h0M580 337h0M653 210h0M539 354h0M262 295h0M530 178h0M670 259h0M455 456h0M482 305h0M435 223h0M484 332h0M501 290h0M542 353h0M613 339h0M450 206h0M434 322h0M531 338h0M176 183h0M480 295h0M375 358h0M541 315h0M302 242h0M488 273h0M223 145h0M437 279h0M503 417h0M466 544h0M241 379h0M453 379h0M451 354h0M385 430h0M499 308h0M585 269h0M560 246h0M499 308h0M462 303h0M528 274h0M476 294h0M354 106h0M561 375h0M453 289h0M427 205h0M550 231h0M499 327h0M438 294h0M481 269h0M707 435h0M508 270h0M456 341h0M529 289h0M487 326h0M459 291h0" stroke="#e4ecff" stroke-opacity=".45" stroke-width="2.5" stroke-linecap="round"/>
<path d="M482 301h0M735 286h0M470 408h0M393 301h0M607 545h0M692 206h0M352 398h0M480 302h0M495 274h0M483 309h0M444 265h0M446 375h0M484 353h0M480 213h0M435 422h0M510 258h0M537 205h0M373 439h0M500 279h0M498 337h0M604 436h0M518 269h0M413 537h0M492 307h0M569 360h0M516 318h0M336 167h0M466 328h0M498 266h0M575 379h0M443 339h0M453 356h0M388 352h0M424 481h0M455 329h0M568 246h0M217 190h0M561 215h0M525 292h0M302 82h0M526 319h0M376 362h0M141 136h0M619 611h0M557 262h0M528 252h0M522 252h0M785 275h0M790 56h0M309 104h0M868 107h0M505 305h0M759 7h0M369 276h0M564 413h0M520 284h0M421 172h0M627 372h0M455 156h0M882 322h0M307 71h0M641 298h0M539 251h0M555 305h0M672 495h0M617 210h0M830 294h0M499 296h0M518 294h0M429 396h0M516 275h0M490 286h0M437 373h0M465 277h0M443 346h0M553 309h0M527 112h0M472 299h0M422 337h0M527 128h0M745 563h0M533 362h0M452 151h0M526 270h0M585 350h0M613 332h0M499 253h0M438 427h0M738 332h0M627 473h0M466 267h0M475 441h0M927 404h0M551 539h0M513 377h0M364 316h0M499 360h0M669 399h0M594 524h0M598 296h0M121 358h0M126 275h0M436 358h0M621 612h0M497 358h0M309 257h0M589 253h0M643 155h0M664 450h0M449 324h0M850 522h0M375 414h0M479 331h0M557 438h0M664 310h0M809 402h0M586 486h0M590 350h0M560 381h0M362 274h0M511 316h0M462 328h0M324 250h0M481 477h0M449 327h0M588 398h0M499 339h0M491 300h0M381 562h0M567 315h0M503 340h0M405 369h0M590 87h0M656 260h0M380 177h0M494 321h0M574 224h0M808 522h0M508 258h0M472 181h0M436 485h0M502 251h0M446 145h0M572 212h0M328 517h0M517 279h0M580 341h0M500 396h0M506 326h0M351 56h0M729 349h0M280 164h0M473 350h0M377 251h0M368 560h0M548 308h0M473 251h0M160 292h0M576 325h0M314 293h0M862 142h0M522 312h0M631 341h0M207 146h0M518 271h0M340 384h0M437 295h0M530 283h0M406 268h0M458 268h0M84 410h0M545 515h0M594 394h0M469 191h0M442 264h0M651 428h0M211 299h0M341 319h0M516 337h0M501 197h0M467 296h0M239 440h0M611 504h0M565 12h0M405 315h0M535 264h0M460 288h0M474 264h0M391 302h0M493 337h0M499 250h0M486 251h0M477 351h0M308 231h0M417 234h0M437 310h0M338 354h0M429 365h0M572 307h0M421 339h0M259 109h0M413 333h0M364 550h0M394 275h0M701 394h0M566 328h0M477 184h0M120 330h0M490 30h0M617 61h0M669 291h0M502 271h0M527 287h0M508 432h0M316 311h0M164 265h0M352 277h0M597 296h0M502 379h0M468 342h0M497 635h0M489 245h0M435 309h0M350 348h0M474 462h0M488 195h0M435 124h0M546 171h0M411 157h0M462 320h0M526 385h0M578 58h0M685 347h0M432 277h0M462 330h0M377 178h0M480 271h0M286 550h0M438 307h0M800 583h0M468 255h0M118 266h0M470 305h0M585 263h0M483 397h0M386 288h0M440 352h0M495 270h0M356 261h0M457 332h0M573 72h0M554 332h0M530 313h0M442 397h0M478 261h0M528 348h0M477 303h0M454 374h0M330 403h0M562 273h0M374 177h0M539 504h0M563 439h0M436 217h0M555 322h0M497 278h0M515 333h0M481 321h0M850 190h0M561 314h0M860 199h0M504 360h0M202 275h0M415 269h0M390 331h0M567 267h0M427 373h0M552 327h0M403 50h0M319 593h0M104 203h0M582 196h0M380 236h0M519 310h0M546 313h0M508 330h0M619 427h0M428 405h0M529 318h0M334 345h0M374 209h0M503 277h0M479 321h0M442 128h0M593 385h0M443 40h0M497 164h0M297 87h0M476 393h0M306 353h0M590 297h0M534 213h0M480 297h0M397 144h0M298 208h0M779 414h0M599 330h0M605 112h0M550 241h0M278 105h0M614 370h0M195 271h0M476 287h0M688 237h0M598 173h0M514 208h0M497 234h0M463 363h0M616 494h0M444 220h0M515 303h0M445 243h0M477 275h0M430 355h0M360 161h0M101 149h0M510 362h0M672 445h0M787 434h0M813 148h0M478 258h0M463 314h0M624 421h0M574 256h0M556 334h0M471 367h0M316 138h0M418 318h0M403 323h0M533 284h0M466 353h0M552 498h0M470 316h0M477 259h0M428 351h0M162 285h0M302 196h0M512 390h0M540 372h0M689 574h0M466 296h0M486 310h0M501 277h0M309 281h0M444 159h0M507 312h0M484 346h0M522 265h0M542 261h0M455 351h0M136 301h0M466 330h0M653 37h0M489 215h0M486 244h0M718 333h0M467 418h0M477 303h0M306 44h0M575 303h0M584 243h0M571 354h0M435 227h0M275 521h0M374 319h0M471 296h0M230 211h0M535 359h0M541 185h0M522 329h0M517 395h0M487 294h0M642 28h0M322 412h0M546 542h0M402 332h0M513 364h0M517 303h0M388 246h0M486 390h0M587 324h0M534 328h0M325 396h0M378 530h0M544 369h0M330 288h0M495 412h0M486 181h0M605 314h0M502 503h0M745 156h0M545 303h0M575 302h0M534 271h0M473 284h0M539 447h0M510 293h0M440 320h0M576 341h0M564 399h0M894 419h0M682 350h0M507 272h0M501 276h0M444 308h0M378 214h0M391 283h0M477 184h0M524 345h0M467 284h0M529 274h0M425 396h0M578 224h0M531 302h0M593 334h0M519 201h0M136 291h0M501 338h0M896 206h0M565 315h0M524 297h0M408 409h0M519 191h0M483 267h0M518 336h0M573 340h0M538 266h0M496 274h0M719 430h0M496 289h0M565 344h0M387 519h0M479 121h0M438 344h0M556 325h0M88 149h0M502 315h0M122 488h0M457 227h0M520 422h0M524 299h0M316 218h0M371 184h0M597 152h0M733 446h0M728 237h0M521 284h0M458 313h0M519 324h0M532 301h0M559 374h0M503 184h0M424 239h0M554 273h0M400 269h0M585 185h0M526 309h0M550 348h0M475 274h0M469 315h0M492 222h0M689 412h0M501 272h0M582 279h0M562 243h0M450 330h0M432 321h0M570 376h0M498 404h0M242 211h0M405 327h0M432 303h0M425 166h0M669 235h0M448 523h0M432 315h0M507 310h0M477 124h0M421 329h0M399 476h0M322 378h0M399 344h0M485 309h0M533 325h0M461 451h0M427 268h0M466 276h0M574 317h0M526 286h0M591 378h0M486 277h0M510 255h0M421 285h0M655 330h0M510 366h0M683 28h0M347 590h0M604 152h0M458 287h0M530 179h0M164 218h0M508 287h0M497 301h0M286 322h0M544 338h0M459 283h0M942 387h0M532 545h0M537 217h0M497 298h0M460 282h0M504 396h0M510 378h0M241 195h0M455 243h0M443 271h0M503 279h0M927 309h0M428 241h0M493 300h0M536 331h0M467 294h0M528 36h0M583 255h0M313 170h0M376 503h0M421 229h0M691 261h0M396 302h0M891 335h0M476 311h0M433 280h0M577 172h0M516 299h0M455 252h0M566 127h0M450 296h0M614 283h0M482 371h0M263 278h0M230 300h0M565 382h0M624 386h0M473 289h0M426 324h0M405 575h0M603 357h0M406 326h0M667 374h0M488 346h0M422 325h0M559 328h0M385 404h0M462 320h0M411 287h0M634 616h0M476 231h0M526 321h0M447 297h0M622 4h0M460 306h0M418 271h0M548 320h0M456 331h0M572 376h0M310 193h0M355 288h0M461 286h0M316 247h0M520 334h0M507 213h0M510 255h0M437 309h0M794 236h0M500 357h0M536 343h0M430 269h0M458 528h0M511 321h0M443 302h0M529 320h0M495 340h0M544 394h0M72 342h0M456 335h0M452 301h0M461 261h0M391 384h0M521 312h0M545 299h0M286 298h0M467 293h0M590 284h0M528 310h0M489 305h0M495 345h0M219 342h0M512 307h0M665 637h0M464 298h0M404 431h0M324 159h0M513 314h0M590 276h0M498 266h0M400 244h0M445 184h0M603 167h0M628 82h0M716 207h0M475 293h0M479 288h0M616 378h0M410 157h0M448 284h0M523 300h0M307 62h0M437 229h0M566 150h0M455 381h0M418 255h0M495 259h0M322 262h0M414 370h0M471 308h0M576 338h0M496 374h0M487 324h0M524 266h0M494 315h0M387 223h0M500 204h0M521 348h0M592 381h0M460 267h0M718 534h0M416 457h0M509 344h0M669 167h0M457 300h0M409 114h0M485 340h0M553 397h0M485 158h0M243 71h0M582 264h0M544 354h0M395 379h0M428 344h0M595 292h0M572 367h0M467 305h0M500 364h0M600 402h0M662 310h0M534 315h0M256 416h0M208 246h0M636 122h0M176 332h0M465 320h0M443 362h0M578 263h0M505 309h0M562 316h0M313 204h0M506 264h0M602 292h0M512 352h0M876 191h0M463 310h0M591 345h0M508 305h0M506 618h0M615 425h0M745 195h0M432 224h0M490 434h0M504 263h0M345 279h0M414 347h0M644 502h0M508 283h0M393 374h0M410 144h0M419 624h0M474 301h0M471 328h0M519 355h0M304 39h0M488 265h0M501 330h0M782 466h0M452 440h0M399 123h0M528 214h0M361 297h0M640 466h0M666 254h0M444 353h0M468 334h0M513 336h0M546 234h0M539 276h0M488 339h0M517 214h0M424 309h0M572 350h0M380 388h0M421 326h0M578 222h0M487 358h0M436 334h0M511 325h0M366 105h0M521 210h0M455 312h0M531 200h0M408 381h0M471 318h0M473 317h0M188 176h0M391 346h0M550 332h0M209 75h0M442 307h0M666 87h0M448 289h0M235 183h0M537 344h0M360 363h0M380 202h0M576 561h0M550 626h0M832 493h0M471 337h0M500 302h0M437 358h0M539 259h0M633 218h0M452 353h0M791 147h0M425 490h0M231 396h0M421 305h0M584 388h0M264 353h0M668 56h0M400 250h0M329 237h0M343 294h0M506 334h0M629 294h0M639 267h0M519 330h0M653 257h0M416 309h0M507 248h0M493 408h0M492 297h0M320 340h0M393 291h0M500 318h0M512 162h0M496 221h0M532 379h0M519 274h0M480 336h0M364 115h0M522 385h0M270 493h0M406 540h0M468 324h0M506 320h0M477 339h0M671 537h0M561 312h0M637 231h0M571 186h0M508 343h0M378 619h0M451 282h0M482 288h0M539 405h0M653 369h0M575 378h0M504 346h0M440 143h0M541 291h0M347 276h0M870 169h0M748 436h0M539 495h0M520 326h0M548 346h0M543 280h0M466 257h0M508 410h0M465 399h0M394 258h0M524 284h0M576 257h0M620 342h0M536 283h0M464 159h0M427 202h0M463 320h0M557 294h0M404 380h0M401 379h0M272 442h0M385 139h0M615 320h0M572 382h0M465 283h0M79 188h0M371 24h0M514 330h0M593 312h0M507 329h0M279 282h0M448 354h0M517 295h0M513 286h0M700 302h0M480 333h0M536 504h0M412 218h0M548 337h0M510 261h0M901 267h0M431 340h0M532 343h0M567 147h0M416 553h0M506 424h0M437 371h0M433 372h0M549 616h0M361 479h0M430 322h0M459 316h0M729 285h0M650 465h0M328 414h0M538 297h0M557 271h0M466 362h0M153 160h0M303 598h0M551 280h0M484 411h0M464 268h0M610 409h0M329 405h0M504 231h0M456 370h0M611 318h0M595 230h0M452 264h0M498 299h0M513 329h0M415 625h0M548 165h0M540 260h0M279 273h0M337 322h0M479 239h0M453 393h0M543 211h0M442 309h0M684 202h0M515 283h0M501 237h0M200 381h0M422 429h0M456 276h0M547 334h0M565 255h0M521 274h0M492 355h0M518 308h0M533 386h0M232 374h0M536 304h0M446 272h0M463 317h0M631 219h0M560 518h0M541 260h0M420 317h0M601 520h0M520 110h0M535 340h0M654 382h0M572 210h0M318 392h0M612 289h0M481 368h0M468 245h0M341 104h0M818 288h0M441 308h0M591 616h0M539 302h0M534 151h0M480 236h0M273 407h0M539 304h0M736 303h0M477 127h0M507 307h0M499 272h0M385 507h0M592 368h0M477 276h0M572 209h0M472 295h0M696 214h0M502 289h0M587 280h0M247 44h0M567 552h0M244 99h0M497 346h0M494 217h0M827 278h0M642 173h0M418 296h0M374 287h0M647 349h0M167 97h0M458 215h0M464 232h0M401 169h0M505 377h0M613 274h0M497 295h0M283 392h0M557 307h0M519 298h0M442 279h0M574 182h0M665 451h0M538 301h0M436 297h0M795 560h0M472 292h0M474 353h0M461 34h0M460 329h0M411 222h0M487 304h0M180 43h0M753 51h0M287 251h0M357 297h0M609 335h0M465 378h0M764 210h0M443 266h0M517 284h0M867 201h0M430 217h0M487 323h0M496 268h0M477 455h0M406 272h0M737 422h0M476 246h0M502 269h0M585 383h0M571 298h0M555 301h0M441 268h0M388 512h0M435 256h0M555 149h0M593 341h0M385 224h0M473 308h0M451 212h0M500 235h0M535 205h0M536 255h0M450 280h0M425 463h0M407 80h0M681 225h0M523 265h0M384 370h0M558 115h0M520 264h0M383 210h0M718 289h0M170 272h0M159 302h0M665 210h0M519 268h0M266 576h0M818 348h0M524 321h0M525 229h0M592 323h0M504 304h0M525 365h0M639 115h0M475 508h0M407 311h0M482 247h0M406 365h0M372 336h0M480 283h0M456 136h0M484 344h0M491 308h0M490 236h0M468 247h0M423 258h0M487 332h0M829 277h0M633 37h0M460 230h0M577 333h0M449 464h0M523 265h0M548 222h0M441 340h0M335 236h0M342 430h0M734 312h0M425 290h0M503 261h0M576 219h0M234 449h0M445 313h0M482 296h0M378 316h0M431 507h0M436 342h0M365 63h0M202 368h0M479 138h0M829 225h0M577 526h0M596 278h0M561 281h0M405 146h0M447 326h0M595 397h0M502 242h0M473 244h0M512 281h0M691 463h0M407 255h0M213 291h0M494 431h0M584 363h0M427 381h0M729 353h0M583 461h0M449 287h0M499 299h0M561 227h0M365 552h0M153 97h0M494 336h0M457 216h0M431 348h0M641 392h0M552 251h0M434 273h0M442 366h0M452 391h0M490 323h0M434 271h0M496 459h0M175 163h0M499 297h0M537 583h0M468 325h0M576 301h0M470 241h0M657 223h0M487 353h0M546 226h0M675 618h0M515 323h0M529 311h0M564 304h0M381 338h0M483 297h0M497 323h0M520 60h0M201 292h0M450 311h0M666 375h0M498 295h0M748 289h0M569 581h0M502 225h0M406 333h0M300 28h0M466 344h0M843 318h0M383 520h0M501 368h0M506 206h0M682 275h0M484 254h0M631 348h0M494 109h0M478 312h0M524 369h0M560 330h0M225 134h0M499 319h0M599 268h0M626 340h0M319 293h0M677 341h0M572 574h0M464 231h0M558 458h0M363 284h0M515 547h0M495 306h0M453 196h0M447 265h0M288 59h0M511 303h0M330 394h0M498 330h0M544 304h0M373 261h0M626 472h0M511 260h0M421 217h0M529 451h0M426 274h0M377 334h0M422 258h0M316 329h0M572 313h0M469 235h0M811 146h0M758 19h0M346 370h0M512 290h0M112 339h0M454 517h0M439 313h0M448 308h0M539 260h0M461 229h0M413 198h0M439 199h0M538 293h0M422 188h0M588 365h0M691 612h0M517 62h0M448 318h0M589 249h0M408 313h0M656 368h0M480 227h0M386 59h0M639 178h0M446 237h0M544 339h0M507 448h0M638 305h0M423 272h0M558 367h0M397 119h0M423 128h0M680 67h0M370 266h0M328 255h0M794 489h0M744 425h0M439 371h0M559 118h0M489 346h0M540 202h0M522 277h0M554 613h0M519 247h0M528 316h0M736 178h0M752 416h0M486 294h0M628 497h0M632 495h0M69 298h0M486 441h0M755 288h0M461 228h0M343 526h0M476 284h0M456 290h0M459 304h0M459 365h0M467 195h0M500 344h0M382 239h0M506 194h0M549 346h0M491 294h0M536 164h0M485 441h0M464 349h0M501 297h0M483 320h0M504 250h0M251 208h0M554 60h0M613 386h0M401 299h0M454 268h0M431 329h0M733 508h0M939 399h0M519 298h0M443 254h0M53 243h0M365 331h0M465 162h0M330 286h0M483 350h0M450 272h0M387 191h0M504 316h0M332 313h0M659 518h0M505 117h0M490 308h0M470 438h0M653 286h0M372 604h0M490 321h0M549 221h0M419 385h0M554 293h0M466 350h0M384 226h0M537 304h0M222 220h0M509 221h0M394 269h0M341 420h0M422 298h0M519 327h0M581 320h0M512 322h0M517 541h0M502 263h0M432 319h0M452 201h0M453 379h0M587 441h0M417 280h0M318 194h0M390 120h0M516 217h0M454 333h0M554 158h0M501 397h0M594 631h0M438 155h0M558 420h0M472 202h0M391 62h0M465 634h0M517 295h0M844 425h0M579 278h0M493 349h0M567 278h0M340 335h0M185 551h0M459 373h0M464 210h0M544 317h0M591 500h0M515 330h0M480 278h0M515 280h0M425 287h0M476 317h0M521 426h0M193 324h0M679 607h0M512 272h0M586 135h0M759 421h0M413 77h0M905 415h0M569 338h0M574 292h0M690 618h0M449 324h0M498 280h0M546 262h0M554 305h0M867 126h0M561 482h0M509 330h0M470 490h0M458 448h0M483 364h0M466 254h0M445 298h0M522 79h0M381 259h0M290 302h0M581 356h0M440 325h0M775 414h0M525 359h0M545 208h0M480 408h0M452 293h0M486 224h0M421 182h0M515 522h0M481 204h0M512 221h0M518 368h0M430 193h0M532 273h0M524 183h0M470 329h0M456 76h0M350 357h0M339 134h0M575 369h0M532 288h0M540 573h0M728 318h0M311 324h0M310 249h0M580 370h0M489 403h0M459 459h0M532 366h0M373 237h0M455 354h0M423 405h0M491 310h0M520 284h0M660 422h0M510 219h0M439 310h0M509 308h0M782 403h0M440 235h0M607 73h0M619 234h0M477 254h0M678 82h0M525 343h0M406 254h0M469 214h0M502 401h0M535 319h0M604 356h0M416 329h0M379 103h0M833 461h0M517 315h0M356 362h0M557 295h0M443 148h0M848 352h0M507 317h0M489 298h0M403 373h0M468 326h0M577 79h0M492 278h0M551 274h0M485 335h0M540 337h0M473 98h0M482 320h0M483 268h0M660 420h0M474 310h0M488 285h0M707 496h0M467 232h0M177 521h0M466 242h0M477 193h0M543 394h0M592 302h0M487 300h0M491 308h0M659 463h0M449 181h0M390 170h0M741 59h0M306 295h0M696 131h0M434 447h0M557 308h0M469 404h0M477 414h0M567 385h0M490 387h0M427 266h0M520 326h0M512 106h0M487 304h0M291 468h0M355 321h0M898 99h0M315 560h0M525 307h0M704 426h0M520 329h0M463 172h0M472 230h0M534 180h0M466 341h0M497 349h0M494 294h0M378 417h0M213 182h0M404 240h0M260 180h0M471 252h0M312 528h0M536 318h0M572 489h0M614 338h0M566 290h0M496 255h0M522 404h0M615 273h0M528 359h0M759 296h0M439 308h0M512 296h0M504 270h0M472 465h0M564 441h0M196 318h0M439 309h0M576 336h0M525 255h0M367 358h0M490 309h0M552 245h0M538 338h0M539 320h0M438 132h0M540 318h0M875 506h0M497 331h0M431 245h0M515 318h0M378 131h0M416 292h0M567 568h0M464 462h0M413 56h0M481 251h0M569 244h0M617 344h0M457 168h0M363 358h0M515 296h0M501 293h0M365 426h0M313 564h0M328 357h0M476 331h0M317 404h0M390 344h0M510 314h0M455 281h0M306 594h0M524 412h0M596 306h0M407 406h0M640 553h0M521 229h0M481 272h0M411 359h0M393 557h0M516 383h0M626 411h0M521 299h0M531 286h0M493 302h0M439 292h0M531 269h0M441 369h0M511 131h0M532 301h0M260 501h0M662 401h0M485 312h0M482 344h0M456 512h0M423 179h0M477 282h0M541 337h0M479 325h0M453 478h0M666 440h0M534 581h0M539 285h0M407 305h0M605 291h0M92 449h0M580 301h0M389 343h0M613 312h0M531 284h0M526 221h0M778 482h0M758 147h0M511 237h0M431 339h0M451 339h0M327 98h0M514 361h0M433 223h0M442 327h0M584 268h0M469 313h0M592 268h0M578 214h0M425 384h0M499 269h0M487 348h0M579 352h0M466 322h0M454 391h0M471 493h0M824 269h0M568 300h0M412 414h0M369 180h0M577 382h0M540 231h0M553 286h0M418 206h0M215 485h0M598 329h0M487 250h0M647 233h0M192 153h0M451 370h0M550 338h0M499 81h0M549 260h0M925 390h0M680 398h0M517 227h0M550 385h0M668 224h0M530 478h0M536 356h0M135 206h0M549 302h0M314 303h0M558 524h0M574 238h0M547 333h0M511 235h0M475 335h0M498 500h0M510 340h0M548 84h0M465 357h0M515 301h0M328 268h0M565 294h0M478 14h0M590 327h0M258 358h0M429 327h0M409 263h0M463 305h0M535 426h0M519 345h0M503 374h0M448 342h0M469 302h0M596 132h0M469 269h0M387 347h0M763 116h0M463 325h0M523 224h0M436 366h0M518 313h0M669 105h0M345 192h0M472 279h0M653 299h0M432 300h0M298 201h0M540 460h0M524 274h0M519 347h0M560 327h0M248 456h0M510 208h0M591 318h0M505 425h0M528 292h0M442 402h0M336 293h0M530 323h0M186 165h0M526 101h0M451 540h0M433 232h0M800 133h0M645 243h0M661 331h0M457 198h0M357 369h0M436 203h0M544 316h0M714 121h0M555 415h0M483 280h0M557 305h0M452 212h0M518 266h0M460 355h0M468 291h0M403 258h0M502 280h0M450 278h0M514 177h0M489 376h0M516 246h0M475 307h0M514 341h0M440 308h0M547 175h0M418 338h0M482 309h0M112 204h0M183 452h0M543 186h0M368 336h0M475 267h0M447 303h0M521 169h0M407 285h0M608 281h0M342 345h0M472 332h0M505 360h0M458 355h0M454 364h0M638 356h0M489 321h0M461 233h0M423 341h0M498 312h0M415 273h0M452 496h0M418 358h0M427 272h0M458 354h0M459 235h0M335 122h0M129 322h0M493 273h0M471 374h0M744 615h0M423 242h0M651 418h0M479 290h0M485 371h0M439 404h0M359 283h0M726 261h0M598 279h0M409 283h0M532 328h0M437 444h0M515 324h0M541 89h0M450 258h0M576 160h0M553 264h0M450 293h0M552 278h0M285 305h0M561 199h0M500 295h0M466 170h0M586 285h0M339 311h0M453 27h0M484 306h0M388 174h0M496 278h0M208 17h0M544 382h0M591 316h0M374 387h0M348 486h0M717 608h0M286 302h0M349 165h0M418 250h0M627 288h0M543 320h0M656 111h0M235 200h0M501 246h0M521 310h0M553 288h0M555 260h0M503 340h0M451 346h0M593 394h0M503 358h0M485 356h0M725 383h0M692 565h0M474 266h0M251 159h0M712 384h0M372 289h0M613 241h0M538 340h0M477 356h0M513 286h0M541 365h0M341 308h0M514 366h0M685 546h0M277 459h0M436 264h0M431 355h0M538 244h0M271 487h0M566 307h0M504 482h0M524 132h0M494 246h0M390 304h0M283 223h0M329 371h0M476 263h0M482 261h0M707 384h0M408 251h0M446 329h0M635 269h0M383 471h0M74 318h0M482 300h0M459 236h0M579 337h0M697 273h0M406 315h0M322 214h0M496 373h0M560 169h0M619 343h0M502 343h0M326 280h0M204 513h0M405 436h0M620 277h0M468 271h0M586 386h0M261 229h0M629 390h0M533 323h0M497 276h0M417 242h0M494 292h0M606 236h0M233 279h0M58 235h0M600 409h0M642 284h0M471 340h0M557 389h0M451 389h0M432 372h0M470 381h0M550 344h0M589 348h0M459 345h0M437 337h0M408 153h0M512 300h0M579 285h0M317 211h0M529 64h0M471 598h0M479 277h0M186 75h0M193 225h0M490 165h0M315 138h0M390 336h0M338 235h0M523 435h0M286 568h0M610 304h0M331 281h0M470 93h0M578 339h0M241 457h0M548 247h0M267 171h0M478 236h0M447 190h0M731 546h0M548 320h0M512 302h0M369 219h0M527 230h0M622 268h0M426 366h0M269 110h0M438 316h0M530 361h0M211 258h0M698 274h0M739 197h0M502 312h0M560 221h0M430 258h0M430 276h0M456 249h0M540 391h0M536 319h0M516 469h0M498 283h0M398 344h0M395 281h0M598 279h0M640 206h0M386 98h0M375 321h0M537 260h0M534 317h0M281 556h0M505 283h0M505 286h0M906 259h0M503 478h0M471 421h0M363 434h0M538 311h0M383 292h0M586 384h0M408 256h0M657 535h0M543 272h0M530 375h0M427 294h0M795 279h0M511 399h0M758 438h0M545 343h0M749 453h0M499 311h0M806 469h0M521 397h0M463 402h0M594 92h0M452 65h0M604 449h0M510 392h0M462 370h0M620 201h0M347 196h0M480 308h0M313 281h0M607 331h0M520 358h0M607 374h0M453 324h0M386 507h0M53 254h0M523 361h0M623 169h0M613 231h0M475 6h0M488 380h0M324 347h0M447 359h0M493 291h0M376 164h0M349 77h0M425 359h0M763 91h0M347 524h0M98 127h0M668 367h0M444 346h0M473 332h0M541 347h0M505 224h0M418 616h0M472 370h0M474 341h0M458 280h0M377 168h0M564 318h0M466 302h0M596 92h0M481 274h0M501 344h0M696 490h0M460 381h0M469 115h0M414 303h0M597 342h0M548 229h0M503 344h0M398 593h0M498 275h0M477 355h0M527 350h0M557 237h0M491 406h0M575 235h0M527 338h0M580 307h0M471 273h0M425 326h0M515 366h0M550 298h0M794 181h0M539 531h0M605 433h0M309 324h0M518 326h0M515 277h0M425 238h0M390 347h0M707 198h0M310 609h0M568 254h0M479 287h0M438 307h0M614 457h0M831 206h0M447 530h0M512 430h0M430 320h0M342 209h0M462 367h0M743 344h0M573 232h0M501 264h0M605 229h0M653 288h0M547 245h0M429 203h0M423 345h0M571 162h0M537 282h0M116 167h0M712 446h0M551 441h0M498 273h0M546 456h0M436 293h0M468 366h0M423 340h0M539 324h0M482 260h0M445 211h0M542 343h0M505 310h0M502 340h0M471 273h0M492 290h0M454 296h0M412 342h0M475 366h0M646 203h0M474 322h0M534 336h0M758 261h0M346 374h0M523 305h0M167 513h0M778 360h0M524 399h0M496 235h0M286 421h0M421 255h0M540 286h0M541 286h0M450 260h0M506 303h0M404 35h0M492 247h0M454 268h0M477 274h0M422 375h0M652 331h0M502 329h0M468 616h0M192 330h0M146 237h0M769 101h0M492 235h0M485 295h0M405 401h0M488 320h0M368 501h0M446 300h0M598 286h0M642 312h0M536 268h0M336 307h0M419 346h0M446 361h0M355 285h0M451 347h0M399 450h0M524 285h0M543 331h0M568 316h0M486 140h0M628 297h0M409 90h0M523 261h0M546 306h0M396 185h0M457 323h0M510 333h0M497 291h0M498 312h0M508 349h0M358 314h0M166 254h0M489 317h0M531 208h0M500 316h0M503 313h0M489 377h0M486 293h0M513 300h0M584 443h0M558 286h0M309 503h0M526 254h0M255 525h0M349 136h0M648 592h0M521 365h0M716 442h0M784 177h0M522 252h0M149 265h0M477 388h0M367 129h0M173 326h0M500 308h0M533 335h0M479 261h0M352 289h0M553 280h0M464 331h0M393 268h0M290 210h0M355 142h0M751 481h0M511 234h0M670 285h0M326 492h0M521 325h0M459 208h0M514 387h0M484 281h0M670 479h0M405 187h0M172 365h0M695 67h0M381 81h0M498 288h0M431 252h0M526 260h0M437 263h0M532 245h0M192 376h0M568 315h0M351 142h0M483 258h0M444 285h0M494 349h0M399 583h0M424 291h0M525 152h0M503 266h0M549 284h0M561 200h0M500 276h0M615 210h0M426 301h0M586 476h0M584 314h0M518 264h0M489 350h0M563 533h0M517 56h0M763 38h0M778 122h0M453 374h0M429 207h0M428 606h0M522 280h0M505 374h0M484 262h0M462 329h0M467 195h0M502 267h0M468 248h0M521 340h0M497 294h0M461 292h0M625 52h0M480 275h0M544 279h0M550 290h0M328 69h0M467 402h0M576 267h0M507 360h0M531 383h0M446 263h0M495 69h0M594 331h0M480 248h0M488 293h0M515 337h0M605 300h0M47 238h0M305 637h0M510 333h0M424 302h0M337 292h0M530 194h0M516 322h0M308 382h0M419 293h0M500 320h0M543 451h0M463 236h0M575 491h0M488 321h0M191 246h0M417 316h0M520 312h0M706 507h0M406 346h0M403 295h0M537 247h0M521 280h0M767 352h0M444 259h0M414 296h0M550 418h0M525 303h0M344 409h0M510 348h0M463 326h0M453 356h0M631 340h0M586 142h0M441 219h0M773 469h0M504 472h0M469 260h0M474 232h0M414 277h0M462 117h0M454 458h0M503 331h0M427 229h0M547 269h0M478 309h0M509 162h0M520 423h0M626 249h0M376 286h0M271 559h0M398 460h0M440 192h0M517 291h0M540 203h0M586 409h0M400 160h0M783 384h0M534 260h0M505 634h0M494 264h0M455 342h0M632 325h0M823 201h0M217 11h0M436 341h0M490 279h0M676 632h0M403 358h0M302 296h0M454 115h0M391 261h0M255 208h0M443 339h0M383 309h0M506 276h0M474 255h0M476 351h0M503 256h0M500 415h0M554 287h0M825 325h0M433 317h0M386 355h0M500 306h0M530 284h0M517 244h0M499 332h0M401 295h0M878 214h0M565 426h0M532 370h0M293 242h0M268 0h0M567 227h0M461 263h0M536 311h0M527 322h0M652 29h0M477 315h0M484 422h0M522 219h0M601 435h0M673 460h0M496 482h0M848 161h0M590 168h0M473 303h0M566 503h0M373 298h0M471 290h0M425 189h0M174 421h0M477 493h0M193 442h0M442 575h0M503 267h0M423 288h0M555 514h0M538 339h0M580 90h0M569 407h0M582 466h0M526 325h0M365 279h0M542 6h0M504 268h0M493 271h0M465 318h0M432 300h0M479 408h0M407 526h0M485 342h0M317 318h0M565 346h0M326 125h0M469 160h0M293 386h0M488 195h0M531 220h0M478 279h0M531 329h0M588 220h0M507 173h0M430 270h0M505 340h0M560 336h0M492 339h0M731 75h0M520 330h0M370 413h0M311 77h0M485 275h0M242 79h0M554 358h0M462 201h0M775 225h0M418 387h0M749 467h0M328 213h0M309 272h0M493 177h0M729 380h0M565 91h0M691 107h0M462 316h0M502 283h0M511 258h0M561 261h0M83 466h0M452 339h0M343 61h0M411 201h0M575 196h0M517 140h0M634 523h0M154 319h0M605 45h0M577 150h0M608 205h0M579 229h0M386 276h0M475 317h0M450 296h0M361 573h0M397 141h0M456 264h0M390 298h0M553 290h0M488 323h0M473 328h0M557 173h0M479 308h0M406 273h0M470 316h0M429 254h0M576 293h0M490 234h0M454 264h0M587 357h0M568 326h0M452 368h0M431 364h0M471 307h0M545 277h0M398 130h0M500 395h0M523 354h0M503 240h0M420 299h0M325 342h0M452 208h0M501 267h0M493 295h0M333 31h0M790 374h0M565 268h0M656 469h0M604 319h0M463 124h0M564 267h0M197 597h0M579 270h0M578 343h0M515 215h0M203 590h0M536 326h0M418 159h0M477 300h0M504 259h0M471 287h0M607 297h0M320 315h0M378 307h0" stroke="#ffffff" stroke-opacity=".45" stroke-width="2.5" stroke-linecap="round"/>
<path d="M214 400h0M437 536h0M248 442h0M682 127h0M440 523h0M377 101h0M598 389h0M786 259h0M310 392h0M874 179h0M388 473h0M777 367h0M774 584h0M472 9h0M786 632h0M681 353h0M291 385h0M363 4h0M907 270h0M253 412h0M676 578h0M675 429h0M218 240h0M86 216h0M587 169h0M103 360h0M397 302h0M198 416h0M429 479h0M665 174h0M695 102h0M197 155h0M729 610h0M678 231h0M710 569h0M755 478h0M364 71h0M561 472h0M467 455h0M317 544h0M27 140h0M503 98h0M501 191h0M636 504h0M402 572h0M140 254h0M435 33h0M477 190h0M918 219h0M401 22h0M149 337h0M345 369h0M244 62h0M420 632h0M464 86h0M383 246h0M485 618h0M108 302h0M840 28h0M680 39h0M54 202h0M471 289h0M128 461h0M876 59h0M806 409h0M883 505h0M67 446h0M795 90h0M546 434h0M4 540h0M73 419h0M865 632h0M147 66h0M600 197h0" stroke="#e0e8ff" stroke-opacity=".6" stroke-width="3" stroke-linecap="round"/>
<path d="M745 297h0M427 457h0M344 564h0M154 14h0M121 96h0M433 17h0M511 305h0M80 173h0M765 454h0M67 595h0M953 247h0M605 583h0M274 31h0M289 294h0M484 131h0M399 425h0M33 39h0M348 214h0M878 405h0M476 5h0M127 294h0M137 320h0M220 393h0M455 86h0M617 78h0M254 410h0M597 49h0M32 606h0M797 166h0M916 165h0M443 105h0M539 144h0M38 461h0M404 64h0M642 568h0M562 521h0M276 89h0M192 479h0M562 136h0M834 292h0M827 408h0M429 102h0M165 601h0M138 482h0M889 140h0M938 36h0M498 537h0M341 595h0M51 330h0M262 346h0M104 143h0M787 210h0M541 317h0M491 70h0M239 28h0M692 240h0M823 431h0M174 73h0M469 120h0M226 166h0M494 284h0M113 271h0M156 283h0M555 354h0M109 115h0M668 470h0M657 347h0M836 359h0M770 72h0M379 493h0M548 421h0M947 255h0M581 471h0M895 491h0M293 348h0M377 265h0M680 90h0M537 98h0M526 137h0M794 78h0M841 367h0M499 427h0M204 435h0M723 319h0M323 203h0M882 437h0M447 256h0M448 305h0M221 566h0M636 156h0M589 106h0M635 557h0M139 513h0M822 234h0M645 135h0M417 523h0M392 614h0M74 372h0M838 212h0M662 392h0M945 636h0M793 457h0M737 56h0M35 626h0M643 35h0M858 300h0M708 225h0M464 266h0M364 453h0M362 531h0M481 574h0M168 385h0M703 460h0M552 288h0M619 319h0M939 103h0M581 278h0M829 470h0M83 544h0M249 104h0M875 141h0M444 525h0M565 103h0M603 359h0M8 265h0M798 64h0M349 422h0M434 321h0M60 376h0M413 150h0M896 282h0M345 20h0M151 179h0M422 634h0M917 102h0M727 477h0M324 266h0M349 286h0M475 582h0M930 133h0M418 430h0M681 40h0M295 158h0M416 297h0M180 606h0M602 382h0M543 208h0M362 201h0M429 539h0M244 606h0M174 318h0M192 348h0M660 294h0M576 63h0M840 321h0M620 364h0M645 581h0M638 302h0M317 603h0M618 112h0M680 476h0M536 500h0M17 266h0M686 516h0M774 550h0M865 601h0M64 624h0M497 443h0M946 494h0M713 448h0M687 407h0M958 360h0M760 74h0M330 182h0M625 493h0M744 281h0M830 236h0M421 294h0M414 37h0M87 232h0M827 41h0M798 142h0M592 454h0M358 486h0M912 23h0M902 378h0M858 232h0M682 549h0M906 586h0M7 283h0M515 375h0M670 556h0M355 447h0M686 482h0M667 93h0M548 84h0M401 451h0M221 362h0M840 58h0M171 362h0M863 605h0M821 256h0M342 611h0M190 32h0M324 66h0M66 439h0M272 430h0M585 564h0M315 518h0M646 241h0M890 41h0M374 285h0M657 350h0M709 397h0M952 398h0M244 328h0M270 67h0M514 629h0M139 620h0M832 302h0M362 494h0M839 41h0M12 270h0" stroke="#ffffff" stroke-opacity=".6" stroke-width="3" stroke-linecap="round"/>
<path d="M699 131h0M575 154h0M463 301h0M424 343h0M460 276h0M792 179h0M495 354h0M574 325h0M424 215h0M565 322h0M589 433h0M169 467h0M589 204h0M496 318h0M469 317h0M523 300h0M198 486h0M411 354h0M447 441h0M369 338h0M511 415h0M895 391h0M414 290h0M472 276h0M145 179h0M367 236h0M436 347h0M410 300h0M521 304h0M340 577h0M607 315h0M499 231h0M558 622h0M449 302h0M475 192h0M494 488h0M358 379h0M555 165h0M429 317h0M520 253h0M454 347h0M417 307h0M732 247h0M625 261h0M548 304h0M171 565h0M484 304h0M265 529h0M470 253h0M744 599h0M687 476h0M557 253h0M446 308h0M531 291h0M423 289h0M473 170h0M576 314h0M533 337h0M362 285h0M448 406h0M427 361h0M502 363h0M566 418h0M555 369h0M515 286h0M481 350h0M473 247h0M447 278h0M559 267h0M534 299h0M264 386h0M842 217h0M554 288h0M528 247h0M453 307h0M563 295h0M472 368h0M366 464h0M426 238h0M588 331h0M487 306h0M475 328h0M631 22h0M360 82h0M572 185h0M596 260h0M436 56h0M516 320h0M383 241h0M531 531h0M420 336h0M582 107h0M484 224h0M334 410h0M436 308h0M449 310h0M540 361h0M381 590h0M105 537h0M475 281h0M460 317h0M405 202h0M345 343h0M373 340h0M519 207h0M520 262h0M353 190h0M528 217h0M582 311h0M435 331h0M360 311h0M761 188h0M472 383h0M372 88h0M425 254h0M472 132h0M613 317h0M511 193h0M392 389h0M483 306h0M474 394h0M526 289h0M538 312h0M466 267h0M658 32h0M480 336h0M564 326h0M283 506h0M397 334h0M244 595h0M383 418h0M669 266h0M478 279h0M470 322h0M538 373h0M469 381h0M459 281h0M271 420h0M720 434h0M372 337h0M450 434h0M416 259h0M469 400h0M496 265h0M279 100h0M413 159h0M405 288h0M275 234h0M436 328h0M526 354h0M502 362h0M442 265h0M629 192h0M451 323h0M417 269h0M506 332h0M597 248h0M456 248h0M244 478h0M403 304h0M439 313h0M533 179h0M501 336h0M450 288h0M503 277h0M752 356h0M497 328h0M131 167h0M508 288h0M668 178h0M617 288h0M753 328h0M478 251h0M809 72h0M717 107h0M604 393h0M547 350h0M148 84h0M421 148h0M363 202h0M497 283h0M531 309h0M591 345h0M476 325h0M598 253h0M161 250h0M656 185h0M443 229h0M487 224h0M554 284h0M405 300h0M522 369h0M517 17h0M584 293h0M706 384h0M526 322h0M747 230h0M545 353h0M535 487h0M568 400h0M505 460h0M524 309h0M492 280h0M460 293h0M373 328h0M530 320h0M485 615h0M497 344h0M488 197h0M650 293h0M702 532h0M529 341h0M471 192h0M355 238h0M358 409h0M580 257h0M380 373h0M319 320h0M147 189h0M476 257h0M444 239h0M628 454h0M513 299h0M518 302h0M451 262h0M490 351h0M498 298h0M435 234h0M500 325h0M511 293h0M638 465h0M374 438h0M581 496h0M553 91h0M602 270h0M605 374h0M532 278h0M456 443h0M456 272h0M436 147h0M581 283h0M474 316h0M465 369h0M417 377h0M478 259h0M179 376h0M527 312h0M539 605h0M441 327h0M481 421h0M526 275h0M513 212h0M462 304h0M572 460h0M437 286h0M585 267h0M370 422h0M418 218h0M491 334h0M671 228h0M662 313h0M546 352h0M474 288h0M917 283h0M580 286h0M716 142h0M478 312h0M663 284h0M530 277h0M519 293h0M521 141h0M118 421h0M321 92h0M496 389h0M836 172h0M619 138h0M517 307h0M521 276h0M347 331h0M539 228h0M629 182h0M478 306h0M454 297h0M535 365h0M612 540h0M532 193h0M544 355h0M535 465h0M288 210h0M430 270h0M454 334h0M775 188h0M461 410h0M454 266h0M486 408h0M434 410h0M477 304h0M402 414h0M500 554h0M330 110h0M797 300h0M525 274h0M490 333h0M549 340h0M251 378h0M493 443h0M501 298h0M438 345h0M162 146h0M442 568h0M710 243h0M590 262h0M520 295h0M509 312h0M389 164h0M378 159h0M518 315h0M304 268h0M388 378h0M506 295h0M483 336h0M489 301h0M533 317h0M592 264h0M450 343h0M353 452h0M657 361h0M821 520h0M462 271h0M460 312h0M455 307h0M698 350h0M500 300h0M471 324h0M303 344h0M498 292h0M497 323h0M543 266h0M414 305h0M557 87h0M487 291h0M423 361h0M164 40h0M530 309h0M415 283h0M458 237h0M564 238h0M304 346h0M460 366h0M444 350h0M914 261h0M511 396h0M563 221h0M540 458h0M573 362h0M917 373h0M595 309h0M599 350h0M303 465h0M849 51h0M624 228h0M389 210h0M528 358h0M455 353h0M533 332h0M458 345h0M470 314h0M534 201h0M583 452h0M608 319h0M429 324h0M442 299h0M396 11h0M567 534h0M503 248h0M236 284h0M529 358h0M478 74h0M461 233h0M497 280h0M566 239h0M487 251h0M405 630h0M870 219h0M469 250h0M439 315h0M388 239h0M387 463h0M387 257h0M233 386h0M554 318h0M558 510h0M514 324h0M471 374h0M318 178h0M475 292h0M490 334h0M472 362h0M490 338h0M527 334h0M449 355h0M608 396h0M618 96h0M430 181h0M422 210h0M686 394h0M447 150h0M327 363h0M473 537h0M541 148h0M427 385h0M456 327h0M504 334h0M701 231h0M483 332h0M139 494h0M533 262h0M483 334h0M499 288h0M607 326h0M499 319h0M507 342h0M438 134h0M505 366h0M411 190h0M320 485h0M516 273h0M535 279h0M473 339h0M562 294h0M619 243h0M410 106h0M526 288h0M439 269h0M516 343h0M709 343h0M257 317h0M370 97h0M377 224h0M461 79h0M479 286h0M660 344h0M502 370h0M521 259h0M767 96h0M501 336h0M456 236h0M569 284h0M513 501h0M485 278h0M463 286h0M536 451h0M452 403h0M482 457h0M482 336h0M437 368h0M445 296h0M475 260h0M653 204h0M503 296h0M920 193h0M593 235h0M431 221h0M427 327h0M413 463h0M434 194h0M642 443h0M494 265h0M264 393h0M664 368h0M603 351h0M855 229h0M426 368h0M448 302h0M521 629h0M507 313h0M665 86h0M597 378h0M547 254h0M473 532h0M585 185h0M425 401h0M462 273h0M600 273h0M492 317h0M406 419h0M456 321h0M517 327h0M576 299h0M634 314h0M474 306h0M573 320h0M429 322h0M779 516h0M522 255h0M608 158h0M532 265h0M578 272h0M642 414h0M544 242h0M511 269h0M688 241h0M518 269h0M541 309h0M188 266h0M472 363h0M387 353h0M458 82h0M144 281h0M712 220h0M529 333h0M663 330h0M473 276h0M574 267h0M409 113h0M490 221h0M423 368h0M755 520h0M70 430h0M509 245h0M815 221h0M544 269h0M498 316h0M595 294h0M361 135h0M430 340h0M423 215h0M293 331h0M525 390h0M491 306h0M464 313h0M463 338h0M172 418h0M485 417h0M405 352h0M543 249h0M390 307h0M605 454h0M134 72h0M394 584h0M214 613h0M498 214h0M570 519h0M591 308h0M232 244h0M591 507h0M687 252h0M333 242h0M443 301h0M574 329h0M442 354h0M65 346h0M418 394h0M438 294h0M304 146h0M519 205h0M296 402h0M417 295h0M616 291h0M569 249h0M495 303h0M387 477h0M504 362h0M506 306h0M581 229h0M786 615h0M909 227h0M551 351h0M459 311h0M470 337h0M555 383h0M548 312h0M580 264h0M513 214h0M623 303h0M470 583h0M752 477h0M517 311h0M661 389h0M598 323h0M562 285h0M615 538h0M134 288h0M516 268h0M525 352h0M438 444h0M410 304h0M541 110h0M496 278h0M461 195h0M280 345h0M383 240h0M580 343h0M806 604h0M538 281h0M506 345h0M813 562h0M696 214h0M524 182h0M600 193h0M473 294h0M486 303h0M392 253h0M517 325h0M437 319h0M592 278h0M559 332h0M452 365h0M354 462h0M651 336h0M326 507h0M516 296h0M499 285h0M477 286h0M533 309h0M466 306h0M504 220h0M523 194h0M631 276h0M196 135h0M442 318h0M472 410h0M513 335h0M529 289h0M675 209h0M327 456h0M174 407h0M486 322h0M439 310h0M568 321h0M546 301h0M521 256h0M597 197h0M406 342h0M517 279h0M523 320h0M434 273h0M490 342h0M461 406h0M580 300h0M596 326h0M569 235h0M452 444h0M434 362h0M725 612h0M596 405h0M412 410h0M428 351h0M519 439h0M510 387h0M270 349h0M472 296h0M468 341h0M551 124h0M497 286h0M531 444h0M396 198h0M422 125h0M614 439h0M458 322h0M435 315h0M529 239h0M560 200h0M643 628h0M624 346h0M468 267h0M479 265h0M471 363h0M578 322h0M525 328h0M516 154h0M457 262h0M708 514h0M402 237h0M503 248h0M384 404h0M438 141h0M420 381h0M515 378h0M492 275h0M516 316h0M525 249h0M624 473h0M443 256h0M421 207h0M765 579h0M396 204h0M472 286h0M517 298h0M454 335h0M442 166h0M537 147h0M345 72h0M489 331h0M497 299h0M473 284h0M704 83h0M477 288h0M506 307h0M467 368h0M473 287h0M246 545h0M444 316h0M481 259h0M545 286h0M467 487h0M641 224h0M710 420h0M407 168h0M481 312h0M618 404h0M517 529h0M492 370h0M497 272h0M505 382h0M499 296h0M368 97h0M633 329h0M709 432h0M602 480h0M475 370h0M513 229h0M440 344h0M577 265h0M558 379h0M429 237h0M486 313h0M256 601h0M286 560h0M494 362h0M535 300h0M519 354h0M548 322h0M415 357h0M604 147h0M490 382h0M244 67h0M451 297h0M732 282h0M447 337h0M440 496h0M318 203h0M417 450h0M439 248h0M252 516h0M492 321h0M591 304h0M480 286h0M743 101h0M462 338h0M644 73h0M333 408h0M685 579h0M530 101h0M318 360h0M445 257h0M486 398h0M348 422h0M449 286h0M705 111h0M461 203h0M446 280h0M359 312h0M461 327h0M610 185h0M195 125h0M472 239h0M555 362h0M514 338h0M386 314h0M436 335h0M519 288h0M523 337h0M467 272h0M514 306h0M530 326h0M491 263h0M427 266h0M339 273h0M412 322h0M267 312h0M420 223h0M484 531h0M315 474h0M450 326h0M442 277h0M504 312h0M599 589h0M524 274h0M206 487h0M481 309h0M404 121h0M553 291h0M549 361h0M534 300h0M509 317h0M509 281h0M407 302h0M530 329h0M374 272h0M502 223h0M562 259h0" stroke="#ffffff" stroke-opacity=".7" stroke-width="3" stroke-linecap="round"/>
<path d="M414 355h0M546 417h0M150 100h0M563 442h0M639 279h0M548 303h0M549 471h0M430 347h0M215 451h0M537 329h0M494 336h0M430 395h0M873 260h0M457 307h0M393 254h0M571 244h0M615 134h0M609 549h0M494 306h0M741 511h0M555 257h0M656 375h0M228 249h0M540 396h0M109 218h0M723 290h0M456 293h0M570 336h0M577 314h0M459 290h0M362 268h0M630 294h0M523 389h0M430 426h0M461 334h0M506 131h0M402 384h0M460 341h0M348 220h0M583 151h0M518 421h0M660 375h0M794 291h0M510 290h0M175 497h0M292 408h0M418 108h0M446 296h0M607 604h0M373 324h0M509 294h0M458 337h0M651 250h0M537 317h0M456 375h0M513 354h0M415 385h0M369 145h0M223 299h0M721 277h0M496 434h0M485 214h0M510 309h0M489 308h0M490 571h0M304 277h0M232 552h0M451 291h0M477 367h0M693 233h0M541 333h0M388 289h0M141 524h0M662 94h0M613 379h0M464 326h0M522 276h0M553 419h0M551 605h0M462 315h0M537 407h0M109 64h0M455 367h0M561 286h0M480 310h0M493 302h0M274 498h0M623 422h0M907 408h0M603 243h0M452 314h0M510 286h0M204 4h0M496 325h0M580 353h0M476 377h0M314 397h0M525 269h0M525 268h0M537 309h0M538 318h0M666 251h0M475 304h0M309 231h0M438 319h0M921 218h0M424 315h0M441 315h0M483 228h0M511 294h0M740 622h0M631 303h0M500 356h0M433 184h0M545 317h0M679 471h0M516 429h0M568 202h0M491 324h0M525 341h0M505 298h0M430 257h0M552 259h0M416 250h0M537 311h0M585 214h0M483 276h0M392 192h0M486 287h0M327 374h0M777 332h0M547 393h0M417 381h0M492 347h0M486 169h0M507 331h0M534 290h0M417 315h0M330 231h0M520 290h0M509 326h0M458 198h0M491 212h0M714 362h0M454 335h0M243 153h0M813 285h0M428 259h0M506 178h0M518 335h0M335 329h0M573 229h0M730 172h0M633 221h0M401 319h0M192 239h0M402 265h0M500 362h0M543 295h0M465 456h0M447 335h0M314 486h0M565 280h0M447 223h0M239 39h0M462 303h0M146 422h0M447 206h0M503 283h0M503 228h0M370 230h0M421 333h0M361 220h0M612 389h0M497 207h0M523 268h0M412 334h0M554 280h0M488 355h0M140 185h0M386 450h0M488 487h0M471 289h0M630 176h0M371 343h0M482 265h0M428 253h0M434 427h0M474 285h0M555 319h0M387 375h0M402 197h0M447 227h0M472 281h0M557 379h0M500 299h0M475 341h0M497 236h0M452 310h0M554 384h0M612 340h0M501 354h0M604 432h0M678 505h0M828 468h0M477 287h0M727 261h0M493 343h0M496 434h0M624 371h0M435 339h0M306 269h0M555 219h0M469 360h0M840 284h0M916 214h0M425 237h0M539 299h0M522 330h0M374 96h0M514 349h0M233 307h0M490 189h0M721 410h0M629 222h0M457 425h0M610 276h0M487 427h0M495 283h0M810 353h0M166 346h0M82 332h0M319 317h0M492 353h0M449 337h0M712 369h0M577 344h0M128 445h0M601 338h0M488 354h0M467 256h0M510 302h0M585 311h0M575 284h0M480 223h0M620 313h0M382 337h0M473 365h0M591 271h0M726 87h0M469 251h0M370 637h0M404 0h0M518 342h0M573 266h0M115 159h0M580 263h0M490 232h0M348 334h0M545 387h0M518 230h0M475 329h0M440 272h0M310 259h0M778 125h0M764 143h0M558 203h0M472 453h0M521 472h0M545 237h0M153 107h0M452 286h0M660 282h0M389 227h0M612 322h0M445 307h0M418 320h0M657 181h0M501 471h0M533 379h0M517 246h0M504 312h0M504 296h0M499 314h0M543 289h0M460 311h0M787 53h0M459 341h0M367 394h0M682 388h0M473 360h0M403 381h0M549 331h0M315 383h0M434 310h0M871 187h0M637 294h0M486 219h0M705 293h0M514 267h0M477 337h0M508 234h0M370 288h0M730 447h0M308 466h0M751 261h0M191 393h0M530 234h0M384 56h0M266 614h0M598 152h0M454 369h0M729 478h0M504 363h0M511 224h0M710 344h0M563 323h0M380 430h0M333 342h0M435 224h0M409 257h0M505 208h0M558 313h0M329 474h0M477 329h0M576 282h0M410 242h0M715 200h0M364 304h0M314 355h0M521 322h0M737 299h0M502 223h0M592 266h0M335 280h0M493 342h0M510 407h0M482 442h0M444 270h0M478 406h0M338 312h0M363 243h0M488 296h0M499 243h0M570 157h0M519 423h0M523 186h0M299 396h0M485 317h0M462 207h0M507 380h0M496 314h0M458 275h0M461 323h0M517 299h0M808 280h0M536 364h0M586 330h0M521 279h0M499 309h0M504 358h0M548 402h0M406 301h0M416 170h0M597 479h0M560 327h0M373 60h0M490 352h0M575 188h0M486 315h0M467 288h0M400 233h0M535 283h0M495 274h0M222 306h0M507 316h0M464 54h0M503 307h0M451 360h0M479 384h0M452 229h0M538 317h0M443 315h0M561 233h0M679 392h0M438 212h0M642 295h0M527 316h0M415 407h0M345 507h0M565 331h0M325 278h0M474 294h0M464 395h0M644 354h0M123 136h0M230 261h0M464 234h0M454 293h0M571 371h0M285 198h0M492 262h0M500 311h0M742 297h0M634 619h0M596 176h0M379 472h0M248 305h0M804 423h0M510 609h0M468 280h0M480 197h0M486 336h0M431 477h0M358 326h0M469 291h0M558 171h0M554 350h0M497 313h0M633 264h0M413 290h0M492 259h0M559 234h0M848 275h0M424 317h0M208 231h0M429 331h0M324 190h0M463 354h0M508 293h0M572 223h0M342 396h0M357 625h0M418 501h0M664 249h0M530 398h0M248 365h0M436 304h0M571 435h0M171 356h0M455 325h0M237 194h0M404 224h0M495 347h0M438 317h0M441 350h0M525 164h0M509 393h0M497 177h0M463 288h0M490 239h0M556 309h0M544 320h0M550 218h0M312 574h0M459 323h0M571 315h0M503 308h0M562 329h0M536 261h0M422 243h0M412 208h0M499 321h0M524 321h0M466 305h0M468 636h0M665 366h0M491 273h0M867 240h0M490 284h0M554 325h0M448 272h0M643 174h0M478 211h0M328 458h0M434 257h0M575 247h0M407 366h0M502 227h0M464 323h0M516 235h0M544 301h0M506 291h0M325 264h0M797 470h0M558 340h0M475 301h0M245 500h0M617 224h0M586 438h0M592 332h0M516 326h0M430 280h0M489 272h0M417 260h0M474 495h0M455 365h0M482 304h0M485 248h0M583 296h0M589 268h0M471 258h0M351 293h0M769 164h0M497 259h0M332 420h0M467 305h0M469 193h0M372 241h0M496 364h0M508 297h0M106 470h0M459 325h0M441 597h0M481 274h0M412 280h0M543 355h0M532 243h0M535 213h0M530 324h0M502 303h0M394 371h0M539 283h0M544 124h0M404 356h0M405 75h0M472 309h0M395 433h0M474 313h0M494 287h0M816 469h0M389 262h0M472 256h0M210 334h0M824 381h0M435 274h0M744 621h0M547 236h0M477 242h0M406 364h0M466 370h0M368 222h0M280 377h0M463 309h0M550 337h0M488 304h0M455 254h0M414 327h0M73 414h0M545 265h0M494 475h0M881 323h0M479 230h0M486 294h0M388 296h0M657 309h0M532 347h0M386 520h0M654 327h0M526 282h0M648 277h0M504 255h0M444 242h0M464 332h0M558 344h0M378 440h0M508 464h0M556 532h0M474 324h0M440 446h0M472 314h0M492 396h0M672 408h0M511 268h0M446 541h0M551 344h0M555 234h0M493 209h0M484 289h0M494 308h0M386 282h0M483 256h0M554 303h0M466 291h0M485 319h0M490 318h0M650 311h0M490 341h0M538 280h0M483 295h0M931 347h0M278 324h0M519 310h0M460 372h0M592 441h0M735 622h0M391 369h0M684 598h0M559 139h0M90 286h0M511 339h0M470 321h0M619 333h0M409 490h0M551 208h0M445 469h0M376 208h0M381 245h0M154 347h0M902 369h0M501 202h0M556 289h0M327 357h0M447 283h0M491 320h0M414 428h0M328 530h0M454 331h0M263 422h0M329 393h0M240 76h0M532 271h0M550 379h0M507 216h0M468 583h0M530 272h0M613 253h0M493 269h0M505 339h0M507 353h0M670 501h0M522 327h0M676 576h0M479 430h0M453 332h0M473 230h0M453 259h0M480 331h0M495 381h0M624 169h0M594 266h0M563 299h0M430 134h0M457 354h0M430 208h0M400 296h0M514 292h0M631 302h0M503 286h0M494 330h0M489 381h0M448 476h0M444 201h0M447 251h0M422 257h0M248 336h0M543 264h0M472 317h0M478 268h0M607 365h0M754 387h0M519 185h0M481 342h0M610 365h0M461 310h0M474 267h0M457 311h0M446 173h0M696 179h0M470 251h0M421 310h0M420 303h0M597 448h0M856 323h0M487 374h0M520 289h0M459 335h0M675 231h0M434 49h0M509 384h0M568 393h0M427 379h0M506 323h0M470 242h0M236 361h0M603 260h0M529 306h0M471 270h0M518 240h0M445 142h0M609 371h0M454 323h0M528 427h0M222 606h0M534 309h0M876 463h0M503 321h0M442 491h0M53 418h0M385 349h0M391 305h0M493 292h0M427 305h0M792 489h0M127 527h0M444 257h0M670 284h0M508 282h0M413 333h0M502 413h0M459 305h0M615 155h0M595 341h0M403 377h0M414 421h0M475 324h0M666 321h0M791 418h0M648 1h0M573 358h0M431 251h0M567 326h0M337 330h0M119 121h0M620 586h0M343 342h0M453 307h0M235 414h0M410 354h0M531 241h0M508 295h0M292 504h0M453 144h0M429 245h0M523 260h0M491 316h0M458 328h0M621 198h0M528 269h0M415 308h0M529 362h0M494 316h0M494 280h0M466 312h0M448 345h0M426 508h0M508 277h0M255 325h0M465 192h0M579 359h0M549 229h0M288 285h0M863 84h0M330 161h0M523 314h0M431 258h0M470 156h0M760 49h0M425 299h0M391 265h0M536 267h0M631 311h0M453 206h0M463 290h0M453 328h0M522 329h0M489 355h0M598 334h0M447 322h0M463 284h0M397 321h0M811 244h0M487 358h0M503 272h0M284 94h0M392 381h0M459 393h0M454 344h0M449 275h0M130 200h0M529 158h0M527 305h0M413 613h0M406 319h0M468 307h0M809 530h0M352 306h0M600 106h0M480 417h0M447 284h0M464 287h0M565 252h0M403 213h0M462 394h0M564 230h0M536 290h0M332 199h0M667 305h0M389 339h0M402 261h0M394 267h0M434 164h0M303 518h0M531 372h0M468 346h0M525 230h0M468 324h0M443 348h0M259 501h0M575 470h0M314 137h0M384 132h0" stroke="#c0d4ff" stroke-opacity=".7" stroke-width="3" stroke-linecap="round"/>
<path d="M537 383h0M673 381h0M375 250h0M650 279h0M431 263h0M480 264h0M316 258h0M526 380h0M575 293h0M712 293h0M747 423h0M490 294h0M631 577h0M498 317h0M568 320h0M503 297h0M504 375h0M307 501h0M505 239h0M498 264h0M491 384h0M155 518h0M536 208h0M677 143h0M392 127h0M393 376h0M581 621h0M498 353h0M300 291h0M738 299h0M386 378h0M433 485h0M476 220h0M501 294h0M551 8h0M460 202h0M237 427h0M383 198h0M549 282h0M525 288h0M432 635h0M497 400h0M808 371h0M388 244h0M517 279h0M451 249h0M475 297h0M377 602h0M492 413h0M561 569h0M378 325h0M390 377h0M421 325h0M856 119h0M451 23h0M414 404h0M500 294h0M476 335h0M475 187h0M436 303h0M698 99h0M418 239h0M474 359h0M457 230h0M466 304h0M544 304h0M141 186h0M518 295h0M467 266h0M443 439h0M540 395h0M533 288h0M471 307h0M400 320h0M500 333h0M760 86h0M514 350h0M456 40h0M381 180h0M400 111h0M475 295h0M540 290h0M562 333h0M593 454h0M439 80h0M527 381h0M581 340h0M414 267h0M508 455h0M538 316h0M180 516h0M283 581h0M487 330h0M600 285h0M435 196h0M355 311h0M248 435h0M429 94h0M883 169h0M169 374h0M803 279h0M321 570h0M554 236h0M421 294h0M524 224h0M526 259h0M549 288h0M600 216h0M481 325h0M169 352h0M487 326h0M519 250h0M405 319h0M488 320h0M436 205h0M563 279h0M231 604h0M453 274h0M140 151h0M699 20h0M535 304h0M438 333h0M459 490h0M491 204h0M713 522h0M583 156h0M543 317h0M492 366h0M559 515h0M571 365h0M237 91h0M368 419h0M608 87h0M469 199h0M510 342h0M413 267h0M144 171h0M435 291h0M279 20h0M685 601h0M557 118h0M441 328h0M650 315h0M492 45h0M386 316h0M588 358h0M513 240h0M452 481h0M533 294h0M431 233h0M474 429h0M602 435h0M532 330h0M607 621h0M512 289h0M352 194h0M431 312h0M526 319h0M540 236h0M561 320h0M480 363h0M454 323h0M496 282h0M787 599h0M516 290h0M454 456h0M492 254h0M662 211h0M385 481h0M251 156h0M611 285h0M424 334h0M422 277h0M725 584h0M507 234h0M476 415h0M300 359h0M424 298h0M454 513h0M477 242h0M478 254h0M627 288h0M466 210h0M516 243h0M82 425h0M543 227h0M445 345h0M495 216h0M519 383h0M423 379h0M530 404h0M478 274h0M461 187h0M338 71h0M757 172h0M451 410h0M481 333h0M483 191h0M536 328h0M556 336h0M516 367h0M821 288h0M576 301h0M536 364h0M503 286h0M553 315h0M559 267h0M327 341h0M537 411h0M246 394h0M474 289h0M550 275h0M527 201h0M518 379h0M486 338h0M493 318h0M481 223h0M578 298h0M468 395h0M296 274h0M423 379h0M368 274h0M488 205h0M465 297h0M687 384h0M551 207h0M616 408h0M526 148h0M681 460h0M389 353h0M501 329h0M451 279h0M434 240h0M653 256h0M535 250h0M466 302h0M443 343h0M575 256h0M388 122h0M487 303h0M504 317h0M414 260h0M465 330h0M503 328h0M401 354h0M491 325h0M550 281h0M429 402h0M288 427h0M301 490h0M533 404h0M706 269h0M522 113h0M359 240h0M482 247h0M498 357h0M185 607h0M495 176h0M373 208h0M484 323h0M556 343h0M785 96h0M490 294h0M519 328h0M514 343h0M366 464h0M571 292h0M350 310h0M863 338h0M398 325h0M519 312h0M491 284h0M426 249h0M569 409h0M508 283h0M485 300h0M753 340h0M516 368h0M745 274h0M601 244h0M478 255h0M460 283h0M507 251h0M354 194h0M466 284h0M406 346h0M372 433h0M425 97h0M264 327h0M546 261h0M529 275h0M508 254h0M177 409h0M505 230h0M132 422h0M475 303h0M575 325h0M528 247h0M477 97h0M727 418h0M525 274h0M343 347h0M448 400h0M254 440h0M421 385h0M494 299h0M389 274h0M649 395h0M342 537h0M422 282h0M498 283h0M422 252h0M252 433h0M312 334h0M451 308h0M383 352h0M480 409h0M563 417h0M491 339h0M369 487h0M423 342h0M548 270h0M589 176h0M602 438h0M475 274h0M483 289h0M416 209h0M548 278h0M527 308h0M452 201h0M481 353h0M869 178h0M876 187h0M200 216h0M462 328h0M588 162h0M580 339h0M575 319h0M325 602h0M487 388h0M494 264h0M451 349h0M514 180h0M518 321h0M434 115h0M425 231h0M342 595h0M524 304h0M616 154h0M521 290h0M338 122h0M520 256h0M772 219h0M437 245h0M397 220h0M491 292h0M581 43h0M570 290h0M135 464h0M451 272h0M511 268h0M474 333h0M420 247h0M408 308h0M532 332h0M556 51h0M733 403h0M464 179h0M556 264h0M85 184h0M592 255h0M456 280h0M436 210h0M534 152h0M251 212h0M580 301h0M635 72h0M439 131h0M481 310h0M532 311h0M454 355h0M515 263h0M682 282h0M467 384h0M402 283h0M380 249h0M510 352h0M613 287h0M426 89h0M387 203h0M567 184h0M506 294h0M485 311h0M499 248h0M469 375h0M455 218h0M248 76h0M781 450h0M446 279h0M498 383h0M596 359h0M529 236h0M540 145h0M452 339h0M568 191h0M539 254h0M500 291h0M469 335h0M513 288h0M538 172h0M119 404h0M632 254h0M752 446h0M552 280h0M418 3h0M508 387h0M401 387h0M395 124h0M889 243h0M604 545h0M533 158h0M555 328h0M482 343h0M459 333h0M529 394h0M375 582h0M417 329h0M549 273h0M502 339h0M546 375h0M512 300h0M394 375h0M568 256h0M487 292h0M118 431h0M435 132h0M428 404h0M476 344h0M500 414h0M476 168h0M432 283h0M437 355h0M479 319h0M551 411h0M501 338h0M534 173h0M258 458h0M504 312h0M284 28h0M483 295h0M513 327h0M309 526h0M395 431h0M177 225h0M140 158h0M433 501h0M427 271h0M455 238h0M570 254h0M740 273h0M375 256h0M475 318h0M201 266h0M425 313h0M291 515h0M364 593h0M499 296h0M183 471h0M442 324h0M390 236h0M564 242h0M214 3h0M659 431h0M495 274h0M465 478h0M464 261h0M501 301h0M330 330h0M429 14h0M597 12h0M474 304h0M550 244h0M318 276h0M409 376h0M482 376h0M771 81h0M601 114h0M591 347h0M133 417h0M529 368h0M555 325h0M775 332h0M548 324h0M460 86h0M655 13h0M514 277h0M462 307h0M677 346h0M434 112h0M234 290h0M495 296h0M429 484h0M541 325h0M407 387h0M644 290h0M487 254h0M442 272h0M665 36h0M549 205h0M558 94h0M627 527h0M282 327h0M558 252h0M380 307h0M750 196h0M380 337h0M446 179h0M389 259h0M480 334h0M717 402h0M538 372h0M555 342h0M608 276h0M456 312h0M402 209h0M449 288h0M391 453h0M547 326h0M452 361h0M455 286h0M516 339h0M392 365h0M377 271h0M624 403h0M485 312h0M485 271h0M702 183h0M502 264h0M569 279h0M543 265h0M589 318h0M547 242h0M542 526h0M585 121h0M601 178h0M486 291h0M306 332h0M413 149h0M478 274h0M492 472h0M611 276h0M502 375h0M267 261h0M494 232h0M220 515h0M425 389h0M450 302h0M528 319h0M633 401h0M425 386h0M478 276h0M263 322h0M508 290h0M265 543h0M494 276h0M768 332h0M455 308h0M576 313h0M458 323h0M323 231h0M489 315h0M566 298h0M509 305h0M565 271h0M501 147h0M565 280h0M510 30h0M504 32h0M495 334h0M384 352h0M208 371h0M480 263h0M536 313h0M397 232h0M422 324h0M509 341h0M530 533h0M491 324h0M469 378h0M522 386h0M527 332h0M262 65h0M228 270h0M370 405h0M504 239h0M554 264h0M488 375h0M438 370h0M259 407h0M307 123h0M525 344h0M867 436h0M543 282h0M878 121h0M425 149h0M595 309h0M542 222h0M548 519h0M426 454h0M419 279h0M536 334h0M445 501h0M798 19h0M377 401h0M583 202h0M545 314h0M508 152h0M525 213h0M826 422h0M318 354h0M530 463h0M491 199h0M500 260h0M507 232h0M840 299h0M439 359h0M412 445h0M374 614h0M474 409h0M500 364h0M472 308h0M858 268h0M527 280h0M457 235h0M483 188h0M452 343h0M533 236h0M560 292h0M562 343h0M543 250h0M171 135h0M350 60h0M461 393h0M367 283h0M541 202h0M566 234h0M559 171h0M535 322h0M486 270h0M611 363h0M274 347h0M506 290h0M563 311h0M429 352h0M445 286h0M606 584h0M671 290h0M654 348h0M474 289h0M593 347h0M614 207h0M102 397h0M678 367h0M617 324h0M566 402h0M634 399h0M486 202h0M677 314h0M412 388h0M489 300h0M443 359h0M558 118h0M544 344h0M608 464h0M437 323h0M314 380h0M417 430h0M464 301h0M613 404h0M272 287h0M506 266h0M512 457h0M556 510h0M519 351h0M787 458h0M382 282h0M635 199h0M501 213h0M512 332h0M439 308h0M439 322h0M282 284h0M617 382h0M412 512h0M504 176h0M556 294h0M436 311h0M438 252h0M481 412h0M771 422h0M570 245h0M472 371h0M578 326h0M922 317h0M572 434h0M472 364h0M476 338h0M540 461h0M382 280h0M762 259h0M611 452h0M462 306h0M585 358h0M407 242h0M452 213h0M519 299h0M375 278h0M429 151h0M498 257h0M465 344h0M504 245h0M518 204h0M521 328h0M405 363h0M315 192h0M464 361h0M458 327h0M563 277h0M487 296h0M441 299h0M480 381h0M203 227h0M433 213h0M471 312h0M556 319h0M439 308h0M470 269h0M886 314h0M481 269h0M363 325h0M816 373h0M515 271h0M502 284h0M504 378h0M466 366h0M510 378h0M504 307h0M478 392h0M535 318h0M496 323h0M305 409h0M505 406h0M396 458h0M519 327h0M398 10h0M522 382h0M476 228h0M453 321h0M160 59h0M508 355h0M510 329h0M439 248h0M341 154h0M529 301h0M430 287h0M431 262h0M499 535h0M516 201h0M535 364h0" stroke="#d8e4ff" stroke-opacity=".7" stroke-width="3" stroke-linecap="round"/>
<path d="M384 121h0M214 451h0M944 503h0M373 208h0M608 95h0M214 97h0M695 536h0M940 564h0M326 28h0M344 95h0M781 123h0M384 609h0M584 439h0M798 373h0M68 6h0M506 611h0M171 370h0M603 256h0M616 190h0M393 91h0M526 201h0M340 40h0M235 382h0M916 323h0M89 431h0M217 554h0M921 210h0M229 563h0M141 387h0M137 62h0M799 129h0M640 170h0M683 176h0M339 558h0M627 527h0M489 635h0M865 74h0M213 2h0M466 63h0M100 515h0M668 498h0M236 183h0M715 458h0M607 531h0M412 154h0M824 295h0M311 218h0M6 129h0M627 441h0M878 96h0M940 400h0M33 598h0M647 179h0M332 591h0M284 286h0" stroke="#ffffff" stroke-opacity=".95" stroke-width="3.5" stroke-linecap="round"/>
<path d="M312 253h0M816 588h0M280 38h0M571 281h0M80 458h0M405 466h0M229 320h0M886 122h0M706 432h0M521 268h0M411 70h0M474 233h0M881 513h0M130 577h0M242 148h0M755 524h0M808 233h0M31 596h0M913 576h0M578 221h0M499 120h0M184 536h0M675 110h0M821 450h0M274 225h0M255 481h0M577 187h0M567 49h0M517 228h0M402 346h0M296 225h0M248 222h0M485 541h0M388 197h0M505 204h0M693 71h0" stroke="#c8d8ff" stroke-opacity=".95" stroke-width="3.5" stroke-linecap="round"/>
<path d="M439 293h0M338 222h0M561 343h0M443 357h0M510 220h0M289 365h0M585 329h0M543 270h0M540 162h0M497 191h0M623 349h0M607 355h0M686 107h0M505 347h0M538 477h0M509 307h0M538 303h0M260 225h0M503 284h0M563 225h0M553 256h0M435 367h0M222 297h0M519 374h0M645 270h0M525 441h0M167 67h0M568 84h0M455 240h0M512 255h0M547 283h0M416 405h0M500 378h0M147 295h0M501 297h0M388 306h0M478 382h0M541 370h0M545 311h0M458 31h0M558 261h0M542 565h0M848 561h0M697 238h0M425 132h0M483 443h0M279 247h0M798 237h0M581 291h0M480 404h0M486 90h0M562 398h0M328 200h0M270 358h0M506 246h0M377 281h0M370 280h0M479 387h0M519 296h0M407 342h0M515 282h0M481 297h0M413 414h0M221 249h0M499 416h0M532 272h0M381 185h0M333 189h0M581 232h0M508 307h0M446 361h0M506 364h0M425 249h0M515 248h0M449 240h0M358 224h0M517 246h0M481 289h0M225 362h0M892 296h0M384 242h0M547 208h0M503 431h0M514 413h0M478 288h0M830 158h0M764 561h0M433 222h0M474 399h0M439 373h0M441 332h0M111 103h0M536 305h0M373 378h0M746 517h0M448 177h0M503 430h0M633 541h0M477 323h0M280 144h0M435 248h0M176 339h0M478 435h0M630 373h0M716 332h0M459 221h0M468 408h0M592 260h0M430 307h0M594 335h0M421 541h0M324 293h0M134 67h0M466 268h0M686 128h0M480 298h0M389 302h0M451 270h0M670 404h0M386 505h0M537 68h0M576 172h0M480 340h0M490 317h0M555 288h0M464 297h0M711 256h0M510 322h0M639 257h0M588 349h0M481 311h0M547 381h0M447 333h0M477 305h0M571 332h0M445 278h0M505 453h0M593 360h0M610 271h0M442 414h0M520 213h0M458 360h0M338 266h0M417 316h0M562 514h0M464 316h0M428 263h0M410 317h0M547 221h0M481 229h0M457 302h0M387 345h0M463 332h0M481 372h0M268 624h0M484 284h0M600 290h0M600 401h0M455 357h0M434 283h0M490 293h0M460 318h0M499 344h0M534 311h0M373 185h0M871 381h0M548 297h0M543 264h0M739 341h0M577 362h0M543 390h0M502 234h0M472 256h0M578 299h0M478 162h0M613 467h0M508 326h0M514 298h0M538 281h0M451 345h0M488 271h0M708 402h0M472 308h0M591 236h0M517 342h0M761 200h0M529 476h0M712 489h0M315 270h0M688 343h0M484 90h0M397 333h0M217 199h0M478 299h0M216 466h0M500 286h0M624 427h0M572 343h0M466 291h0M659 98h0M503 305h0M480 290h0M535 349h0M249 204h0M564 304h0M375 271h0M522 308h0M642 391h0M509 159h0M467 202h0M581 214h0M453 359h0M436 297h0M544 279h0M567 508h0M515 347h0M469 296h0M528 305h0M228 452h0M463 237h0M425 317h0M490 225h0M84 221h0M490 264h0M491 293h0M607 390h0M357 553h0M396 322h0M451 324h0M774 112h0M491 330h0M591 328h0M492 320h0M377 566h0M492 272h0M447 290h0M375 241h0M642 402h0M527 461h0M464 245h0M354 270h0M625 144h0M501 251h0M428 305h0M498 329h0M496 467h0M533 395h0M392 241h0M452 426h0M207 284h0M435 369h0M496 216h0M488 476h0M254 451h0M635 221h0M604 427h0M472 215h0M817 275h0M563 354h0M505 303h0M443 302h0M429 325h0M783 332h0M622 60h0M280 341h0M591 328h0M514 329h0M566 254h0M494 460h0M483 330h0M521 443h0M598 633h0M178 419h0M408 400h0M465 372h0M431 339h0M451 17h0M543 187h0M553 425h0M713 396h0M812 383h0M670 268h0M538 242h0M390 234h0M601 394h0M389 462h0M469 341h0M542 394h0M706 206h0M595 482h0M546 371h0M731 326h0M437 325h0M511 299h0M148 397h0M563 325h0M598 322h0M614 355h0M540 95h0M447 270h0M275 181h0M503 328h0M467 240h0M441 284h0M557 216h0M510 172h0M440 257h0M361 299h0M554 307h0M291 317h0M899 442h0M527 323h0M459 289h0M321 241h0M350 358h0M407 305h0M325 334h0M523 300h0M520 405h0M391 119h0M461 385h0M464 222h0M451 219h0M586 103h0M484 296h0M539 62h0M450 275h0M487 318h0M838 402h0M470 554h0M542 301h0M392 285h0M469 240h0M492 346h0M609 231h0M570 239h0M460 227h0M560 459h0M413 340h0M191 117h0M481 278h0M583 245h0M521 507h0M398 294h0M480 235h0M511 280h0M505 296h0M426 405h0M484 435h0M522 208h0M717 353h0M451 259h0M473 290h0M571 310h0M507 342h0M441 342h0M328 39h0M497 309h0M506 342h0M484 430h0M596 339h0M580 195h0M377 3h0M531 245h0M515 346h0M261 298h0M537 254h0M592 248h0M377 317h0M505 391h0M837 213h0M543 267h0M356 303h0M437 299h0M487 302h0M497 295h0M475 315h0M433 212h0M531 270h0M515 383h0M523 311h0M483 301h0M638 234h0M543 246h0M549 352h0M442 328h0M449 205h0M468 133h0M471 221h0M101 298h0M434 283h0M440 303h0M550 254h0M493 304h0M355 325h0M455 326h0M476 384h0M607 136h0M339 452h0M476 303h0M363 140h0M439 287h0M618 504h0M717 340h0M470 265h0M385 618h0M530 298h0M356 114h0M580 368h0M518 305h0M445 257h0M282 268h0M245 477h0M524 301h0M450 312h0M474 293h0M306 413h0M480 303h0M503 297h0M507 330h0M580 442h0M935 347h0M416 313h0M357 400h0M498 463h0M559 204h0M509 185h0M344 356h0M456 363h0M352 428h0M329 310h0M183 51h0M616 102h0M497 348h0M460 423h0M503 288h0M488 493h0M420 291h0M440 344h0M480 355h0M680 618h0M406 411h0M582 368h0M482 445h0M413 224h0M443 411h0M512 308h0M499 267h0M525 244h0M526 387h0M332 81h0M487 514h0M503 171h0M395 352h0M233 128h0M507 335h0M457 410h0M394 479h0M417 263h0M485 312h0M498 261h0M717 441h0M551 316h0M509 277h0M504 278h0M400 345h0M529 228h0M482 357h0M507 344h0M308 62h0M354 354h0M423 374h0M525 150h0M409 553h0M436 307h0M453 232h0M637 272h0M523 274h0M503 377h0M580 256h0M245 301h0M404 573h0M554 301h0M482 260h0M740 336h0M275 349h0M522 287h0M491 196h0M470 296h0M852 313h0M546 292h0M533 370h0M452 462h0M455 361h0M330 270h0M509 346h0M669 229h0M452 456h0M443 314h0M433 252h0M393 170h0M511 338h0M573 252h0M515 499h0M493 303h0M520 264h0M466 374h0M507 344h0M389 522h0M525 305h0M444 294h0M666 417h0M494 347h0M538 12h0M481 297h0M561 314h0M579 279h0M478 109h0M266 306h0M363 325h0M534 276h0M479 308h0M482 250h0M372 176h0M635 391h0M565 337h0M508 220h0M501 312h0M437 432h0M528 356h0M419 389h0" stroke="#ffffff" stroke-opacity=".95" stroke-width="3" stroke-linecap="round"/>
<path d="M479 244h0M528 347h0M443 331h0M413 367h0M650 92h0M280 61h0M493 297h0M628 107h0M487 287h0M546 325h0M460 356h0M479 307h0M843 153h0M474 349h0M595 251h0M479 273h0M366 534h0M428 74h0M413 191h0M67 366h0M533 189h0M334 182h0M455 299h0M845 105h0M418 146h0M647 589h0M105 282h0M504 288h0M345 146h0M513 163h0M506 293h0M720 457h0M295 303h0M479 267h0M480 307h0M571 306h0M433 58h0M425 621h0M494 307h0M525 174h0M367 257h0M437 264h0M378 477h0M387 336h0M541 392h0M672 617h0M483 277h0M463 317h0M526 257h0M349 168h0M501 2h0M546 281h0M524 202h0M558 335h0M186 259h0M155 534h0M400 465h0M502 467h0M390 262h0M637 316h0M368 282h0M771 81h0M517 301h0M456 358h0M488 319h0M481 319h0M499 361h0M631 286h0M648 375h0M458 309h0M509 301h0M475 298h0M515 344h0M490 338h0M585 602h0M526 289h0M485 292h0M318 214h0M523 174h0M453 321h0M478 281h0M450 341h0M772 108h0M532 461h0M920 224h0M462 166h0M456 299h0M157 244h0M363 270h0M470 335h0M163 481h0M540 381h0M488 337h0M448 301h0M200 201h0M205 274h0M460 377h0M459 274h0M510 334h0M364 109h0M567 331h0M549 219h0M495 285h0M818 185h0M804 350h0M631 409h0M491 350h0M403 201h0M125 348h0M509 181h0M457 285h0M428 286h0M634 469h0M415 376h0M420 307h0M520 276h0M378 365h0M610 302h0M443 236h0M513 234h0M555 425h0M138 478h0M501 258h0M481 347h0M506 318h0M551 344h0M492 282h0M474 370h0M398 405h0M693 149h0M463 295h0M640 53h0M469 134h0M618 445h0M406 280h0M495 431h0M503 141h0M522 409h0M528 289h0M347 383h0M549 284h0M357 559h0M392 344h0M573 253h0M726 222h0M221 496h0M538 277h0M414 229h0M305 627h0M567 352h0M480 298h0M507 322h0M602 368h0M501 245h0M513 175h0M550 345h0M501 103h0M428 74h0M766 235h0M439 352h0M315 323h0M449 302h0M143 392h0M602 270h0M492 297h0M458 350h0M473 346h0M422 361h0M450 287h0M466 285h0M453 242h0M396 281h0M522 270h0M517 260h0M510 281h0M434 319h0M384 227h0M497 306h0M447 321h0M286 477h0M291 421h0M574 418h0M518 274h0M557 56h0M786 532h0M435 277h0M511 316h0M538 344h0M518 383h0M527 183h0M242 146h0M714 295h0M499 328h0M482 365h0M497 247h0M485 264h0M546 315h0M314 505h0M497 301h0M798 201h0M678 265h0M489 328h0M449 95h0M292 245h0M771 60h0M608 436h0M478 190h0M466 278h0M567 304h0M468 352h0M491 318h0M579 365h0M682 519h0M443 245h0M536 321h0M485 343h0M523 254h0M457 401h0M342 433h0M492 348h0M266 50h0M425 296h0M432 291h0M540 329h0M803 362h0M512 230h0M412 294h0M447 242h0M560 291h0M495 402h0M464 326h0M389 373h0M554 313h0M498 238h0M920 407h0M404 280h0M674 441h0M792 31h0M446 246h0M433 246h0M416 284h0M230 256h0M446 342h0M424 85h0M439 324h0M584 158h0M530 218h0M539 284h0M431 310h0M637 264h0M554 304h0M584 212h0M351 258h0M510 329h0M197 190h0" stroke="#c8dcff" stroke-opacity=".95" stroke-width="3" stroke-linecap="round"/>
<path d="M255 601h0M492 375h0M387 254h0M443 422h0M464 195h0M460 379h0M589 346h0M524 220h0M200 520h0M515 250h0M559 355h0M546 211h0M469 302h0M662 270h0M477 321h0M551 240h0M501 304h0M533 387h0M486 304h0M560 174h0M455 89h0M286 368h0M461 271h0M453 328h0M460 315h0M516 349h0M523 348h0M329 451h0M458 273h0M441 225h0M518 478h0M258 519h0M476 294h0M428 268h0M433 365h0M401 397h0M625 415h0M470 364h0M494 331h0M428 250h0M511 258h0M387 227h0M550 397h0M128 369h0M383 453h0M572 536h0M261 233h0M165 395h0M604 347h0M489 302h0M541 239h0M439 619h0M669 229h0M502 125h0M421 370h0M421 318h0M465 285h0M549 272h0M432 247h0M441 168h0M457 471h0M668 287h0M606 444h0M635 167h0M692 391h0M497 328h0M458 287h0M545 317h0M473 348h0M652 176h0M505 103h0M438 264h0M474 309h0M478 339h0M615 393h0M403 340h0M330 257h0M547 320h0M311 232h0M568 320h0M518 451h0M482 316h0M501 389h0M533 271h0M597 172h0M454 270h0M501 316h0M547 398h0M502 326h0M840 563h0M708 319h0M454 288h0M190 116h0M655 331h0M458 259h0M549 226h0M646 265h0M404 291h0M416 338h0M489 362h0M748 152h0M498 319h0M495 277h0M206 550h0M373 191h0M479 309h0M389 280h0M436 327h0M605 312h0M647 216h0M487 272h0M446 325h0M489 256h0M482 376h0M460 397h0M492 288h0M153 195h0M587 230h0M622 216h0M586 427h0M499 286h0M883 385h0M439 200h0M593 400h0M463 315h0M634 340h0M390 464h0M539 193h0M336 232h0M495 432h0M617 379h0M269 380h0M460 347h0M195 508h0M484 299h0M477 328h0M539 361h0M551 207h0M459 372h0M394 338h0M255 591h0M599 238h0M260 20h0M403 337h0M535 291h0M556 347h0M552 294h0M600 352h0M425 263h0M441 387h0M547 311h0M662 540h0M516 237h0M401 290h0M151 385h0M560 290h0M669 428h0M675 320h0M368 301h0M464 324h0M295 542h0M630 606h0M332 189h0M470 228h0M481 308h0M386 253h0M491 289h0M590 260h0M538 301h0M376 315h0M218 146h0M544 216h0M555 346h0M681 222h0M694 251h0M518 370h0M417 303h0M682 465h0M485 283h0M552 285h0M752 458h0M470 273h0M542 380h0M518 291h0M626 420h0M491 345h0M181 593h0M483 293h0M456 289h0M832 505h0M567 206h0M479 333h0M518 269h0M456 573h0M514 293h0M611 274h0M534 354h0M451 291h0M836 154h0M438 419h0M487 307h0M758 279h0M421 239h0M756 389h0M511 297h0M458 276h0M456 242h0M594 324h0M540 323h0M704 567h0M527 256h0M453 186h0M465 315h0M506 276h0M511 280h0M540 344h0M518 337h0M637 156h0M854 233h0M528 345h0M503 278h0M439 64h0M504 514h0M607 277h0M460 291h0M357 196h0M475 246h0M368 292h0M468 265h0M458 287h0M434 263h0M478 404h0M513 331h0M482 238h0M508 237h0M511 221h0M492 389h0M451 443h0M428 276h0M456 265h0M522 404h0M377 243h0M552 278h0M310 180h0M421 283h0M613 518h0M513 240h0M648 247h0M459 296h0M465 243h0M531 373h0M588 173h0M598 93h0M786 68h0M425 398h0M627 627h0M688 328h0M493 321h0M481 281h0M512 365h0M763 488h0M268 187h0M694 341h0M875 185h0M566 290h0M329 241h0M549 301h0M467 207h0M551 254h0M641 335h0" stroke="#fff6e6" stroke-opacity=".95" stroke-width="3" stroke-linecap="round"/>
<path d="M424 311h0M495 589h0M543 278h0M611 266h0M426 496h0M427 425h0M683 187h0M426 109h0M342 319h0M380 394h0M517 447h0M485 230h0M478 224h0M380 443h0M448 381h0M360 236h0M519 579h0M525 75h0M481 221h0M626 271h0M464 394h0M527 197h0M310 187h0M367 464h0M268 498h0M543 241h0M504 83h0M438 353h0M515 179h0M462 234h0M479 210h0M489 377h0M512 508h0M336 463h0M540 275h0M558 240h0M428 159h0M518 352h0M445 255h0M504 437h0M483 238h0M607 524h0M400 194h0" stroke="#90b8ff" stroke-opacity=".7" stroke-width="4.5" stroke-linecap="round"/>
<path d="M424 311h0M495 589h0M543 278h0M611 266h0M426 496h0M427 425h0M683 187h0M426 109h0M342 319h0M380 394h0M517 447h0M485 230h0M478 224h0M380 443h0M448 381h0M360 236h0M519 579h0M525 75h0M481 221h0M626 271h0M464 394h0M527 197h0M310 187h0M367 464h0M268 498h0M543 241h0M504 83h0M438 353h0M515 179h0M462 234h0M479 210h0M489 377h0M512 508h0M336 463h0M540 275h0M558 240h0M428 159h0M518 352h0M445 255h0M504 437h0M483 238h0M607 524h0M400 194h0" stroke="#ffffff" stroke-opacity=".95" stroke-width="2.5" stroke-linecap="round"/>
<path d="M444 292h0M569 440h0M580 261h0M629 369h0M503 361h0M569 288h0M647 199h0M476 252h0M545 320h0M424 211h0M437 318h0M544 330h0M418 208h0M479 234h0M625 105h0M548 306h0M519 110h0M394 345h0M358 449h0M467 392h0M358 274h0M632 268h0M567 360h0M568 348h0M508 259h0M424 237h0M495 126h0M519 151h0M461 172h0M423 404h0M608 422h0M486 246h0M484 183h0M529 235h0M485 250h0" stroke="#ffe0a0" stroke-opacity=".7" stroke-width="4.5" stroke-linecap="round"/>
<path d="M444 292h0M569 440h0M580 261h0M629 369h0M503 361h0M569 288h0M647 199h0M476 252h0M545 320h0M424 211h0M437 318h0M544 330h0M418 208h0M479 234h0M625 105h0M548 306h0M519 110h0M394 345h0M358 449h0M467 392h0M358 274h0M632 268h0M567 360h0M568 348h0M508 259h0M424 237h0M495 126h0M519 151h0M461 172h0M423 404h0M608 422h0M486 246h0M484 183h0M529 235h0M485 250h0" stroke="#ffffff" stroke-opacity=".95" stroke-width="2.5" stroke-linecap="round"/>
<path d="M310 448h0M392 367h0M459 259h0M782 158h0M640 198h0M449 260h0M404 286h0M443 278h0M474 176h0M578 388h0M492 367h0M437 273h0M461 582h0M613 30h0M474 451h0M437 321h0M417 161h0M422 91h0M571 333h0M423 247h0M575 269h0M501 384h0M607 193h0M518 253h0M485 361h0M531 128h0M536 331h0M594 169h0M520 499h0M449 321h0M782 189h0M475 376h0M253 452h0" stroke="#ffd890" stroke-opacity=".7" stroke-width="4.5" stroke-linecap="round"/>
<path d="M310 448h0M392 367h0M459 259h0M782 158h0M640 198h0M449 260h0M404 286h0M443 278h0M474 176h0M578 388h0M492 367h0M437 273h0M461 582h0M613 30h0M474 451h0M437 321h0M417 161h0M422 91h0M571 333h0M423 247h0M575 269h0M501 384h0M607 193h0M518 253h0M485 361h0M531 128h0M536 331h0M594 169h0M520 499h0M449 321h0M782 189h0M475 376h0M253 452h0" stroke="#ffffff" stroke-opacity=".95" stroke-width="2.5" stroke-linecap="round"/>
<path d="M605 288h0M454 389h0M410 409h0M557 403h0M550 302h0M597 379h0M443 295h0M493 241h0M264 206h0M365 235h0M752 327h0M631 174h0M305 287h0M809 316h0M317 323h0M414 311h0M483 159h0M546 428h0M450 377h0M458 416h0M545 459h0M528 245h0M591 119h0M598 30h0M446 198h0M521 417h0M525 141h0M414 150h0M559 252h0M649 299h0M399 401h0" stroke="#ffffff" stroke-opacity=".7" stroke-width="4.5" stroke-linecap="round"/>
<path d="M605 288h0M454 389h0M410 409h0M557 403h0M550 302h0M597 379h0M443 295h0M493 241h0M264 206h0M365 235h0M752 327h0M631 174h0M305 287h0M809 316h0M317 323h0M414 311h0M483 159h0M546 428h0M450 377h0M458 416h0M545 459h0M528 245h0M591 119h0M598 30h0M446 198h0M521 417h0M525 141h0M414 150h0M559 252h0M649 299h0M399 401h0" stroke="#ffffff" stroke-opacity=".95" stroke-width="2.5" stroke-linecap="round"/>
<path d="M458 370h0M529 275h0M612 232h0M457 391h0M419 134h0M345 560h0M448 253h0M446 399h0M438 310h0M318 266h0M586 216h0M586 304h0M402 189h0M404 293h0M450 457h0M448 381h0M525 271h0M554 281h0M265 301h0M562 339h0M443 367h0M801 263h0M293 223h0M274 400h0M513 351h0M498 355h0M331 332h0M689 195h0M499 362h0M547 148h0M297 199h0M386 446h0M395 220h0M512 230h0M363 330h0M598 234h0M488 205h0M581 291h0M559 249h0M454 274h0M570 48h0" stroke="#80a8ff" stroke-opacity=".7" stroke-width="4.5" stroke-linecap="round"/>
<path d="M458 370h0M529 275h0M612 232h0M457 391h0M419 134h0M345 560h0M448 253h0M446 399h0M438 310h0M318 266h0M586 216h0M586 304h0M402 189h0M404 293h0M450 457h0M448 381h0M525 271h0M554 281h0M265 301h0M562 339h0M443 367h0M801 263h0M293 223h0M274 400h0M513 351h0M498 355h0M331 332h0M689 195h0M499 362h0M547 148h0M297 199h0M386 446h0M395 220h0M512 230h0M363 330h0M598 234h0M488 205h0M581 291h0M559 249h0M454 274h0M570 48h0" stroke="#ffffff" stroke-opacity=".95" stroke-width="2.5" stroke-linecap="round"/>
<path d="M357 437h0M558 407h0M317 193h0M428 249h0M510 556h0M421 313h0M691 380h0M496 482h0M419 423h0M559 262h0M534 181h0M554 247h0M688 141h0M415 201h0M486 195h0M520 213h0M465 351h0M548 74h0M643 434h0M651 368h0M424 329h0M358 230h0M518 395h0M589 435h0M545 357h0M453 203h0M462 389h0M548 395h0" stroke="#6c9cff" stroke-opacity=".7" stroke-width="4.5" stroke-linecap="round"/>
<path d="M357 437h0M558 407h0M317 193h0M428 249h0M510 556h0M421 313h0M691 380h0M496 482h0M419 423h0M559 262h0M534 181h0M554 247h0M688 141h0M415 201h0M486 195h0M520 213h0M465 351h0M548 74h0M643 434h0M651 368h0M424 329h0M358 230h0M518 395h0M589 435h0M545 357h0M453 203h0M462 389h0M548 395h0" stroke="#ffffff" stroke-opacity=".95" stroke-width="2.5" stroke-linecap="round"/>
</g></g>
<circle cx="42" cy="69" r="3.9" fill="#cfe0ff" fill-opacity=".45"/>
<circle cx="42" cy="69" r="2.2" fill="#fff"/>
<circle cx="23" cy="266" r="4.2" fill="#fff" fill-opacity=".45"/>
<circle cx="23" cy="266" r="2.4" fill="#fff"/>
<circle cx="102" cy="311" r="3.6" fill="#fff" fill-opacity=".45"/>
<circle cx="102" cy="311" r="2.1" fill="#fff"/>
<circle cx="81" cy="42" r="2.9" fill="#fff" fill-opacity=".45"/>
<circle cx="81" cy="42" r="1.7" fill="#fff"/>
<circle cx="300" cy="3" r="3.2" fill="#fff" fill-opacity=".45"/>
<circle cx="300" cy="3" r="1.9" fill="#fff"/>
<circle cx="217" cy="14" r="2.6" fill="#fff" fill-opacity=".45"/>
<circle cx="217" cy="14" r="1.5" fill="#fff"/>
<circle cx="132" cy="32" r="2.6" fill="#9fc0ff" fill-opacity=".45"/>
<circle cx="132" cy="32" r="1.5" fill="#fff"/>
<circle cx="415" cy="166" r="2.9" fill="#ffe8a0" fill-opacity=".45"/>
<circle cx="415" cy="166" r="1.7" fill="#fff"/>
<circle cx="335" cy="201" r="2.9" fill="#ffe8a0" fill-opacity=".45"/>
<circle cx="335" cy="201" r="1.7" fill="#fff"/>
<circle cx="340" cy="212" r="2.6" fill="#ffe8a0" fill-opacity=".45"/>
<circle cx="340" cy="212" r="1.5" fill="#fff"/>
<circle cx="361" cy="77" r="2.6" fill="#9fc0ff" fill-opacity=".45"/>
<circle cx="361" cy="77" r="1.5" fill="#fff"/>
<circle cx="297" cy="158" r="2.6" fill="#fff" fill-opacity=".45"/>
<circle cx="297" cy="158" r="1.5" fill="#fff"/>
<circle cx="582" cy="152" r="3.2" fill="#ffc880" fill-opacity=".45"/>
<circle cx="582" cy="152" r="1.9" fill="#fff"/>
<circle cx="526" cy="69" r="2.9" fill="#fff" fill-opacity=".45"/>
<circle cx="526" cy="69" r="1.7" fill="#fff"/>
<circle cx="603" cy="79" r="2.9" fill="#fff" fill-opacity=".45"/>
<circle cx="603" cy="79" r="1.7" fill="#fff"/>
<circle cx="682" cy="122" r="2.9" fill="#fff" fill-opacity=".45"/>
<circle cx="682" cy="122" r="1.7" fill="#fff"/>
<circle cx="805" cy="303" r="2.9" fill="#fff" fill-opacity=".45"/>
<circle cx="805" cy="303" r="1.7" fill="#fff"/>
<circle cx="548" cy="229" r="2.9" fill="#ffe8a0" fill-opacity=".45"/>
<circle cx="548" cy="229" r="1.7" fill="#fff"/>
<circle cx="941" cy="481" r="3.4" fill="#fff" fill-opacity=".45"/>
<circle cx="941" cy="481" r="2.0" fill="#fff"/>
<circle cx="914" cy="324" r="2.9" fill="#fff" fill-opacity=".45"/>
<circle cx="914" cy="324" r="1.7" fill="#fff"/>
<circle cx="678" cy="507" r="3.1" fill="#fff" fill-opacity=".45"/>
<circle cx="678" cy="507" r="1.8" fill="#fff"/>
<circle cx="850" cy="620" r="3.1" fill="#fff" fill-opacity=".45"/>
<circle cx="850" cy="620" r="1.8" fill="#fff"/>
<circle cx="854" cy="609" r="2.9" fill="#fff" fill-opacity=".45"/>
<circle cx="854" cy="609" r="1.7" fill="#fff"/>
<circle cx="614" cy="581" r="2.9" fill="#fff" fill-opacity=".45"/>
<circle cx="614" cy="581" r="1.7" fill="#fff"/>
<circle cx="230" cy="564" r="3.4" fill="#cfe8ff" fill-opacity=".45"/>
<circle cx="230" cy="564" r="2.0" fill="#fff"/>
<circle cx="151" cy="564" r="2.9" fill="#9fc0ff" fill-opacity=".45"/>
<circle cx="151" cy="564" r="1.7" fill="#fff"/>
<circle cx="322" cy="421" r="3.1" fill="#ffc070" fill-opacity=".45"/>
<circle cx="322" cy="421" r="1.8" fill="#fff"/>
<circle cx="421" cy="418" r="3.1" fill="#ffe8a0" fill-opacity=".45"/>
<circle cx="421" cy="418" r="1.8" fill="#fff"/>
<circle cx="245" cy="378" r="2.6" fill="#fff" fill-opacity=".45"/>
<circle cx="245" cy="378" r="1.5" fill="#fff"/>
<circle cx="177" cy="418" r="2.6" fill="#fff" fill-opacity=".45"/>
<circle cx="177" cy="418" r="1.5" fill="#fff"/>
<circle cx="655" cy="41" r="2.3" fill="#9fc0ff" fill-opacity=".45"/>
<circle cx="655" cy="41" r="1.4" fill="#fff"/>
<circle cx="607" cy="49" r="2.3" fill="#fff" fill-opacity=".45"/>
<circle cx="607" cy="49" r="1.4" fill="#fff"/>
<circle cx="646" cy="204" r="2.3" fill="#fff" fill-opacity=".45"/>
<circle cx="646" cy="204" r="1.4" fill="#fff"/>
<circle cx="674" cy="208" r="2.3" fill="#fff" fill-opacity=".45"/>
<circle cx="674" cy="208" r="1.4" fill="#fff"/>
<circle cx="758" cy="182" r="2.3" fill="#fff" fill-opacity=".45"/>
<circle cx="758" cy="182" r="1.4" fill="#fff"/>
<circle cx="767" cy="73" r="2.3" fill="#fff" fill-opacity=".45"/>
<circle cx="767" cy="73" r="1.4" fill="#fff"/>
<circle cx="650" cy="107" r="2.3" fill="#fff" fill-opacity=".45"/>
<circle cx="650" cy="107" r="1.4" fill="#fff"/>
<circle cx="910" cy="296" r="2.3" fill="#fff" fill-opacity=".45"/>
<circle cx="910" cy="296" r="1.4" fill="#fff"/>
<circle cx="940" cy="365" r="2.3" fill="#fff" fill-opacity=".45"/>
<circle cx="940" cy="365" r="1.4" fill="#fff"/>
<circle cx="835" cy="395" r="2.3" fill="#fff" fill-opacity=".45"/>
<circle cx="835" cy="395" r="1.4" fill="#fff"/>
<circle cx="848" cy="418" r="2.3" fill="#fff" fill-opacity=".45"/>
<circle cx="848" cy="418" r="1.4" fill="#fff"/>
<circle cx="888" cy="395" r="2.3" fill="#fff" fill-opacity=".45"/>
<circle cx="888" cy="395" r="1.4" fill="#fff"/>
<circle cx="695" cy="386" r="2.3" fill="#fff" fill-opacity=".45"/>
<circle cx="695" cy="386" r="1.4" fill="#fff"/>
<circle cx="695" cy="436" r="2.3" fill="#fff" fill-opacity=".45"/>
<circle cx="695" cy="436" r="1.4" fill="#fff"/>
<circle cx="706" cy="498" r="2.3" fill="#fff" fill-opacity=".45"/>
<circle cx="706" cy="498" r="1.4" fill="#fff"/>
<circle cx="818" cy="500" r="2.3" fill="#fff" fill-opacity=".45"/>
<circle cx="818" cy="500" r="1.4" fill="#fff"/>
<circle cx="785" cy="578" r="2.3" fill="#fff" fill-opacity=".45"/>
<circle cx="785" cy="578" r="1.4" fill="#fff"/>
<circle cx="743" cy="611" r="2.3" fill="#fff" fill-opacity=".45"/>
<circle cx="743" cy="611" r="1.4" fill="#fff"/>
<circle cx="665" cy="597" r="2.3" fill="#9fc0ff" fill-opacity=".45"/>
<circle cx="665" cy="597" r="1.4" fill="#fff"/>
<circle cx="736" cy="405" r="2.3" fill="#9fc0ff" fill-opacity=".45"/>
<circle cx="736" cy="405" r="1.4" fill="#fff"/>
<circle cx="269" cy="384" r="2.3" fill="#fff" fill-opacity=".45"/>
<circle cx="269" cy="384" r="1.4" fill="#fff"/>
<circle cx="177" cy="408" r="2.3" fill="#9fc0ff" fill-opacity=".45"/>
<circle cx="177" cy="408" r="1.4" fill="#fff"/>
<circle cx="195" cy="413" r="2.3" fill="#9fc0ff" fill-opacity=".45"/>
<circle cx="195" cy="413" r="1.4" fill="#fff"/>
<circle cx="229" cy="432" r="2.3" fill="#fff" fill-opacity=".45"/>
<circle cx="229" cy="432" r="1.4" fill="#fff"/>
<circle cx="282" cy="459" r="2.3" fill="#9fc0ff" fill-opacity=".45"/>
<circle cx="282" cy="459" r="1.4" fill="#fff"/>
<circle cx="305" cy="459" r="2.3" fill="#9fc0ff" fill-opacity=".45"/>
<circle cx="305" cy="459" r="1.4" fill="#fff"/>
<circle cx="442" cy="453" r="2.3" fill="#9fc0ff" fill-opacity=".45"/>
<circle cx="442" cy="453" r="1.4" fill="#fff"/>
<circle cx="378" cy="502" r="2.3" fill="#fff" fill-opacity=".45"/>
<circle cx="378" cy="502" r="1.4" fill="#fff"/>
<circle cx="470" cy="545" r="2.3" fill="#fff" fill-opacity=".45"/>
<circle cx="470" cy="545" r="1.4" fill="#fff"/>
<circle cx="102" cy="438" r="2.3" fill="#9fc0ff" fill-opacity=".45"/>
<circle cx="102" cy="438" r="1.4" fill="#fff"/>
<circle cx="269" cy="569" r="2.3" fill="#fff" fill-opacity=".45"/>
<circle cx="269" cy="569" r="1.4" fill="#fff"/>
<circle cx="188" cy="599" r="2.3" fill="#9fc0ff" fill-opacity=".45"/>
<circle cx="188" cy="599" r="1.4" fill="#fff"/>
<circle cx="40" cy="362" r="2.3" fill="#fff" fill-opacity=".45"/>
<circle cx="40" cy="362" r="1.4" fill="#fff"/>
<circle cx="350" cy="595" r="2.3" fill="#9fc0ff" fill-opacity=".45"/>
<circle cx="350" cy="595" r="1.4" fill="#fff"/>
<circle cx="475" cy="73" r="2.3" fill="#fff" fill-opacity=".45"/>
<circle cx="475" cy="73" r="1.4" fill="#fff"/>
<circle cx="472" cy="212" r="2.6" fill="#ffe8a0" fill-opacity=".45"/>
<circle cx="472" cy="212" r="1.5" fill="#fff"/>
<circle cx="449" cy="189" r="2.6" fill="#ffe8a0" fill-opacity=".45"/>
<circle cx="449" cy="189" r="1.5" fill="#fff"/>
<circle cx="432" cy="184" r="2.6" fill="#ffe8a0" fill-opacity=".45"/>
<circle cx="432" cy="184" r="1.5" fill="#fff"/>
<circle cx="421" cy="233" r="2.3" fill="#9fc0ff" fill-opacity=".45"/>
<circle cx="421" cy="233" r="1.4" fill="#fff"/>
<circle cx="380" cy="86" r="2.3" fill="#fff" fill-opacity=".45"/>
<circle cx="380" cy="86" r="1.4" fill="#fff"/>
<circle cx="397" cy="111" r="2.3" fill="#fff" fill-opacity=".45"/>
<circle cx="397" cy="111" r="1.4" fill="#fff"/>
<circle cx="350" cy="26" r="2.3" fill="#fff" fill-opacity=".45"/>
<circle cx="350" cy="26" r="1.4" fill="#fff"/>
<circle cx="382" cy="32" r="2.3" fill="#fff" fill-opacity=".45"/>
<circle cx="382" cy="32" r="1.4" fill="#fff"/></g><rect x="949" y="0" width="1" height="639" fill="#101830"/><rect x="950" y="0" width="9" height="639" fill="#000"/></svg></div>
<svg class="a" style="left:80px;top:146px" width="17" height="17" viewBox="0 0 17 17"><path d="M4 2.5 H13 L15.5 5 V16.5 H4Z" fill="#fbfbf4" stroke="#4a5070" stroke-width=".9"/><path d="M6 15.5 C7 11 10 7.5 14.5 6 C15 10 12 14 7 15.5Z" fill="#c8c050" stroke="#6a6a30" stroke-width=".7"/><rect x="0.5" y="3" width="10" height="3.6" fill="#a8b850" stroke="#5a6a28" stroke-width=".7"/></svg>
<div class="t" style="left:99px;top:150px;font-size:13px;font-weight:bold;letter-spacing:.07px;color:#fff;text-shadow:1px 1px #0a1e70">m13_RGB_ddp.tif @ 23.9% (Background, RGB/16#)</div>

<!-- toolbox -->
<div class="a" style="left:2px;top:82px;width:64px;height:442px;background:#0b2fc4;border-radius:2px 2px 0 0"></div>
<div class="a" style="left:2px;top:82px;width:64px;height:17px;border-radius:2px 2px 0 0;background:linear-gradient(#4a90f8 0,#1a5ce8 15%,#0a48d8 50%,#0a44d4 85%,#0a3cc0 100%)"></div>
<div class="a" style="left:5px;top:99px;width:57px;height:23px;background:#fdfdfd;border-bottom:1px solid #aca899"></div>
<svg class="a" style="left:14px;top:99px" width="48" height="23" viewBox="0 0 48 23"><defs><linearGradient id="fth" x1="0" y1="1" x2="1" y2="0"><stop offset="0" stop-color="#8a8a8a"/><stop offset=".5" stop-color="#707070"/><stop offset="1" stop-color="#8a9088"/></linearGradient></defs><path d="M2 18 H12" stroke="#888" stroke-width="1.5"/><path d="M10 19 C11 12 18 4 30 1.5 C38 0 44 0 47 1 C45 4 43 7 38 11 C33 16 26 19 18 21 C14 22 11 21 10 19Z" fill="url(#fth)"/><path d="M14 14 L18 20 M18 11 L22 19 M23 8 L26 17" stroke="#b8b8b8" stroke-width=".8"/></svg>
<div class="a" style="left:5px;top:122px;width:57px;height:399px;background:#ece9d8"></div>
<div class="a" style="left:8px;top:193px;width:51px;height:1px;background:#aca899"></div><div class="a" style="left:8px;top:194px;width:51px;height:1px;background:#fff"></div>
<div class="a" style="left:8px;top:286px;width:51px;height:1px;background:#aca899"></div><div class="a" style="left:8px;top:287px;width:51px;height:1px;background:#fff"></div>
<div class="a" style="left:8px;top:336px;width:51px;height:1px;background:#aca899"></div><div class="a" style="left:8px;top:337px;width:51px;height:1px;background:#fff"></div>
<div class="a" style="left:8px;top:384px;width:51px;height:1px;background:#aca899"></div><div class="a" style="left:8px;top:385px;width:51px;height:1px;background:#fff"></div>
<div class="a" style="left:8px;top:439px;width:51px;height:1px;background:#aca899"></div><div class="a" style="left:8px;top:440px;width:51px;height:1px;background:#fff"></div>
<div class="a" style="left:8px;top:468px;width:51px;height:1px;background:#aca899"></div><div class="a" style="left:8px;top:469px;width:51px;height:1px;background:#fff"></div>
<div class="a" style="left:8px;top:492px;width:51px;height:1px;background:#aca899"></div><div class="a" style="left:8px;top:493px;width:51px;height:1px;background:#fff"></div>
<!-- selected eyedropper button -->
<div class="a" style="left:36px;top:339px;width:24px;height:21px;border:1px solid #9c9a8c;border-radius:3px;background:linear-gradient(135deg,#fff 60%,#ecebe4);box-shadow:inset 1px 1px #c8c6b8"></div>
<svg class="a" style="left:0;top:122px" width="66" height="400" viewBox="0 122 66 400">
<g fill="none" stroke="#222" stroke-width="1.2">
<!-- marquee -->
<rect x="13.5" y="129.5" width="14" height="13" stroke-dasharray="3 2"/>
<!-- lasso -->
<path d="M13.5 151.5 L20 156 L27 150.5 L27.5 158.5 L19 162" stroke="#555" stroke-width="1.1"/><path d="M19 162 C16 161 15 163 17 164.5 C19 166 18 167.5 16.5 167" stroke="#444" stroke-width="1.1"/>
<!-- crop -->
<path d="M13 175 H27 V187 M17 171 V184 H30 M17 184 L27 174" stroke-width="1.8" stroke="#333"/>
<!-- heal -->
<path d="M14 213 L28 200" stroke="#6a6a6a" stroke-width="6.5" stroke-linecap="round"/><path d="M14 213 L28 200" stroke="#bdbdbd" stroke-width="4" stroke-linecap="round"/><path d="M17 208h0M20 205h0M23 203h0M26 201h0M19 209h0M22 207h0M25 204h0" stroke="#777" stroke-width="1.2" stroke-linecap="round"/>
<!-- stamp -->
<circle cx="20" cy="222.5" r="2.8" fill="#666" stroke="#333" stroke-width=".8"/><path d="M20 225 V229" stroke="#333" stroke-width="1.5"/><path d="M13.5 229.5 H27.5 V236.5 H13.5Z" fill="#f4f4f4" stroke="#333"/><path d="M13.5 232.5 H27.5" stroke="#333"/><path d="M17.5 232.5 L20 235 L22.5 232.5Z" fill="#111" stroke="none"/>
<!-- eraser -->
<path d="M13.5 256.5 L19.5 248.5 H29 L23 256.5 Z" fill="#fafafa" stroke="#333"/><path d="M23 256.5 L29 248.5 V251 L23 258.5Z" fill="#888" stroke="#333" stroke-width=".8"/><path d="M13.5 256.5 V258 H23" stroke="#333"/>
<!-- smudge -->
<path d="M15 280 L20 272 C19 270 19 268 21 267 C23 266 27 266 28 268 L28 274 C27 276 24 277 22 276 L17 281Z" fill="#f0f0f0" stroke="#444" stroke-width="1.1"/><path d="M22 269 H26 M22 272 H26" stroke="#999" stroke-width=".8"/>
<!-- path select -->
<path d="M16 293 V306 L19 302 L22 307 L24 306 L21 301 H26 Z" fill="#000" stroke="none"/>
<!-- pen -->
<path d="M20 313.5 L16.5 321 L18 325 H22 L23.5 321 Z" fill="#fff" stroke="#222" stroke-width="1.1"/><path d="M20 316 V321" stroke="#222" stroke-width=".8"/><path d="M17.5 325.5 H22.5 M17.5 327.5 H22.5 M18.5 325 V330 M21.5 325 V330" stroke="#222" stroke-width="1.1"/>
<!-- notes -->
<path d="M14.5 341.5 H27.5 V351 L23 355.5 H14.5 Z" fill="#f8f8f4" stroke="#555"/><path d="M23 355.5 V351 H27.5" fill="#ddd" stroke="#555"/><path d="M16.5 345 H25 M16.5 347.5 H25 M16.5 350 H22" stroke="#666" stroke-width="1"/>
<!-- hand -->
<path d="M14 370 C13 368 13 366 15 366 L17 368 V362 C17 360 19 360 19 362 V366 V360.5 C19 358.5 21.5 358.5 21.5 360.5 V366 V361 C21.5 359 24 359 24 361 V366.5 V363 C24 361 26.5 361 26.5 363 V372 C26.5 376 24 379 20 379 C17 379 16 377 14 370Z" fill="#fafafa" stroke="#333" stroke-width="1.1"/>
<!-- move -->
<path d="M38.5 128.5 V139 L41.5 136 L46 135.5 Z" fill="#222" stroke="#555" stroke-width=".8"/><path d="M49.5 133.5 V143.5 M44.5 138.5 H54.5" stroke="#111" stroke-width="1.4"/><path d="M49.5 132 L47.5 134.5 H51.5Z M49.5 145 L47.5 142.5 H51.5Z M43 138.5 L45.5 136.5 V140.5Z M56 138.5 L53.5 136.5 V140.5Z" fill="#111" stroke="none"/>
<!-- wand -->
<path d="M44 156 L54 165.5" stroke="#222" stroke-width="2"/><path d="M38 155 H46 M42 151 V159 M39.5 152.5 L44.5 157.5 M44.5 152.5 L39.5 157.5" stroke="#555" stroke-width=".9"/>
<!-- slice -->
<path d="M39 187 L54 173 L55 176 L44 186 Z" fill="#777" stroke="#333"/><path d="M45 177 L50 182" stroke-width="1.6"/>
<!-- brush -->
<path d="M46 206 L55 199" stroke="#333" stroke-width="1.3"/><path d="M39 213 C40 210 42 207 45 206 C47 205 48 207 47 209 C45 212 42 213 39 213Z" fill="#555" stroke="#222" stroke-width=".8"/>
<!-- history brush -->
<path d="M46 229 L55 222" stroke="#333" stroke-width="1.3"/><path d="M39 236 C40 233 42 230 45 229 C47 228 48 230 47 232 C45 235 42 236 39 236Z" fill="#555" stroke="#222" stroke-width=".8"/><path d="M38 225 C40 222 44 221 47 223" stroke="#333" stroke-width="1.1" fill="none"/><path d="M37 222 L38.5 226 L41 223.5Z" fill="#222" stroke="none"/><path d="M53 226 C55 229 54 233 51 235" stroke="#444" stroke-dasharray="1 1.2" fill="none"/>
<!-- gradient -->
<rect x="39.5" y="246.5" width="16" height="11" fill="url(#grd)" stroke="#222"/>
<!-- dodge/blur -->
<path d="M38 274 C38 269 43 267 48 268 C52 268 55 271 55 275 C55 279 51 281 46 281 C41 281 38 278 38 274Z" fill="#f2f2f2" stroke="#444" stroke-width="1.1"/><ellipse cx="43.5" cy="275" rx="3.5" ry="2.5" fill="#fff" stroke="#444" stroke-width="1"/><path d="M47 270 L52 273 M48 272 L53 275" stroke="#999" stroke-width=".8"/>
<!-- type T -->
<path d="M40.5 293.5 H53.5 V296.5 L52.5 295 H48.2 V305 L50 306 H44 L45.8 305 V295 H41.5 L40.5 296.5Z" fill="#111" stroke="none"/>
<!-- shape -->
<rect x="40.5" y="315.5" width="14" height="11" fill="url(#shp)" stroke="#555"/>
<!-- eyedropper -->
<path d="M39.5 357 L40.5 354 L47.5 347 L49.5 349 L42.5 356Z" fill="#fff" stroke="#333" stroke-width="1"/><path d="M46 345 L51 350" stroke="#222" stroke-width="2"/><path d="M48.5 344.5 L52.5 340.5 C53.5 339.5 55.5 341.5 54.5 342.5 L50.5 346.5Z" fill="#333" stroke="#111" stroke-width=".8"/>
<!-- zoom -->
<circle cx="44.5" cy="368.5" r="4.8" stroke="#333" stroke-width="1.4" fill="#ececec"/><path d="M48 372 L54 378" stroke="#222" stroke-width="2.6" stroke-linecap="round"/>
</g>
<defs><linearGradient id="shp" x1="0" y1="0" x2="1" y2="1"><stop offset="0" stop-color="#e8e8e8"/><stop offset=".6" stop-color="#a8a8a8"/><stop offset="1" stop-color="#d0d0d0"/></linearGradient><linearGradient id="grd"><stop offset="0" stop-color="#fff"/><stop offset="1" stop-color="#000"/></linearGradient></defs>
<g fill="#000">
<path d="M29 145 L33 145 L33 141Z M29 167 L33 167 L33 163Z M56 189 L60 189 L60 185Z M29 216 L33 216 L33 212Z M56 216 L60 216 L60 212Z M29 238 L33 238 L33 234Z M56 238 L60 238 L60 234Z M29 260 L33 260 L33 256Z M56 260 L60 260 L60 256Z M29 282 L33 282 L33 278Z M56 282 L60 282 L60 278Z M29 308 L33 308 L33 304Z M56 308 L60 308 L60 304Z M29 331 L33 331 L33 327Z M56 331 L60 331 L60 327Z M29 357 L33 357 L33 353Z M56 357 L60 357 L60 353Z"/>
</g>
</svg>
<!-- colors -->
<svg class="a" style="left:40px;top:390px" width="14" height="12" viewBox="0 0 14 12"><path d="M3 3 H9 C11 3 11 5 11 9" fill="none" stroke="#333" stroke-width="1.2"/><path d="M1 3 L4 0.5 V5.5Z M11 11 L8.5 8 H13.5Z" fill="#333"/></svg>
<div class="a" style="left:24px;top:404px;width:28px;height:29px;background:#000;border:1px solid #fff;box-shadow:0 0 0 1px #000"></div>
<div class="a" style="left:11px;top:392px;width:29px;height:28px;background:#c6a26c;border:1px solid #fff;box-shadow:0 0 0 1px #000"></div>
<div class="a" style="left:14px;top:426px;width:6px;height:6px;background:#fff;border:1px solid #000"></div>
<div class="a" style="left:11px;top:423px;width:6px;height:6px;background:#000"></div>
<!-- quick mask -->
<div class="a" style="left:10px;top:445px;width:22px;height:19px;border:1px solid #999;border-radius:3px;background:#fafaf6;box-shadow:inset 1px 1px #fff"><div class="a" style="left:1px;top:2px;width:18px;height:14px;border:1px solid #222;border-width:1px 2px 2px 1px;background:#fafafa"><div class="a" style="left:3px;top:1px;width:10px;height:10px;border-radius:50%;border:1px solid #333;background:#f0f0f0"></div></div></div>
<div class="a" style="left:36px;top:446px;width:19px;height:17px;background:linear-gradient(90deg,#6a6a6a,#aaa);border:1px solid #666"><div class="a" style="left:4px;top:2px;width:10px;height:10px;border-radius:50%;background:#fff;border:1px solid #333"></div></div>
<!-- screen modes -->
<div class="a" style="left:10px;top:472px;width:15px;height:17px;border:1px solid #999;border-radius:2px;background:#f8f8f4"><div class="a" style="left:2px;top:3px;width:9px;height:9px;border:1px solid #333;background:#ccc"></div></div>
<div class="a" style="left:28px;top:474px;width:11px;height:12px;border:1px solid #555;background:linear-gradient(#333 0 2px,#bbb 2px)"></div>
<div class="a" style="left:44px;top:474px;width:11px;height:12px;border:1px solid #555;background:#999"></div>
<!-- jump to IR -->
<svg class="a" style="left:10px;top:496px" width="48" height="20" viewBox="0 0 48 20"><path d="M2 6 H14 V2 L20 8 L14 14 V10 H2Z" fill="#555"/><rect x="6" y="8" width="12" height="10" fill="#f0f0f0" stroke="#333"/><path d="M18 12 C20 8 24 8 26 10 V6 L32 11 L26 16 V13 C24 12 22 12 18 14Z" fill="#777" stroke="#333"/><rect x="30" y="3" width="15" height="15" fill="#f8f8f8" stroke="#888"/><path d="M33 10 L37 15 L45 3" fill="none" stroke="#6a6a6a" stroke-width="3"/></svg>

<!-- right panels -->
<!-- panel1 nav/info -->
<div class="a" style="left:1066px;top:83px;width:212px;height:133px;background:#0a2cb4;border-radius:3px 3px 0 0"></div>
<div class="a xpbar" style="left:1066px;top:83px;width:212px;height:17px;border-radius:3px 3px 0 0"></div>
<div class="a" style="left:1246px;top:85px;width:13px;height:13px;border:1px solid #fff;border-radius:2px;background:linear-gradient(135deg,#6a9af8,#2a5ee8)"><div class="a" style="left:3px;top:7px;width:5px;height:2px;background:#fff"></div></div>
<div class="a" style="left:1262px;top:85px;width:13px;height:13px;border:1px solid #fff;border-radius:2px;background:linear-gradient(135deg,#e8906c,#d04c20)"><div class="t" style="left:1px;top:0px;font-size:11px;font-weight:bold;color:#fff">&#x2715;</div></div>
<div class="a" style="left:1069px;top:100px;width:206px;height:113px;background:#ece9d8"></div>
<div class="a" style="left:1069px;top:100px;width:206px;height:16px;background:#d4d0c8"></div>
<div class="a" style="left:1069px;top:115px;width:206px;height:1px;background:#000"></div>
<svg class="a" style="left:1069px;top:100px" width="206" height="16" viewBox="0 0 206 16"><g stroke="#000" fill="#ece9d8"><path d="M4.5 16 V2.5 H62 L68.5 9 V16Z"/><path d="M104.5 16 V1.5 H164.5 L178.5 15.5 V16Z"/><path d="M68.5 16 V1.5 H97.5 L112 16"/></g><rect x="69" y="14.5" width="42" height="2" fill="#ece9d8"/></svg>
<div class="t" style="left:1081px;top:104px;font-size:10px;letter-spacing:.12px">Navigator</div>
<div class="t" style="left:1144px;top:104px;font-size:10px;font-weight:bold;letter-spacing:.3px">Info</div>
<div class="t" style="left:1182px;top:104px;font-size:10px;letter-spacing:-.1px">Histogram</div>
<div class="a" style="left:1261px;top:102px;width:11px;height:11px;border-radius:50%;background:radial-gradient(circle at 40% 40%,#fff,#c8d4f0)"><div class="a" style="left:4px;top:2px;border-left:4px solid #1c3c8c;border-top:3.5px solid transparent;border-bottom:3.5px solid transparent"></div></div>
<div class="a" style="left:1170px;top:122px;width:1px;height:10px;background:#888"></div>
<!-- panel2 color -->
<div class="a" style="left:1066px;top:214px;width:212px;height:64px;background:#0a2cb4"></div>
<div class="a" style="left:1262px;top:216px;width:13px;height:13px;border:1px solid #fff;border-radius:2px;background:linear-gradient(135deg,#e8906c,#d04c20)"><div class="t" style="left:1px;top:0px;font-size:11px;font-weight:bold;color:#fff">&#x2715;</div></div>
<div class="a" style="left:1069px;top:231px;width:206px;height:44px;background:#ece9d8"></div>
<div class="a" style="left:1261px;top:234px;width:11px;height:11px;border-radius:50%;background:radial-gradient(circle at 40% 40%,#fff,#c8d4f0)"><div class="a" style="left:4px;top:2px;border-left:4px solid #1c3c8c;border-top:3.5px solid transparent;border-bottom:3.5px solid transparent"></div></div>
<div class="a" style="left:1262px;top:251px;width:12px;height:21px;background:#000;border:1px solid #fff;border-top:9px solid #fff"></div>
<!-- panel3 history -->
<div class="a" style="left:1066px;top:277px;width:212px;height:343px;background:#0a2cb4"></div>
<div class="a" style="left:1262px;top:279px;width:13px;height:13px;border:1px solid #fff;border-radius:2px;background:linear-gradient(135deg,#e8906c,#d04c20)"><div class="t" style="left:1px;top:0px;font-size:11px;font-weight:bold;color:#fff">&#x2715;</div></div>
<div class="a" style="left:1069px;top:294px;width:206px;height:323px;background:#ece9d8"></div>
<div class="a" style="left:1261px;top:297px;width:11px;height:11px;border-radius:50%;background:radial-gradient(circle at 40% 40%,#fff,#c8d4f0)"><div class="a" style="left:4px;top:2px;border-left:4px solid #1c3c8c;border-top:3.5px solid transparent;border-bottom:3.5px solid transparent"></div></div>
<div class="a" style="left:1260px;top:312px;width:15px;height:289px;background:#fbfbf8"></div>
<div class="a" style="left:1262px;top:314px;width:12px;height:14px;background:#eeede6;border:1px solid #e4e2d8"><div class="a" style="left:3px;top:5px;width:5px;height:5px;border-left:2px solid #c8c6bc;border-top:2px solid #c8c6bc;transform:rotate(45deg)"></div></div>
<div class="a" style="left:1262px;top:585px;width:12px;height:14px;background:#eeede6;border:1px solid #e4e2d8"><div class="a" style="left:3px;top:2px;width:5px;height:5px;border-right:2px solid #c8c6bc;border-bottom:2px solid #c8c6bc;transform:rotate(45deg)"></div></div>
<div class="a" style="left:1069px;top:424px;width:22px;height:20px;background:#ece9d8;border-bottom:1px solid #fff"><div class="a" style="left:3px;top:1px;width:16px;height:16px;border:1px solid #c9c7ba;border-right-color:#fff;border-bottom-color:#fff"></div></div>
<div class="a" style="left:1092px;top:424px;width:168px;height:20px;background:#ece9d8;border-bottom:1px solid #fff"></div>
<svg class="a" style="left:1100px;top:425px" width="18" height="17" viewBox="0 0 18 17"><rect x="1" y="0" width="8" height="3" fill="#888"/><rect x="1.5" y="2.5" width="13" height="11" fill="#f8f8f8" stroke="#333"/><path d="M4 6 H12 M4 8.5 H12 M4 11 H10" stroke="#333" stroke-width="1.2"/><path d="M11 11 L16 15 L11 16Z" fill="#000"/></svg>
<div class="t" style="left:1125px;top:428px;font-size:10px;color:#000;">Paste</div>
<div class="a" style="left:1069px;top:444px;width:22px;height:20px;background:#ece9d8;border-bottom:1px solid #fff"><div class="a" style="left:3px;top:1px;width:16px;height:16px;border:1px solid #c9c7ba;border-right-color:#fff;border-bottom-color:#fff"></div></div>
<div class="a" style="left:1092px;top:444px;width:168px;height:20px;background:#ece9d8;border-bottom:1px solid #fff"></div>
<svg class="a" style="left:1100px;top:445px" width="18" height="17" viewBox="0 0 18 17"><rect x="1" y="0" width="8" height="3" fill="#888"/><rect x="1.5" y="2.5" width="13" height="11" fill="#f8f8f8" stroke="#333"/><path d="M4 6 H12 M4 8.5 H12 M4 11 H10" stroke="#333" stroke-width="1.2"/><path d="M11 11 L16 15 L11 16Z" fill="#000"/></svg>
<div class="t" style="left:1125px;top:448px;font-size:10px;color:#000;">Invert</div>
<div class="a" style="left:1069px;top:464px;width:22px;height:20px;background:#ece9d8;border-bottom:1px solid #fff"><div class="a" style="left:3px;top:1px;width:16px;height:16px;border:1px solid #c9c7ba;border-right-color:#fff;border-bottom-color:#fff"></div></div>
<div class="a" style="left:1092px;top:464px;width:168px;height:20px;background:#ece9d8;border-bottom:1px solid #fff"></div>
<svg class="a" style="left:1100px;top:465px" width="18" height="17" viewBox="0 0 18 17"><rect x="1" y="0" width="8" height="3" fill="#888"/><rect x="1.5" y="2.5" width="13" height="11" fill="#f8f8f8" stroke="#333"/><path d="M4 6 H12 M4 8.5 H12 M4 11 H10" stroke="#333" stroke-width="1.2"/><path d="M11 11 L16 15 L11 16Z" fill="#000"/></svg>
<div class="t" style="left:1125px;top:468px;font-size:10px;color:#000;">Levels</div>
<div class="a" style="left:1069px;top:484px;width:22px;height:20px;background:#ece9d8;border-bottom:1px solid #fff"><div class="a" style="left:3px;top:1px;width:16px;height:16px;border:1px solid #c9c7ba;border-right-color:#fff;border-bottom-color:#fff"></div></div>
<div class="a" style="left:1092px;top:484px;width:168px;height:20px;background:#ece9d8;border-bottom:1px solid #fff"></div>
<svg class="a" style="left:1100px;top:485px" width="18" height="17" viewBox="0 0 18 17"><rect x="1" y="0" width="8" height="3" fill="#888"/><rect x="1.5" y="2.5" width="13" height="11" fill="#f8f8f8" stroke="#333"/><path d="M4 6 H12 M4 8.5 H12 M4 11 H10" stroke="#333" stroke-width="1.2"/><path d="M11 11 L16 15 L11 16Z" fill="#000"/></svg>
<div class="t" style="left:1125px;top:488px;font-size:10px;color:#000;">Gaussian Blur</div>
<div class="a" style="left:1069px;top:504px;width:22px;height:20px;background:#ece9d8;border-bottom:1px solid #fff"><div class="a" style="left:3px;top:1px;width:16px;height:16px;border:1px solid #c9c7ba;border-right-color:#fff;border-bottom-color:#fff"></div></div>
<div class="a" style="left:1092px;top:504px;width:168px;height:20px;background:#ece9d8;border-bottom:1px solid #fff"></div>
<svg class="a" style="left:1100px;top:505px" width="18" height="17" viewBox="0 0 18 17"><rect x="1" y="0" width="8" height="3" fill="#888"/><rect x="1.5" y="2.5" width="13" height="11" fill="#f8f8f8" stroke="#333"/><path d="M4 6 H12 M4 8.5 H12 M4 11 H10" stroke="#333" stroke-width="1.2"/><path d="M11 11 L16 15 L11 16Z" fill="#000"/></svg>
<div class="t" style="left:1125px;top:508px;font-size:10px;color:#000;">Gaussian Blur</div>
<div class="a" style="left:1069px;top:524px;width:22px;height:20px;background:#ece9d8;border-bottom:1px solid #fff"><div class="a" style="left:3px;top:1px;width:16px;height:16px;border:1px solid #c9c7ba;border-right-color:#fff;border-bottom-color:#fff"></div></div>
<div class="a" style="left:1092px;top:524px;width:168px;height:20px;background:#ece9d8;border-bottom:1px solid #fff"></div>
<svg class="a" style="left:1100px;top:525px" width="18" height="17" viewBox="0 0 18 17"><rect x="1" y="0" width="8" height="3" fill="#888"/><rect x="1.5" y="2.5" width="13" height="11" fill="#f8f8f8" stroke="#333"/><path d="M4 6 H12 M4 8.5 H12 M4 11 H10" stroke="#333" stroke-width="1.2"/><path d="M11 11 L16 15 L11 16Z" fill="#000"/></svg>
<div class="t" style="left:1125px;top:528px;font-size:10px;color:#000;">Flatten Image</div>
<div class="a" style="left:1069px;top:544px;width:22px;height:20px;background:#ece9d8;border-bottom:1px solid #fff"><div class="a" style="left:3px;top:1px;width:16px;height:16px;border:1px solid #c9c7ba;border-right-color:#fff;border-bottom-color:#fff"></div></div>
<div class="a" style="left:1092px;top:544px;width:168px;height:20px;background:#ece9d8;border-bottom:1px solid #fff"></div>
<svg class="a" style="left:1100px;top:545px" width="18" height="17" viewBox="0 0 18 17"><rect x="1" y="0" width="8" height="3" fill="#888"/><rect x="1.5" y="2.5" width="13" height="11" fill="#f8f8f8" stroke="#333"/><path d="M4 6 H12 M4 8.5 H12 M4 11 H10" stroke="#333" stroke-width="1.2"/><path d="M11 11 L16 15 L11 16Z" fill="#000"/></svg>
<div class="t" style="left:1125px;top:548px;font-size:10px;color:#000;">Paste</div>
<div class="a" style="left:1069px;top:563px;width:22px;height:20px;background:#ece9d8;border-bottom:1px solid #fff"><div class="a" style="left:3px;top:1px;width:16px;height:16px;border:1px solid #c9c7ba;border-right-color:#fff;border-bottom-color:#fff"></div></div>
<div class="a" style="left:1092px;top:564px;width:168px;height:19px;background:#316ac5;border-bottom:1px solid #000"></div>
<svg class="a" style="left:1100px;top:564px" width="18" height="17" viewBox="0 0 18 17"><rect x="1" y="0" width="8" height="3" fill="#888"/><rect x="1.5" y="2.5" width="13" height="11" fill="#f8f8f8" stroke="#333"/><path d="M4 6 H12 M4 8.5 H12 M4 11 H10" stroke="#333" stroke-width="1.2"/><path d="M11 11 L16 15 L11 16Z" fill="#000"/></svg>
<div class="t" style="left:1125px;top:567px;font-size:10px;color:#fff;font-weight:bold">Blending Change</div>
<div class="a" style="left:1091px;top:424px;width:1px;height:160px;background:#000"></div>
<svg class="a" style="left:1088px;top:567px" width="10" height="12" viewBox="0 0 10 12"><path d="M0.5 0.5 H5 L9.5 6 L5 11.5 H0.5Z" fill="#fff" stroke="#000"/></svg>
<div class="a" style="left:1069px;top:601px;width:206px;height:1px;background:#000"></div>
<div class="a" style="left:1260px;top:601px;width:1px;height:16px;background:#000"></div>
<svg class="a" style="left:1180px;top:603px" width="95" height="13" viewBox="0 0 95 13"><g fill="none" stroke="#555"><rect x="2.5" y="1.5" width="11" height="10" fill="#e0e0e0"/><rect x="4.5" y="5.5" width="7" height="4"/><rect x="32.5" y="3.5" width="14" height="8" fill="#e8e8e8"/><circle cx="39.5" cy="7.5" r="2.5"/><path d="M63.5 3.5 H70.5 L69.5 11.5 H64.5 Z M62 3 H72 M66 1.5 H68" fill="#ddd"/></g><path d="M84 11 H94 M88 7 H94 M91 4 H94" stroke="#aaa" stroke-dasharray="1 2"/></svg>
<!-- panel4 layers -->
<div class="a" style="left:1066px;top:617px;width:212px;height:255px;background:#0a2cb4;border-radius:3px 3px 0 0"></div>
<div class="a xpbar" style="left:1066px;top:619px;width:212px;height:17px;border-radius:3px 3px 0 0"></div>
<div class="a" style="left:1246px;top:621px;width:13px;height:13px;border:1px solid #fff;border-radius:2px;background:linear-gradient(135deg,#6a9af8,#2a5ee8)"><div class="a" style="left:3px;top:7px;width:5px;height:2px;background:#fff"></div></div>
<div class="a" style="left:1262px;top:621px;width:13px;height:13px;border:1px solid #fff;border-radius:2px;background:linear-gradient(135deg,#e8906c,#d04c20)"><div class="t" style="left:1px;top:0px;font-size:11px;font-weight:bold;color:#fff">&#x2715;</div></div>
<div class="a" style="left:1069px;top:636px;width:206px;height:233px;background:#ece9d8"></div>
<div class="a" style="left:1069px;top:636px;width:206px;height:16px;background:#d4d0c8"></div>
<div class="a" style="left:1069px;top:651px;width:206px;height:1px;background:#000"></div>
<svg class="a" style="left:1069px;top:636px" width="206" height="16" viewBox="0 0 206 16"><g stroke="#000" fill="#ece9d8"><path d="M113.5 16 V2.5 H150 L163.5 16Z"/><path d="M53.5 16 V2.5 H108 L119.5 16Z"/><path d="M4.5 16 V2.5 H48.5 L60.5 15.5"/></g><rect x="5" y="14.5" width="54" height="2" fill="#ece9d8"/></svg>
<div class="t" style="left:1080px;top:640px;font-size:10px;font-weight:bold;letter-spacing:.2px">Layers</div>
<div class="t" style="left:1131px;top:640px;font-size:10px;letter-spacing:-.15px">Channels</div>
<div class="t" style="left:1191px;top:640px;font-size:10px;letter-spacing:-.4px">Paths</div>
<div class="a" style="left:1261px;top:638px;width:11px;height:11px;border-radius:50%;background:radial-gradient(circle at 40% 40%,#fff,#c8d4f0)"><div class="a" style="left:4px;top:2px;border-left:4px solid #1c3c8c;border-top:3.5px solid transparent;border-bottom:3.5px solid transparent"></div></div>
<div class="a" style="left:1073px;top:658px;width:98px;height:15px;border:1px solid #c9c7ba;background:#fff"><div class="t" style="left:3px;top:2px;font-size:10px;color:#aca899">Normal</div><div class="a" style="left:80px;top:0;width:16px;height:13px;background:#f0efe8"><div class="a" style="left:4px;top:2px;width:6px;height:6px;border-right:2px solid #c8c6bc;border-bottom:2px solid #c8c6bc;transform:rotate(45deg)"></div></div></div>
<div class="t" style="left:1179px;top:661px;font-size:10px;letter-spacing:.1px;color:#aca899">Opacity:</div>
<div class="a" style="left:1222px;top:657px;width:49px;height:15px;border:1px solid #c9c7ba;background:#f6f5ee"><div class="t" style="left:5px;top:2px;font-size:10px;letter-spacing:-.4px;color:#aca899">100%</div><div class="a" style="left:36px;top:0;width:11px;height:13px;border-left:1px solid #e8e6da"><div class="a" style="left:2px;top:3px;width:4px;height:4px;border-right:1.5px solid #c0beb2;border-top:1.5px solid #c0beb2;transform:rotate(45deg)"></div></div></div>
<div class="a" style="left:1069px;top:676px;width:191px;height:1px;background:#d8d6c8"></div>
<div class="t" style="left:1073px;top:684px;font-size:10px;letter-spacing:.2px;color:#aca899">Lock:</div>
<svg class="a" style="left:1105px;top:681px" width="72" height="15" viewBox="0 0 72 15"><g stroke="#999" fill="none"><rect x="2.5" y="2.5" width="10" height="10" fill="#f0f0f0"/><path d="M22 13 L32 3" stroke-width="2"/><path d="M46 2 V13 M40.5 7.5 H51.5"/><rect x="61.5" y="6.5" width="9" height="7" fill="#999"/><path d="M63.5 6.5 V4 C63.5 1.5 68.5 1.5 68.5 4 V6.5"/></g></svg>
<div class="t" style="left:1202px;top:684px;font-size:10px;color:#aca899">Fill:</div>
<div class="a" style="left:1222px;top:680px;width:49px;height:16px;border:1px solid #c9c7ba;background:#f6f5ee"><div class="t" style="left:5px;top:2px;font-size:10px;letter-spacing:-.4px;color:#aca899">100%</div><div class="a" style="left:36px;top:0;width:11px;height:13px;border-left:1px solid #e8e6da"><div class="a" style="left:2px;top:3px;width:4px;height:4px;border-right:1.5px solid #c0beb2;border-top:1.5px solid #c0beb2;transform:rotate(45deg)"></div></div></div>
<div class="a" style="left:1069px;top:701px;width:191px;height:1px;background:#000"></div>
<div class="a" style="left:1260px;top:702px;width:15px;height:152px;background:#fbfbf8"></div>
<div class="a" style="left:1262px;top:704px;width:12px;height:14px;background:#eeede6;border:1px solid #e4e2d8"><div class="a" style="left:3px;top:5px;width:5px;height:5px;border-left:2px solid #c8c6bc;border-top:2px solid #c8c6bc;transform:rotate(45deg)"></div></div>
<div class="a" style="left:1262px;top:838px;width:12px;height:14px;background:#eeede6;border:1px solid #e4e2d8"><div class="a" style="left:3px;top:2px;width:5px;height:5px;border-right:2px solid #c8c6bc;border-bottom:2px solid #c8c6bc;transform:rotate(45deg)"></div></div>
<!-- layer rows -->
<div class="a" style="left:1113px;top:727px;width:147px;height:28px;background:#316ac5"></div>
<div class="a" style="left:1069px;top:755px;width:191px;height:1px;background:#000"></div>
<div class="a" style="left:1069px;top:727px;width:44px;height:1px;background:#aca899"></div>
<div class="a" style="left:1113px;top:702px;width:1px;height:53px;background:#000"></div>
<div class="a" style="left:1091px;top:702px;width:1px;height:53px;background:#d8d6c8"></div>
<div class="a" style="left:1073px;top:707px;width:16px;height:17px;border:1px solid #c9c7ba;background:#ece9d8"></div>
<div class="a" style="left:1073px;top:733px;width:16px;height:17px;border:1px solid #c9c7ba;background:#ece9d8"></div>
<svg class="a" style="left:1073px;top:707px" width="16" height="44" viewBox="0 0 16 44"><g><ellipse cx="8" cy="8.5" rx="6.5" ry="3.5" fill="#fff" stroke="#111" stroke-width="1.4"/><circle cx="8" cy="8.5" r="2.5" fill="#111"/><ellipse cx="8" cy="34.5" rx="6.5" ry="3.5" fill="#fff" stroke="#111" stroke-width="1.4"/><circle cx="8" cy="34.5" r="2.5" fill="#111"/></g></svg>
<div class="a" style="left:1095px;top:707px;width:15px;height:17px;border:1px solid #d8d6c8"></div>
<div class="a" style="left:1095px;top:733px;width:15px;height:17px;border:1px solid #d8d6c8"></div><svg class="a" style="left:1097px;top:735px" width="12" height="14" viewBox="0 0 12 14"><path d="M1 13 C3 12 4 10 5 9 L11 2" stroke="#333" stroke-width="1.3" fill="none"/></svg>
<svg class="a" style="left:1116px;top:704px" width="32" height="21" viewBox="0 0 32 21"><defs><radialGradient id="lt" cx="17" cy="14" r="12" gradientUnits="userSpaceOnUse"><stop offset="0" stop-color="#f0f4ff"/><stop offset=".2" stop-color="#a0acc0"/><stop offset=".6" stop-color="#303440"/><stop offset="1" stop-color="#08080a"/></radialGradient></defs><rect width="32" height="21" fill="url(#lt)"/><path d="M8 19h0M18 5h0M12 20h0M16 19h0M3 20h0M1 16h0M9 18h0M8 7h0M23 16h0M18 18h0M16 13h0M21 5h0M8 5h0M28 17h0M13 1h0M22 3h0M6 19h0M2 10h0M25 1h0M27 9h0M16 20h0M24 13h0M23 14h0M13 19h0M15 5h0M29 12h0M4 2h0M5 16h0M7 9h0M31 14h0" stroke="#fff" stroke-opacity=".6" stroke-width="1" stroke-linecap="round"/></svg>
<div class="a" style="left:1115px;top:729px;width:34px;height:25px;border:1px solid #fff;box-shadow:inset 0 0 0 1px #316ac5;background:#316ac5"><div class="a" style="left:2px;top:2px;width:28px;height:19px;background:radial-gradient(circle at 55% 50%,#a0b0c8 0,#2a3040 3px,#101418 9px)"></div></div>
<div class="t" style="left:1151px;top:710px;font-size:10px">Layer 1</div>
<div class="t" style="left:1152px;top:735px;color:#fff;font-style:italic;letter-spacing:-.1px">Background</div>
<svg class="a" style="left:1246px;top:736px" width="11" height="12" viewBox="0 0 11 12"><rect x="1" y="5" width="9" height="7" fill="#fff"/><path d="M3 5 V3.5 C3 0.5 8 0.5 8 3.5 V5" fill="none" stroke="#fff" stroke-width="1.5"/><rect x="4.5" y="7" width="2" height="3" fill="#316ac5"/></svg>
<svg class="a" style="left:1096px;top:711px" width="70" height="64" viewBox="0 0 70 64"><ellipse cx="35" cy="31.4" rx="27.6" ry="24.3" fill="none" stroke="#e80000" stroke-width="4.2"/></svg>
<div class="a" style="left:1069px;top:854px;width:206px;height:1px;background:#000"></div>
<div class="a" style="left:1260px;top:854px;width:1px;height:15px;background:#000"></div>
<svg class="a" style="left:1096px;top:855px" width="180" height="14" viewBox="0 0 180 14"><g stroke="#555" fill="#ccc"><circle cx="8" cy="7" r="6" fill="#999"/><path d="M6 11 L9 3 H11 M6 6 H10" stroke="#fff" fill="none"/><rect x="29.5" y="0.5" width="14" height="13" fill="#bbb" stroke="#999"/><circle cx="36.5" cy="7" r="4" fill="#f4f4f4"/><path d="M58.5 3.5 H63 L64 5 H69.5 V12.5 H58.5Z" fill="#e0e0e0"/><circle cx="92" cy="7" r="6" fill="#333"/><path d="M87.5 11 L96.5 3 A6 6 0 0 1 92 13Z" fill="#f4f4f4" stroke="none"/><rect x="118.5" y="2.5" width="9" height="10" fill="#f4f4f4"/><rect x="121" y="6" width="4" height="4" fill="#555" stroke="none"/><path d="M147.5 4.5 H155.5 L154.5 13 H148.5Z M146 4 H157 M149.5 2 H153.5" fill="#e8e8e8"/></g><path d="M168 12 H178 M172 8 H178 M175 4 H178" stroke="#aaa" stroke-dasharray="1 2"/></svg>

<!-- dialog -->
<div class="a" style="left:853px;top:127px;width:411px;height:297px;background:#0a2aa8;border-radius:7px 7px 0 0"></div>
<div class="a xpbar" style="left:853px;top:127px;width:411px;height:29px;border-radius:7px 7px 0 0"></div>
<div class="a" style="left:856px;top:156px;width:405px;height:265px;background:#ece9d8;box-shadow:inset -1px -1px #f8f8ff"></div><svg class="a" style="left:1247px;top:407px" width="12" height="12" viewBox="0 0 12 12"><path d="M10 2h0M10 6h0M10 10h0M6 6h0M6 10h0M2 10h0" stroke="#d8d4c4" stroke-width="1.6" stroke-linecap="square"/></svg>
<div class="t" style="left:859px;top:137px;font-size:13px;font-weight:bold;color:#fff;text-shadow:1px 1px #0a1e70">Hue/Saturation</div>
<div class="a" style="left:1238px;top:132px;width:21px;height:21px;border:1px solid #fff;border-radius:3px;background:linear-gradient(135deg,#e8906c,#dc5c34 50%,#c84418)"><div class="a" style="left:4px;top:9px;width:12px;height:2px;background:#fff;transform:rotate(45deg)"></div><div class="a" style="left:4px;top:9px;width:12px;height:2px;background:#fff;transform:rotate(-45deg)"></div></div>
<!-- group box -->
<div class="a" style="left:867px;top:174px;width:293px;height:165px;border:1px solid #c8c6b4;border-right-color:#fff;border-bottom-color:#fff;box-shadow:inset -1px -1px #c8c6b4,inset 1px 1px #fff"></div>
<div class="a" style="left:877px;top:168px;width:168px;height:14px;background:#ece9d8"></div>
<div class="t" style="left:881px;top:172px;font-size:12px">Edit:</div>
<div class="a" style="left:911px;top:166px;width:130px;height:22px;border:1px solid #7f9db9;background:#fff"><div class="t" style="left:5px;top:5px;font-size:12px">Master</div><div class="a" style="left:112px;top:1px;width:16px;height:18px;background:linear-gradient(#d8e4fc,#b4c8f6);border-radius:2px"><div class="a" style="left:4px;top:5px;width:6px;height:6px;border-right:2px solid #4d6185;border-bottom:2px solid #4d6185;transform:rotate(45deg)"></div></div></div>
<!-- labels -->
<div class="t" style="left:916px;top:200px;font-size:12px">Hue:</div>
<div class="t" style="left:916px;top:247px;font-size:12px">Saturation:</div>
<div class="t" style="left:916px;top:293px;font-size:12px">Lightness:</div>
<!-- inputs -->
<div class="a" style="left:1070px;top:195px;width:42px;height:20px;border:1px solid #a8a69a;background:#fff"><div class="t" style="left:4px;top:4px;font-size:12px">0</div></div>
<div class="a" style="left:1070px;top:242px;width:42px;height:20px;border:1px solid #a8a69a;background:#fff"><div class="t" style="left:4px;top:4px;font-size:12px">60</div></div>
<div class="a" style="left:1070px;top:289px;width:42px;height:20px;border:1px solid #a8a69a;background:#fff"><div class="t" style="left:4px;top:4px;font-size:12px">0</div></div>
<!-- sliders -->
<div class="a" style="left:914px;top:226px;width:200px;height:3px;border-top:1px solid #b0ad9e;border-bottom:1px solid #fff;background:#e4e2d4;border-radius:1px"></div>
<div class="a" style="left:914px;top:273px;width:200px;height:3px;border-top:1px solid #b0ad9e;border-bottom:1px solid #fff;background:#e4e2d4;border-radius:1px"></div>
<div class="a" style="left:1014px;top:273px;width:1px;height:4px;background:#9d9d92"></div>
<div class="a" style="left:914px;top:320px;width:200px;height:3px;border-top:1px solid #b0ad9e;border-bottom:1px solid #fff;background:#e4e2d4;border-radius:1px"></div>
<svg class="a" style="left:1007px;top:218px" width="14" height="19" viewBox="0 0 14 19"><path d="M1.5 6.5 L7 1 L12.5 6.5 V17.5 H1.5 Z" fill="#f7f7f4" stroke="#8a9a8a"/><rect x="1.5" y="14.5" width="11" height="3" fill="#21a121"/></svg>
<svg class="a" style="left:1067px;top:265px" width="14" height="19" viewBox="0 0 14 19"><path d="M1.5 6.5 L7 1 L12.5 6.5 V17.5 H1.5 Z" fill="#f7f7f4" stroke="#8a9a8a"/><rect x="1.5" y="14.5" width="11" height="3" fill="#21a121"/></svg>
<svg class="a" style="left:1007px;top:312px" width="14" height="19" viewBox="0 0 14 19"><path d="M1.5 6.5 L7 1 L12.5 6.5 V17.5 H1.5 Z" fill="#f7f7f4" stroke="#8a9a8a"/><rect x="1.5" y="14.5" width="11" height="3" fill="#21a121"/></svg>
<!-- buttons -->
<div class="a" style="left:1179px;top:178px;width:71px;height:18px;border:1px solid #003c74;border-radius:3px;background:linear-gradient(#fff,#ecebe6 80%,#d6d0c5);box-shadow:inset 0 0 0 1px #a8c4f4,inset 0 -1px 0 2px #c8dafc"><div class="t" style="left:0;width:69px;text-align:center;top:3px;font-size:12px">OK</div></div>
<div class="a" style="left:1179px;top:206px;width:71px;height:18px;border:1px solid #003c74;border-radius:3px;background:linear-gradient(#fff,#ecebe6 80%,#d6d0c5)"><div class="t" style="left:0;width:69px;text-align:center;top:3px;font-size:12px;letter-spacing:-.4px">Cancel</div></div>
<div class="a" style="left:1179px;top:241px;width:71px;height:18px;border:1px solid #003c74;border-radius:3px;background:linear-gradient(#fff,#ecebe6 80%,#d6d0c5)"><div class="t" style="left:0;width:69px;text-align:center;top:3px;font-size:12px">Load...</div></div>
<div class="a" style="left:1179px;top:269px;width:71px;height:18px;border:1px solid #003c74;border-radius:3px;background:linear-gradient(#fff,#ecebe6 80%,#d6d0c5)"><div class="t" style="left:0;width:69px;text-align:center;top:3px;font-size:12px">Save...</div></div>
<!-- checkboxes -->
<div class="a" style="left:1176px;top:340px;width:13px;height:13px;border:1px solid #1c5180;background:linear-gradient(135deg,#dcdcd7,#fff)"></div>
<div class="t" style="left:1192px;top:342px;font-size:12px;letter-spacing:-.5px">Colorize</div>
<div class="a" style="left:1176px;top:360px;width:13px;height:13px;border:1px solid #1c5180;background:linear-gradient(135deg,#dcdcd7,#fff)"><div class="a" style="left:3px;top:1px;width:5px;height:8px;border-right:2px solid #21a121;border-bottom:2px solid #21a121;transform:rotate(40deg)"></div></div>
<div class="t" style="left:1192px;top:363px;font-size:12px">Preview</div>
<!-- eyedroppers -->
<svg class="a" style="left:1090px;top:354px" width="70" height="18" viewBox="0 0 70 18"><g transform="translate(0 0)"><path d="M2 16.5 L3 13.5 L10 6.5 L12 8.5 L5 15.5Z" fill="#fafaf6" stroke="#7a7a72" stroke-width="1"/><path d="M8.5 5 L13.5 10" stroke="#6a6a64" stroke-width="2"/><path d="M11.5 4.5 L14.5 1.5 C15.5 .5 17.5 2.5 16.5 3.5 L13.5 6.5Z" fill="#7a7a72" stroke="#5a5a54" stroke-width=".8"/></g><g transform="translate(25 0)"><path d="M2 16.5 L3 13.5 L10 6.5 L12 8.5 L5 15.5Z" fill="#fafaf6" stroke="#7a7a72" stroke-width="1"/><path d="M8.5 5 L13.5 10" stroke="#6a6a64" stroke-width="2"/><path d="M11.5 4.5 L14.5 1.5 C15.5 .5 17.5 2.5 16.5 3.5 L13.5 6.5Z" fill="#7a7a72" stroke="#5a5a54" stroke-width=".8"/><path d="M8 14.5 H13 M10.5 12 V17" stroke="#6a6a64" stroke-width="1.1"/></g><g transform="translate(50 0)"><path d="M2 16.5 L3 13.5 L10 6.5 L12 8.5 L5 15.5Z" fill="#fafaf6" stroke="#7a7a72" stroke-width="1"/><path d="M8.5 5 L13.5 10" stroke="#6a6a64" stroke-width="2"/><path d="M11.5 4.5 L14.5 1.5 C15.5 .5 17.5 2.5 16.5 3.5 L13.5 6.5Z" fill="#7a7a72" stroke="#5a5a54" stroke-width=".8"/><path d="M8 15 H13" stroke="#6a6a64" stroke-width="1.1"/></g></svg>
<!-- hue bars -->
<div class="a" style="left:867px;top:384px;width:383px;height:9px;border:1px solid #000;background:linear-gradient(90deg,#50f8ff 0%,#0000ff 17%,#ff00ff 33%,#ff0000 51%,#ffff00 67%,#20f020 84%,#60ecec 100%)"></div>
<div class="a" style="left:868px;top:393px;width:381px;height:8px;background:#fff"></div>
<div class="a" style="left:867px;top:401px;width:383px;height:9px;border:1px solid #000;background:linear-gradient(90deg,#50f8ff 0%,#0000ff 17%,#ff00ff 33%,#ff0000 51%,#ffff00 67%,#20f020 84%,#60ecec 100%)"></div>

</body></html>
